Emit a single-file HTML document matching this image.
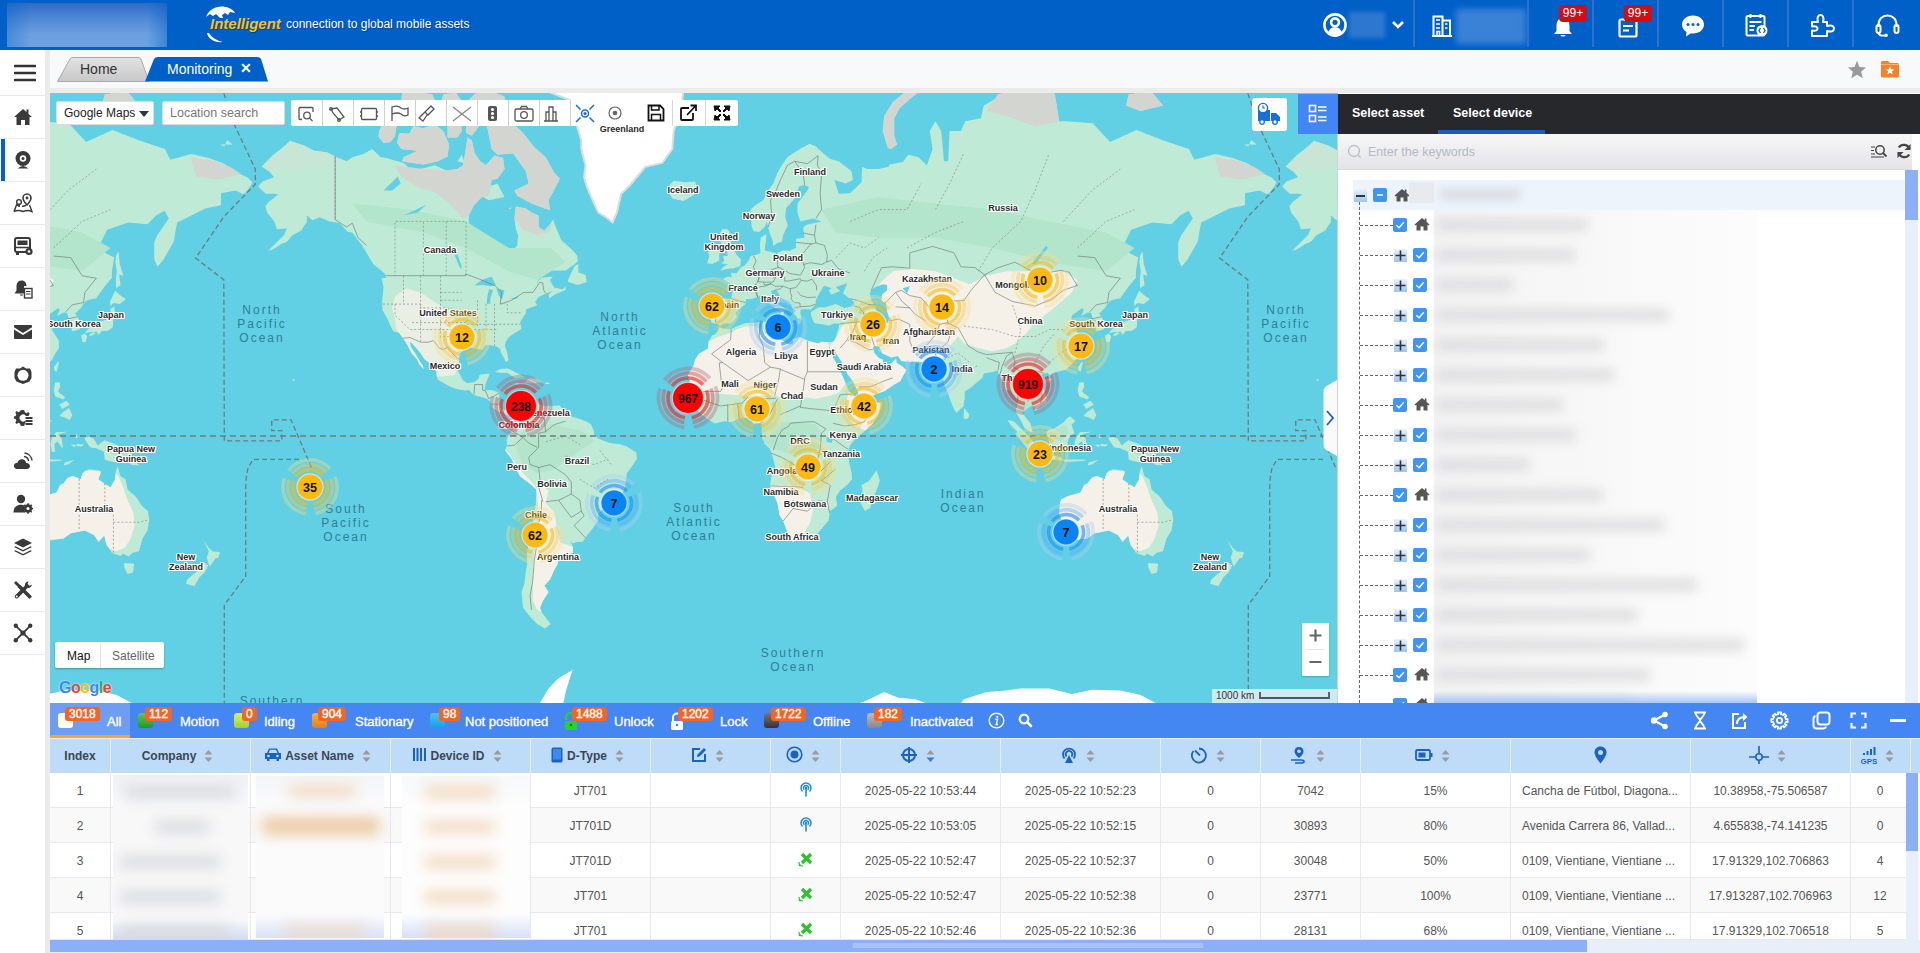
<!DOCTYPE html>
<html><head><meta charset="utf-8"><title>Monitoring</title>
<style>
*{box-sizing:border-box;margin:0;padding:0}
html,body{width:1920px;height:953px;overflow:hidden;background:#f7f8fa;font-family:"Liberation Sans",sans-serif;font-size:13px;color:#333}
.abs{position:absolute}
#hdr{position:absolute;left:0;top:0;width:1920px;height:50px;background:#0060c7}
.blur{position:absolute;filter:blur(6px)}
.sep{position:absolute;top:0;width:2px;height:47px;background:#2a72cc}
.badge99{position:absolute;height:17px;width:28px;border-radius:4px;background:#d20d16;color:#fff;font-size:12px;line-height:17px;text-align:center}
#side{position:absolute;left:0;top:50px;width:45px;height:903px;background:#fff}
#sidegap{position:absolute;left:45px;top:50px;width:5px;height:903px;background:#ebebeb}
.sitem{position:absolute;left:0;width:45px;height:43px;border-top:1px solid #e8eaf2}
.sitem svg{position:absolute;left:13px;top:11px}
#tabs{position:absolute;left:50px;top:50px;width:1870px;height:38px;background:#f8f9fa}
#tabgap{position:absolute;left:50px;top:88px;width:1870px;height:5px;background:#ebebeb}
#map{position:absolute;left:50px;top:93px;width:1288px;height:610px;overflow:hidden;background:#61d0e4}
.tb{position:absolute;background:#fff;border-radius:2px}
.lbl{position:absolute;font-size:9px;font-weight:bold;color:#2a2a2a;white-space:nowrap;text-shadow:-1px 0 #fff,1px 0 #fff,0 -1px #fff,0 1px #fff,1px 1px #fff,-1px -1px #fff,1px -1px #fff,-1px 1px #fff;transform:translate(-50%,-50%);text-align:center;line-height:10px}
.ocn{position:absolute;font-size:12px;color:#2f7f96;letter-spacing:2px;text-align:center;line-height:14px;transform:translate(-50%,-50%);white-space:nowrap}
.cl{position:absolute;transform:translate(-50%,-50%)}
#panel{position:absolute;left:1338px;top:93px;width:582px;height:610px;background:#fff}
#status{position:absolute;left:50px;top:703px;width:1870px;height:35px;background:#4486f2;color:#fff}
.st{position:absolute;top:1px;height:35px;font-size:13px;line-height:35px;white-space:nowrap;-webkit-text-stroke:0.35px #fff}
.cnt{position:absolute;top:4px;height:14px;border-radius:3px;background:#f26522;color:#fff;font-size:12px;line-height:14px;padding:0 4px;-webkit-text-stroke:0.4px #fff}
.sq{position:absolute;top:10px;width:15px;height:15px;border-radius:3px}
#thead{position:absolute;left:50px;top:738px;width:1870px;height:35px;background:#bedcf8;border-top:1px solid #e6f0fb}
.th{position:absolute;top:0;height:34px;border-right:1px solid #e4eefb;font-weight:bold;color:#3a4656;font-size:12px;line-height:34px;text-align:center;white-space:nowrap}
.row{position:absolute;left:50px;width:1856px;height:35px;border-bottom:1px solid #e6e9f0}
.td{position:absolute;top:0;height:34px;border-right:1px solid #e6e9f0;color:#555;font-size:12px;line-height:36px;text-align:center;white-space:nowrap;overflow:hidden}
.sort{display:inline-block;width:9px;height:14px;vertical-align:middle;margin-left:8px;position:relative;top:-1px}
</style></head><body>
<div id="hdr">
 <div class="abs" style="left:7px;top:3px;width:160px;height:44px;background:linear-gradient(180deg,#2d6cc6 0%,#4f88d6 35%,#6c9fdf 70%,#70a2e0 100%);overflow:hidden"><div class="abs" style="left:140px;top:0;width:20px;height:44px;background:linear-gradient(90deg,rgba(0,96,199,0),rgba(0,96,199,.45))"></div><div class="abs" style="left:0;top:0;width:25px;height:44px;background:linear-gradient(90deg,rgba(0,96,199,.35),rgba(0,96,199,0))"></div></div>
 <svg class="abs" style="left:203px;top:3px" width="36" height="42" viewBox="0 0 36 42">
  <path d="M3 14 C6 5 17 1 26 5 C29 6 31 8 32 10 L27 9 L25 12 L22 10 L19 12 L20 15 L17 15 L13 11 L10 13 L7 11 Z" fill="#fff"/>
  <path d="M4 30 C5 36 12 40 20 39 C15 38 9 35 6 30 Z" fill="#fff"/>
 </svg>
 <div class="abs" style="left:210px;top:15px;font-size:15px;font-weight:bold;font-style:italic;color:#fbc01e;text-shadow:1px 1px 1px rgba(0,0,0,.35)">Intelligent</div>
 <div class="abs" style="left:286px;top:17px;font-size:12px;color:#fff;text-shadow:1px 1px 1px rgba(0,0,0,.3)">connection to global mobile assets</div>

 <svg class="abs" style="left:1323px;top:13px" width="24" height="24" viewBox="0 0 24 24"><circle cx="12" cy="12" r="10.6" fill="none" stroke="#fff" stroke-width="2.6"/><circle cx="12" cy="9.3" r="3.9" fill="none" stroke="#fff" stroke-width="2.6"/><path d="M5.2 19.5 C6.5 15.2 9 14.2 12 14.2 C15 14.2 17.5 15.2 18.8 19.5 C17 21.2 14.8 22 12 22 C9.2 22 7 21.2 5.2 19.5 Z" fill="#fff"/></svg>
 <div class="blur" style="left:1349px;top:12px;width:36px;height:26px;background:#2d77d0;filter:blur(2px)"></div>
 <svg class="abs" style="left:1391px;top:20px" width="14" height="10" viewBox="0 0 14 10"><path d="M2 2 L7 7 L12 2" fill="none" stroke="#fff" stroke-width="2.6"/></svg>
 <div class="sep" style="left:1413px"></div>
 <svg class="abs" style="left:1432px;top:15px" width="20" height="22" viewBox="0 0 20 22"><path d="M1.5 21 V1.5 H10.5 V21 M10.5 5.5 H18 V21 M0 21 H20" fill="none" stroke="#fff" stroke-width="2"/><path d="M4 5 H8 M4 9 H8 M4 13 H8 M13 9 H15.5 M13 13 H15.5 M5 21 V16.5 H7.5 V21" stroke="#fff" stroke-width="1.6" fill="none"/></svg>
 <div class="blur" style="left:1456px;top:9px;width:70px;height:35px;background:#3a82d6;filter:blur(3px)"></div>
 <div class="sep" style="left:1527px"></div>
 <svg class="abs" style="left:1552px;top:16px" width="22" height="22" viewBox="0 0 22 22"><path d="M11 2 C6 2 4.5 6 4.5 10 V15 L2 18 H20 L17.5 15 V10 C17.5 6 16 2 11 2 Z" fill="#fff"/><path d="M8.5 19 C8.5 21 13.5 21 13.5 19 Z" fill="#fff"/></svg>
 <div class="badge99" style="left:1559px;top:5px">99+</div>
 <div class="sep" style="left:1592px"></div>
 <svg class="abs" style="left:1618px;top:15px" width="20" height="23" viewBox="0 0 20 23"><rect x="1.5" y="4.5" width="17" height="17" rx="1.5" fill="none" stroke="#fff" stroke-width="2.2"/><path d="M5 11 H15 M5 15.5 H11" stroke="#fff" stroke-width="2.2"/><rect x="6" y="2" width="8" height="4" fill="#fff"/></svg>
 <div class="badge99" style="left:1624px;top:5px">99+</div>
 <div class="sep" style="left:1657px"></div>
 <svg class="abs" style="left:1681px;top:14px" width="24" height="23" viewBox="0 0 24 23"><path d="M12 1.5 C5.5 1.5 1 5.5 1 10.5 C1 14 3 16.5 5.5 18 L5 22.5 L10 19.3 C10.7 19.4 11.3 19.5 12 19.5 C18.5 19.5 23 15.5 23 10.5 C23 5.5 18.5 1.5 12 1.5 Z" fill="#fff"/><circle cx="7" cy="10.5" r="1.5" fill="#0060c7"/><circle cx="12" cy="10.5" r="1.5" fill="#0060c7"/><circle cx="17" cy="10.5" r="1.5" fill="#0060c7"/></svg>
 <div class="sep" style="left:1722px"></div>
 <svg class="abs" style="left:1745px;top:13px" width="24" height="25" viewBox="0 0 24 25"><rect x="1.5" y="3" width="18" height="19.5" rx="1.5" fill="none" stroke="#fff" stroke-width="2"/><path d="M5.5 1 V5 M15.5 1 V5 M4.5 9 H16.5 M4.5 13 H10 M4.5 17 H9" stroke="#fff" stroke-width="2"/><circle cx="17" cy="17.5" r="5.5" fill="#fff"/><path d="M15.5 15 L14 17.5 L15.5 20 M18.5 15 L20 17.5 L18.5 20" stroke="#0060c7" stroke-width="1.3" fill="none"/></svg>
 <div class="sep" style="left:1787px"></div>
 <svg class="abs" style="left:1810px;top:13px" width="26" height="26" viewBox="0 0 26 26"><path d="M2 9 H8 C6.5 4 8.5 2 10.5 2 C12.5 2 14.5 4 13 9 H17 V13 C22 11.5 24 13.5 24 15.5 C24 17.5 22 19.5 17 18 V23 H2 V17.5 C6 18.5 7.5 17 7.5 15.5 C7.5 14 6 12.5 2 13.5 Z" fill="none" stroke="#fff" stroke-width="2" stroke-linejoin="round"/></svg>
 <div class="sep" style="left:1852px"></div>
 <svg class="abs" style="left:1875px;top:14px" width="25" height="24" viewBox="0 0 25 24"><path d="M3.5 13 V10.5 C3.5 5 7.5 1.5 12.5 1.5 C17.5 1.5 21.5 5 21.5 10.5 V13" fill="none" stroke="#fff" stroke-width="2"/><rect x="1.5" y="11" width="4" height="8" rx="2" fill="none" stroke="#fff" stroke-width="2"/><rect x="19.5" y="11" width="4" height="8" rx="2" fill="none" stroke="#fff" stroke-width="2"/><path d="M3.5 19 C4 21.5 6 22 10 21.5" fill="none" stroke="#fff" stroke-width="1.8"/><circle cx="11" cy="21.3" r="1.8" fill="#fff"/></svg>
</div>

<div id="side">
 <svg class="abs" style="left:14px;top:14px" width="22" height="18" viewBox="0 0 22 18"><path d="M1 2 H21 M1 9 H21 M1 16 H21" stroke="#333" stroke-width="2.6" stroke-linecap="round"/></svg>
<div class="sitem" style="top:45px"><svg width="20" height="20" viewBox="0 0 20 20"><path d="M10 2 L1 10 H3.5 V18 H8 V13 H12 V18 H16.5 V10 H19 L15.5 6.9 V2.5 H13.5 V5.1 Z" fill="#3a3a3a"/></svg></div><div class="sitem" style="top:88px"><div class="abs" style="left:1px;top:0;width:4px;height:42px;background:#0a5cc8"></div><svg width="20" height="20" viewBox="0 0 20 20"><circle cx="10" cy="8.5" r="7.5" fill="#3a3a3a"/><circle cx="10" cy="8.5" r="3.2" fill="#fff"/><circle cx="10" cy="8.5" r="1.5" fill="#3a3a3a"/><path d="M4.5 18.5 Q10 13.5 15.5 18.5 Z" fill="#3a3a3a"/></svg></div><div class="sitem" style="top:131px"><svg width="20" height="20" viewBox="0 0 20 20"><path d="M1 18.5 L3.5 12 L6.5 13 M9 13.5 L13 12.5 M16.5 12 L19 18.5 Q15 16.5 10 18.5 Q5 16.5 1 18.5" fill="none" stroke="#3a3a3a" stroke-width="1.4"/><path d="M14 1 C11.5 1 10 3 10 5 C10 7.5 14 12 14 12 C14 12 18 7.5 18 5 C18 3 16.5 1 14 1 Z" fill="none" stroke="#3a3a3a" stroke-width="1.6"/><circle cx="14" cy="5" r="1.4" fill="#3a3a3a"/><circle cx="6" cy="9" r="2.4" fill="none" stroke="#3a3a3a" stroke-width="1.4"/><path d="M6 11.5 V14" stroke="#3a3a3a" stroke-width="1.4"/></svg></div><div class="sitem" style="top:174px"><svg width="20" height="20" viewBox="0 0 20 20"><rect x="2" y="2" width="15" height="14" rx="2" fill="none" stroke="#3a3a3a" stroke-width="2"/><rect x="4.5" y="4.5" width="10" height="4.5" fill="#3a3a3a"/><path d="M2 11.5 H17" stroke="#3a3a3a" stroke-width="1.5"/><rect x="3" y="16" width="3" height="3" fill="#3a3a3a"/><circle cx="16" cy="15.5" r="3.6" fill="#3a3a3a"/><circle cx="16" cy="15.5" r="1.3" fill="#fff"/></svg></div><div class="sitem" style="top:217px"><svg width="20" height="20" viewBox="0 0 20 20"><path d="M8.5 1.5 C5 1.5 3.5 4.5 3.5 7.5 V11.5 L1.5 14.5 H11 V7 H13.5 C13.5 4 12 1.5 8.5 1.5 Z" fill="#3a3a3a"/><path d="M6.5 15.5 Q8.5 18 10.5 15.5 Z" fill="#3a3a3a"/><rect x="11.5" y="9.5" width="7.5" height="9.5" fill="#fff" stroke="#3a3a3a" stroke-width="1.4"/><path d="M13 12.5 H17.5 M13 15 H17.5" stroke="#3a3a3a" stroke-width="1.1"/></svg></div><div class="sitem" style="top:260px"><svg width="20" height="20" viewBox="0 0 20 20"><path d="M1 4 Q1 3 2 3 H18 Q19 3 19 4 V5.3 L10 11 L1 5.3 Z" fill="#3a3a3a"/><path d="M1 7.5 L10 13 L19 7.5 V16 Q19 17 18 17 H2 Q1 17 1 16 Z" fill="#3a3a3a"/></svg></div><div class="sitem" style="top:303px"><svg width="20" height="20" viewBox="0 0 20 20"><path d="M10 1.5 L13 3.5 H17 L18.5 7 V13 L16.5 16.5 L10 19 L3.5 16.5 L1.5 13 V7 L3 3.5 H7 Z" fill="#3a3a3a"/><circle cx="10" cy="10.3" r="5.5" fill="#fff"/></svg></div><div class="sitem" style="top:346px"><svg width="20" height="20" viewBox="0 0 20 20"><path d="M8 1 L9.8 1.2 L10.3 3.3 L12 4.2 L13.9 3.1 L15.2 4.4 L14.2 6.3 L14.5 7 H11.5 A3.5 3.5 0 1 0 11 11.5 V14 L10.3 14.7 L9.8 16.8 L8 17 L6.2 16.8 L5.7 14.7 L4 13.8 L2.1 14.9 L0.8 13.6 L1.8 11.7 L1.2 9.9 L-0.6 9.4 V7.6 L1.2 7.1 L1.8 5.3 L0.8 3.4 L2.1 2.1 L4 3.2 L5.7 2.3 L6.2 1.2 Z" fill="#3a3a3a" transform="translate(1.5,1)"/><path d="M12.5 10 H19.5 M12.5 13 H19.5 M12.5 16 H19.5" stroke="#3a3a3a" stroke-width="1.8"/></svg></div><div class="sitem" style="top:389px"><svg width="20" height="20" viewBox="0 0 20 20"><path d="M4.5 18 C1.5 18 0.8 15.5 1 14.5 C1.3 12.5 3 11.5 4.5 11.8 C5 9 7.5 7.8 9.5 8.2 C11.5 8.5 13 10 13.2 12 C15.5 11.8 17 13.5 17 15 C17 17 15.5 18 14 18 Z" fill="#3a3a3a"/><path d="M11 5.5 A5 5 0 0 1 15.5 10 M11.5 2 A8.5 8.5 0 0 1 19 9.5" fill="none" stroke="#3a3a3a" stroke-width="1.4"/></svg></div><div class="sitem" style="top:432px"><svg width="20" height="20" viewBox="0 0 20 20"><circle cx="8" cy="5" r="4.2" fill="#3a3a3a"/><path d="M0.5 18.5 C0.5 13 4 10.8 8 10.8 C9.5 10.8 10.5 11 11.5 11.5 V18.5 Z" fill="#3a3a3a"/><circle cx="15" cy="14.5" r="4.2" fill="#3a3a3a"/><circle cx="15" cy="14.5" r="1.5" fill="#fff"/><path d="M15 9.2 V19.8 M9.7 14.5 H20.3 M11.3 10.8 L18.7 18.2 M18.7 10.8 L11.3 18.2" stroke="#3a3a3a" stroke-width="1.6"/><circle cx="15" cy="14.5" r="1.5" fill="#fff"/></svg></div><div class="sitem" style="top:475px"><svg width="20" height="20" viewBox="0 0 20 20"><path d="M10 1.5 L19 6 L10 10.5 L1 6 Z" fill="#3a3a3a"/><path d="M2.5 9.3 L10 13 L17.5 9.3 L19 10 L10 14.5 L1 10 Z" fill="#3a3a3a"/><path d="M2.5 13.3 L10 17 L17.5 13.3 L19 14 L10 18.5 L1 14 Z" fill="#3a3a3a"/></svg></div><div class="sitem" style="top:518px"><svg width="20" height="20" viewBox="0 0 20 20"><path d="M3 2 L6 5 L5.5 7 L16.5 18 L18 16.5 L7 5.5 L5 6 L2 3 Z" fill="#3a3a3a" stroke="#3a3a3a" stroke-width="1.4"/><path d="M15.5 1.5 C13 1.5 11.5 3.5 12 5.5 L2.5 15 C1.5 16 1.5 17.5 2.5 18 C3.5 19 4.5 18.5 5.5 17.5 L14.5 8 C16.5 8.5 18.8 7 18.8 4.5 L16.8 5.8 L14.5 4 Z" fill="#3a3a3a"/><circle cx="3.8" cy="16.5" r="0.9" fill="#fff"/></svg></div><div class="sitem" style="top:561px"><svg width="20" height="20" viewBox="0 0 20 20"><circle cx="10" cy="10" r="2.6" fill="#3a3a3a"/><circle cx="2.8" cy="2.8" r="2.2" fill="#3a3a3a"/><circle cx="17.2" cy="2.8" r="2.2" fill="#3a3a3a"/><circle cx="2.8" cy="17.2" r="2.2" fill="#3a3a3a"/><circle cx="17.2" cy="17.2" r="2.2" fill="#3a3a3a"/><path d="M2.8 2.8 L17.2 17.2 M17.2 2.8 L2.8 17.2 M10 10 L10 10" stroke="#3a3a3a" stroke-width="1.8"/><path d="M5 10 H15 M10 5 V15" stroke="#3a3a3a" stroke-width="0" /></svg></div><div class="sitem" style="top:604px;height:1px"></div></div>
<div id="sidegap"></div>
<div id="tabs">
 <svg class="abs" style="left:7px;top:7px" width="220" height="25" viewBox="0 0 220 25">
  <defs><linearGradient id="gh" x1="0" y1="0" x2="0" y2="1"><stop offset="0" stop-color="#e3e3e3"/><stop offset="1" stop-color="#c8c8c8"/></linearGradient></defs>
  <path d="M0.5 24.5 L13 2 Q14 0.5 16 0.5 L81 0.5 Q83 0.5 84 2 L92 24.5 Z" fill="url(#gh)" stroke="#a9a9a9" stroke-width="1"/>
  <path d="M88 24.5 L97 2 Q98 0 101 0 L200 0 Q203 0 204 2 L211 24.5 Z" fill="#0060c7"/>
 </svg>
 <div class="abs" style="left:30px;top:11px;font-size:14px;color:#333">Home</div>
 <div class="abs" style="left:117px;top:11px;font-size:14px;color:#fff">Monitoring</div>
 <div class="abs" style="left:190px;top:10px;font-size:14px;color:#fff;font-weight:bold">✕</div>
 <svg class="abs" style="left:1797px;top:10px" width="20" height="19" viewBox="0 0 24 23"><path d="M12 1 L15 8.5 L23 9 L17 14.2 L19 22 L12 17.8 L5 22 L7 14.2 L1 9 L9 8.5 Z" fill="#9a9a9a"/></svg>
 <svg class="abs" style="left:1830px;top:9px" width="20" height="20" viewBox="0 0 20 20"><path d="M1 3.5 Q1 2 2.5 2 H8 L10 4 H17.5 Q19 4 19 5.5 V17 Q19 18.5 17.5 18.5 H2.5 Q1 18.5 1 17 Z" fill="#f5812a"/><path d="M1 5.5 H19" stroke="#ffb26b" stroke-width="1"/><path d="M10 7.5 L11.2 10.3 L14.2 10.5 L11.9 12.4 L12.6 15.3 L10 13.7 L7.4 15.3 L8.1 12.4 L5.8 10.5 L8.8 10.3 Z" fill="#fff"/></svg>
</div>
<div id="tabgap"></div>
<div id="map"><svg width="1288" height="610" viewBox="0 0 1288 610" style="position:absolute;left:0;top:0"><rect width="1288" height="610" fill="#61d0e4"/><path fill="#bfebd6"  d="M208.1 93.4L212.7 88.5L224.1 84.2L219.0 78.3L211.8 73.4L222.7 62.6L234.0 53.4L240.3 48.1L253.9 52.5L263.9 57.7L276.7 59.3L285.2 63.5L296.6 68.3L302.3 64.3L313.7 61.0L322.2 56.0L330.7 64.3L336.4 65.1L353.5 69.9L362.0 77.6L373.4 75.3L384.8 72.2L396.2 77.6L407.5 76.1L413.2 72.2L417.5 44.5L421.8 47.2L424.6 60.2L430.3 68.3L436.0 72.2L444.5 62.6L453.1 65.1L454.5 76.1L447.4 85.7L441.7 87.1L438.8 100.8L430.3 105.4L423.2 113.6L418.9 122.6L418.4 135.1L423.5 144.7L430.3 144.7L438.8 151.4L444.5 153.4L452.2 154.9L452.2 165.0L458.7 172.5L461.6 169.2L462.2 157.4L467.3 152.4L468.1 142.1L465.9 136.2L464.4 125.5L465.9 113.6L475.8 115.4L481.5 119.6L488.6 122.6L488.6 134.0L494.3 137.8L500.0 131.2L503.1 126.7L505.7 134.0L511.4 147.3L518.5 153.4L522.7 157.4L527.0 162.2L527.9 168.3L524.2 171.5L515.6 177.4L504.3 177.4L497.1 177.4L490.0 184.8L485.8 191.2L491.5 184.8L502.8 183.5L500.0 187.0L502.0 191.2L504.3 194.5L512.8 196.5L515.6 193.2L515.6 196.9L505.7 201.0L499.4 205.3L498.6 201.4L502.8 198.1L495.7 200.6L488.6 204.1L485.2 208.8L487.2 212.3L482.9 213.8L475.8 216.4L475.8 220.5L473.0 224.2L470.1 229.6L471.5 235.9L464.7 240.1L459.0 244.1L455.9 248.5L454.8 252.5L457.3 260.0L458.5 267.3L455.9 269.2L453.9 264.8L451.1 260.0L450.2 256.1L446.5 253.5L440.3 252.2L436.0 251.8L432.6 256.7L428.9 256.4L419.5 254.5L416.1 255.8L409.8 260.6L409.3 266.4L408.4 272.6L408.1 278.2L412.9 287.3L417.5 290.3L424.6 289.1L428.9 285.5L429.4 281.9L438.5 280.4L439.4 281.6L437.4 286.4L435.1 292.4L434.6 297.2L441.7 296.9L449.6 299.8L448.8 307.2L448.2 311.5L450.2 314.4L454.5 317.3L460.2 315.9L466.4 318.4L470.1 316.7L471.5 313.3L473.5 311.5L478.7 310.6L482.9 307.5L484.3 309.8L481.8 313.0L482.6 311.5L487.2 309.8L492.9 313.0L504.3 312.7L509.9 312.4L514.2 318.7L521.3 323.6L529.9 325.9L537.0 328.8L541.2 331.6L544.1 338.7L544.1 341.6L548.3 345.8L559.7 350.1L569.7 351.3L576.8 353.5L586.2 359.5L587.0 365.8L581.1 374.5L576.8 380.3L575.4 393.6L571.7 402.0L566.8 410.3L563.4 410.3L554.6 413.4L548.3 421.2L548.1 427.6L543.5 434.2L537.0 442.5L532.7 448.7L526.4 449.0L522.7 450.4L520.2 448.0L523.0 453.9L522.7 460.0L509.1 462.9L507.7 471.1L504.3 476.8L500.0 486.6L494.3 492.8L498.6 499.0L492.9 507.7L490.0 514.9L491.5 519.1L500.6 531.1L494.9 535.6L487.2 531.1L480.1 523.8L473.0 514.5L471.5 499.0L474.4 490.7L475.8 478.7L477.2 471.1L476.9 458.2L479.2 451.1L482.6 442.5L482.9 432.5L483.5 422.8L485.8 411.8L486.3 396.6L481.5 392.1L470.1 383.2L467.0 377.4L461.6 365.8L455.0 357.2L457.3 351.5L456.5 347.3L458.7 341.6L462.2 337.9L465.9 331.6L466.4 323.0L463.6 318.7L460.2 317.9L457.3 322.2L453.1 319.6L448.2 318.7L442.2 314.4L442.5 310.9L437.4 306.0L433.1 304.5L426.0 302.8L423.2 301.3L418.9 296.9L414.7 297.5L407.5 296.3L402.1 294.5L396.2 291.5L387.6 286.4L386.8 283.1L386.5 278.8L383.7 275.1L379.1 269.5L374.8 266.4L370.6 260.3L366.3 255.1L360.0 248.2L360.6 253.5L364.9 260.0L370.6 269.5L372.6 272.6L373.7 276.1L369.1 271.1L367.2 266.4L361.5 260.0L357.2 251.8L353.2 245.2L349.2 240.1L343.3 238.3L339.6 231.0L337.9 226.7L332.5 217.2L332.2 207.3L333.6 194.5L331.6 185.3L336.4 184.8L335.6 181.4L330.7 177.0L323.6 171.5L320.8 166.9L315.1 157.4L312.3 152.4L308.0 147.3L302.3 139.4L298.0 138.9L289.5 130.1L279.5 128.4L269.6 124.3L262.5 127.2L256.8 122.6L256.8 129.5L254.5 132.3L251.1 137.8L242.6 142.1L236.9 148.8L231.2 150.9L222.7 156.4L218.4 157.4L225.5 150.4L234.0 142.1L236.9 135.6L226.9 136.2L224.4 128.4L217.0 119.6L215.5 113.6L218.4 109.2L228.3 101.5L224.1 100.8L215.8 100.8L208.1 93.4ZM1232.1 93.4L1236.7 88.5L1248.1 84.2L1243.0 78.3L1235.8 73.4L1246.7 62.6L1258.0 53.4L1264.3 48.1L1277.9 52.5L1287.9 57.7L1300.7 59.3L1309.2 63.5L1320.6 68.3L1326.3 64.3L1337.7 61.0L1346.2 56.0L1354.7 64.3L1360.4 65.1L1377.5 69.9L1386.0 77.6L1397.4 75.3L1408.8 72.2L1420.2 77.6L1431.5 76.1L1437.2 72.2L1441.5 44.5L1445.8 47.2L1448.6 60.2L1454.3 68.3L1460.0 72.2L1468.5 62.6L1477.1 65.1L1478.5 76.1L1471.4 85.7L1465.7 87.1L1462.8 100.8L1454.3 105.4L1447.2 113.6L1442.9 122.6L1442.4 135.1L1447.5 144.7L1454.3 144.7L1462.8 151.4L1468.5 153.4L1476.2 154.9L1476.2 165.0L1482.7 172.5L1485.6 169.2L1486.2 157.4L1491.3 152.4L1492.1 142.1L1489.9 136.2L1488.4 125.5L1489.9 113.6L1499.8 115.4L1505.5 119.6L1512.6 122.6L1512.6 134.0L1518.3 137.8L1524.0 131.2L1527.1 126.7L1529.7 134.0L1535.4 147.3L1542.5 153.4L1546.7 157.4L1551.0 162.2L1551.9 168.3L1548.2 171.5L1539.6 177.4L1528.3 177.4L1521.1 177.4L1514.0 184.8L1509.8 191.2L1515.5 184.8L1526.8 183.5L1524.0 187.0L1526.0 191.2L1528.3 194.5L1536.8 196.5L1539.6 193.2L1539.6 196.9L1529.7 201.0L1523.4 205.3L1522.6 201.4L1526.8 198.1L1519.7 200.6L1512.6 204.1L1509.2 208.8L1511.2 212.3L1506.9 213.8L1499.8 216.4L1499.8 220.5L1497.0 224.2L1494.1 229.6L1495.5 235.9L1488.7 240.1L1483.0 244.1L1479.9 248.5L1478.8 252.5L1481.3 260.0L1482.5 267.3L1479.9 269.2L1477.9 264.8L1475.1 260.0L1474.2 256.1L1470.5 253.5L1464.3 252.2L1460.0 251.8L1456.6 256.7L1452.9 256.4L1443.5 254.5L1440.1 255.8L1433.8 260.6L1433.3 266.4L1432.4 272.6L1432.1 278.2L1436.9 287.3L1441.5 290.3L1448.6 289.1L1452.9 285.5L1453.4 281.9L1462.5 280.4L1463.4 281.6L1461.4 286.4L1459.1 292.4L1458.6 297.2L1465.7 296.9L1473.6 299.8L1472.8 307.2L1472.2 311.5L1474.2 314.4L1478.5 317.3L1484.2 315.9L1490.4 318.4L1494.1 316.7L1495.5 313.3L1497.5 311.5L1502.7 310.6L1506.9 307.5L1508.3 309.8L1505.8 313.0L1506.6 311.5L1511.2 309.8L1516.9 313.0L1528.3 312.7L1533.9 312.4L1538.2 318.7L1545.3 323.6L1553.9 325.9L1561.0 328.8L1565.2 331.6L1568.1 338.7L1568.1 341.6L1572.3 345.8L1583.7 350.1L1593.7 351.3L1600.8 353.5L1610.2 359.5L1611.0 365.8L1605.1 374.5L1600.8 380.3L1599.4 393.6L1595.7 402.0L1590.8 410.3L1587.4 410.3L1578.6 413.4L1572.3 421.2L1572.1 427.6L1567.5 434.2L1561.0 442.5L1556.7 448.7L1550.4 449.0L1546.7 450.4L1544.2 448.0L1547.0 453.9L1546.7 460.0L1533.1 462.9L1531.7 471.1L1528.3 476.8L1524.0 486.6L1518.3 492.8L1522.6 499.0L1516.9 507.7L1514.0 514.9L1515.5 519.1L1524.6 531.1L1518.9 535.6L1511.2 531.1L1504.1 523.8L1497.0 514.5L1495.5 499.0L1498.4 490.7L1499.8 478.7L1501.2 471.1L1500.9 458.2L1503.2 451.1L1506.6 442.5L1506.9 432.5L1507.5 422.8L1509.8 411.8L1510.3 396.6L1505.5 392.1L1494.1 383.2L1491.0 377.4L1485.6 365.8L1479.0 357.2L1481.3 351.5L1480.5 347.3L1482.7 341.6L1486.2 337.9L1489.9 331.6L1490.4 323.0L1487.6 318.7L1484.2 317.9L1481.3 322.2L1477.1 319.6L1472.2 318.7L1466.2 314.4L1466.5 310.9L1461.4 306.0L1457.1 304.5L1450.0 302.8L1447.2 301.3L1442.9 296.9L1438.7 297.5L1431.5 296.3L1426.1 294.5L1420.2 291.5L1411.6 286.4L1410.8 283.1L1410.5 278.8L1407.7 275.1L1403.1 269.5L1398.8 266.4L1394.6 260.3L1390.3 255.1L1384.0 248.2L1384.6 253.5L1388.9 260.0L1394.6 269.5L1396.6 272.6L1397.7 276.1L1393.1 271.1L1391.2 266.4L1385.5 260.0L1381.2 251.8L1377.2 245.2L1373.2 240.1L1367.3 238.3L1363.6 231.0L1361.9 226.7L1356.5 217.2L1356.2 207.3L1357.6 194.5L1355.6 185.3L1360.4 184.8L1359.6 181.4L1354.7 177.0L1347.6 171.5L1344.8 166.9L1339.1 157.4L1336.3 152.4L1332.0 147.3L1326.3 139.4L1322.0 138.9L1313.5 130.1L1303.5 128.4L1293.6 124.3L1286.5 127.2L1280.8 122.6L1280.8 129.5L1278.5 132.3L1275.1 137.8L1266.6 142.1L1260.9 148.8L1255.2 150.9L1246.7 156.4L1242.4 157.4L1249.5 150.4L1258.0 142.1L1260.9 135.6L1250.9 136.2L1248.4 128.4L1241.0 119.6L1239.5 113.6L1242.4 109.2L1252.3 101.5L1248.1 100.8L1239.8 100.8L1232.1 93.4ZM-353.6 233.1L-350.2 230.6L-343.7 230.6L-340.0 227.4L-337.1 223.4L-338.6 220.5L-336.3 216.8L-331.4 213.4L-328.6 211.1L-327.7 206.1L-322.6 206.1L-316.4 204.1L-312.1 201.8L-307.8 207.3L-302.1 213.0L-297.3 215.7L-293.3 218.3L-293.0 226.0L-290.8 222.4L-289.3 216.8L-285.1 217.9L-292.2 213.4L-298.2 209.2L-302.1 202.6L-302.7 197.7L-299.0 196.5L-296.5 198.6L-295.0 201.4L-292.2 205.3L-285.1 209.2L-282.5 211.9L-280.2 220.5L-276.5 224.9L-276.0 230.3L-273.7 231.3L-272.3 225.3L-273.7 220.5L-273.4 216.8L-269.4 216.1L-263.2 216.4L-258.1 211.5L-258.3 208.0L-256.3 203.3L-253.2 198.1L-250.4 193.2L-249.5 192.8L-242.4 195.3L-245.3 197.7L-242.4 201.4L-233.9 198.1L-238.1 194.1L-226.8 190.3L-231.0 200.6L-223.9 205.7L-219.7 209.2L-219.7 213.0L-229.6 214.9L-238.1 211.1L-249.5 214.5L-255.2 214.2L-262.6 218.7L-263.2 220.5L-262.3 224.2L-260.0 229.6L-258.1 230.6L-250.9 231.3L-245.3 232.8L-239.6 230.3L-234.7 231.0L-235.3 234.9L-238.1 243.5L-239.6 248.5L-245.8 249.2L-245.3 253.5L-244.7 253.8L-241.8 260.6L-240.1 260.0L-238.4 255.1L-238.1 260.0L-233.9 266.4L-229.6 272.6L-226.8 280.4L-221.1 287.9L-216.2 298.4L-214.5 306.6L-209.7 306.3L-198.3 301.3L-189.2 298.1L-179.8 291.5L-173.6 287.9L-171.3 283.4L-167.6 277.3L-171.0 273.9L-177.6 269.8L-177.8 265.7L-184.1 272.0L-191.2 271.7L-191.2 266.7L-195.5 264.8L-199.7 260.0L-201.2 255.1L-199.7 252.8L-194.6 253.5L-191.8 260.3L-182.7 264.5L-176.1 262.9L-172.7 267.9L-162.5 268.9L-155.7 268.6L-147.1 270.1L-142.0 273.6L-140.9 277.9L-135.7 282.5L-131.5 277.9L-131.2 281.3L-130.6 287.6L-129.5 292.4L-125.5 301.3L-122.9 309.2L-120.1 315.9L-117.3 319.9L-115.3 317.6L-110.7 313.5L-109.3 305.7L-109.3 298.4L-103.6 295.1L-97.3 289.4L-91.7 284.9L-90.2 280.4L-84.5 279.4L-80.3 278.8L-76.6 277.3L-74.6 283.4L-69.5 289.4L-68.9 296.3L-66.1 297.5L-60.4 295.4L-57.2 307.2L-58.1 315.9L-57.5 320.2L-52.4 328.8L-49.6 335.0L-43.3 339.3L-41.3 339.0L-43.6 330.2L-49.0 323.6L-52.1 318.7L-55.5 313.0L-53.3 304.5L-50.7 304.2L-46.1 308.6L-43.3 312.7L-39.6 313.8L-39.0 318.2L-33.9 313.3L-27.7 310.1L-27.1 305.7L-29.6 296.9L-34.8 292.4L-36.8 287.9L-34.8 283.4L-30.5 280.4L-25.9 280.1L-24.2 284.0L-22.0 280.4L-13.4 277.9L-7.7 276.4L-2.1 271.1L2.2 266.4L5.6 260.0L9.0 255.1L8.8 250.5L9.0 247.8L5.1 241.8L1.6 236.6L5.1 233.1L11.0 228.1L0.8 228.9L-2.6 226.0L-2.1 222.4L3.6 218.3L7.9 215.3L9.9 216.8L7.0 223.1L13.6 219.4L17.0 219.8L18.7 226.0L22.1 227.8L21.6 237.6L23.5 238.3L30.1 235.9L30.4 229.6L27.8 224.2L25.0 220.5L30.7 215.3L34.1 210.0L37.5 206.9L46.3 205.3L54.8 193.2L61.9 184.8L61.9 178.3L64.2 164.6L54.8 159.8L48.3 154.4L57.1 136.7L78.2 129.5L97.5 131.2L106.0 122.6L114.6 117.8L118.8 125.5L107.5 142.1L104.3 148.8L104.3 166.5L107.5 173.8L113.1 166.9L117.4 159.8L123.7 148.8L127.1 129.5L141.3 122.6L155.2 115.4L170.9 112.3L170.9 100.2L185.7 97.5L193.9 101.5L199.9 94.1L202.5 89.2L197.1 84.2L185.1 79.1L174.3 70.7L158.7 65.1L141.3 61.0L120.3 66.7L114.9 56.0L88.7 47.2L62.5 37.1L36.1 49.0L18.7 30.3L-7.7 28.3L-14.9 28.3L-19.1 1.2L-30.5 -7.2L-40.5 -20.1L-53.3 -4.8L-70.3 1.2L-90.2 12.6L-93.1 25.3L-108.7 28.3L-113.0 38.0L-124.4 38.0L-125.8 68.3L-130.1 68.3L-131.5 51.6L-132.9 38.0L-138.6 28.3L-144.3 38.0L-141.4 56.0L-147.1 72.2L-155.7 64.3L-165.6 61.8L-171.3 69.1L-184.1 71.4L-185.5 73.8L-195.5 76.1L-206.9 76.1L-212.0 73.8L-212.5 89.2L-223.9 100.2L-235.3 100.8L-239.6 87.1L-228.2 90.6L-221.1 87.1L-222.5 78.3L-235.3 68.3L-243.8 65.9L-250.9 60.2L-258.1 53.4L-264.3 50.8L-272.3 55.1L-280.8 60.2L-286.5 64.3L-292.2 72.2L-296.5 79.8L-300.7 90.6L-306.4 98.2L-310.7 107.3L-317.8 111.7L-323.5 116.6L-323.5 122.6L-322.1 134.0L-320.6 138.3L-314.9 138.9L-309.3 134.0L-307.3 128.9L-305.8 134.0L-304.1 141.0L-301.3 147.3L-300.7 152.9L-296.5 149.9L-292.2 148.8L-290.8 142.1L-286.2 132.3L-288.8 124.3L-287.9 114.8L-283.7 110.5L-278.0 104.1L-275.1 93.4L-269.4 92.0L-265.2 94.1L-266.6 97.5L-276.5 110.5L-276.5 119.6L-273.7 128.4L-260.9 125.5L-252.4 128.4L-267.4 131.8L-270.9 134.5L-269.4 144.7L-278.0 145.8L-278.0 154.9L-284.5 157.8L-290.8 157.4L-297.3 160.3L-303.6 158.8L-308.7 157.8L-309.3 155.9L-308.1 148.3L-307.5 141.0L-313.2 144.2L-314.1 152.4L-313.5 160.3L-317.8 161.7L-323.5 163.1L-324.9 166.9L-329.2 172.5L-333.1 174.3L-337.7 180.5L-343.1 179.6L-342.3 184.4L-346.2 183.5L-351.1 186.1L-344.0 190.3L-341.1 197.3L-342.8 205.7L-353.3 205.3L-360.5 204.5L-364.2 207.3L-363.0 209.2L-362.4 214.2L-364.7 220.5L-362.7 223.4L-363.0 229.6L-355.6 231.3ZM670.4 233.1L673.8 230.6L680.3 230.6L684.0 227.4L686.9 223.4L685.4 220.5L687.7 216.8L692.6 213.4L695.4 211.1L696.3 206.1L701.4 206.1L707.6 204.1L711.9 201.8L716.2 207.3L721.9 213.0L726.7 215.7L730.7 218.3L731.0 226.0L733.2 222.4L734.7 216.8L738.9 217.9L731.8 213.4L725.8 209.2L721.9 202.6L721.3 197.7L725.0 196.5L727.5 198.6L729.0 201.4L731.8 205.3L738.9 209.2L741.5 211.9L743.8 220.5L747.5 224.9L748.0 230.3L750.3 231.3L751.7 225.3L750.3 220.5L750.6 216.8L754.6 216.1L760.8 216.4L765.9 211.5L765.7 208.0L767.7 203.3L770.8 198.1L773.6 193.2L774.5 192.8L781.6 195.3L778.7 197.7L781.6 201.4L790.1 198.1L785.9 194.1L797.2 190.3L793.0 200.6L800.1 205.7L804.3 209.2L804.3 213.0L794.4 214.9L785.9 211.1L774.5 214.5L768.8 214.2L761.4 218.7L760.8 220.5L761.7 224.2L764.0 229.6L765.9 230.6L773.1 231.3L778.7 232.8L784.4 230.3L789.3 231.0L788.7 234.9L785.9 243.5L784.4 248.5L778.2 249.2L778.7 253.5L779.3 253.8L782.2 260.6L783.9 260.0L785.6 255.1L785.9 260.0L790.1 266.4L794.4 272.6L797.2 280.4L802.9 287.9L807.8 298.4L809.5 306.6L814.3 306.3L825.7 301.3L834.8 298.1L844.2 291.5L850.4 287.9L852.7 283.4L856.4 277.3L853.0 273.9L846.4 269.8L846.2 265.7L839.9 272.0L832.8 271.7L832.8 266.7L828.5 264.8L824.3 260.0L822.8 255.1L824.3 252.8L829.4 253.5L832.2 260.3L841.3 264.5L847.9 262.9L851.3 267.9L861.5 268.9L868.3 268.6L876.9 270.1L882.0 273.6L883.1 277.9L888.3 282.5L892.5 277.9L892.8 281.3L893.4 287.6L894.5 292.4L898.5 301.3L901.1 309.2L903.9 315.9L906.7 319.9L908.7 317.6L913.3 313.5L914.7 305.7L914.7 298.4L920.4 295.1L926.7 289.4L932.3 284.9L933.8 280.4L939.5 279.4L943.7 278.8L947.4 277.3L949.4 283.4L954.5 289.4L955.1 296.3L957.9 297.5L963.6 295.4L966.8 307.2L965.9 315.9L966.5 320.2L971.6 328.8L974.4 335.0L980.7 339.3L982.7 339.0L980.4 330.2L975.0 323.6L971.9 318.7L968.5 313.0L970.7 304.5L973.3 304.2L977.9 308.6L980.7 312.7L984.4 313.8L985.0 318.2L990.1 313.3L996.3 310.1L996.9 305.7L994.4 296.9L989.2 292.4L987.2 287.9L989.2 283.4L993.5 280.4L998.1 280.1L999.8 284.0L1002.0 280.4L1010.6 277.9L1016.3 276.4L1021.9 271.1L1026.2 266.4L1029.6 260.0L1033.0 255.1L1032.8 250.5L1033.0 247.8L1029.1 241.8L1025.6 236.6L1029.1 233.1L1035.0 228.1L1024.8 228.9L1021.4 226.0L1021.9 222.4L1027.6 218.3L1031.9 215.3L1033.9 216.8L1031.0 223.1L1037.6 219.4L1041.0 219.8L1042.7 226.0L1046.1 227.8L1045.6 237.6L1047.5 238.3L1054.1 235.9L1054.4 229.6L1051.8 224.2L1049.0 220.5L1054.7 215.3L1058.1 210.0L1061.5 206.9L1070.3 205.3L1078.8 193.2L1085.9 184.8L1085.9 178.3L1088.2 164.6L1078.8 159.8L1072.3 154.4L1081.1 136.7L1102.2 129.5L1121.5 131.2L1130.0 122.6L1138.6 117.8L1142.8 125.5L1131.5 142.1L1128.3 148.8L1128.3 166.5L1131.5 173.8L1137.1 166.9L1141.4 159.8L1147.7 148.8L1151.1 129.5L1165.3 122.6L1179.2 115.4L1194.9 112.3L1194.9 100.2L1209.7 97.5L1217.9 101.5L1223.9 94.1L1226.5 89.2L1221.1 84.2L1209.1 79.1L1198.3 70.7L1182.7 65.1L1165.3 61.0L1144.3 66.7L1138.9 56.0L1112.7 47.2L1086.5 37.1L1060.1 49.0L1042.7 30.3L1016.3 28.3L1009.1 28.3L1004.9 1.2L993.5 -7.2L983.5 -20.1L970.7 -4.8L953.7 1.2L933.8 12.6L930.9 25.3L915.3 28.3L911.0 38.0L899.6 38.0L898.2 68.3L893.9 68.3L892.5 51.6L891.1 38.0L885.4 28.3L879.7 38.0L882.6 56.0L876.9 72.2L868.3 64.3L858.4 61.8L852.7 69.1L839.9 71.4L838.5 73.8L828.5 76.1L817.1 76.1L812.0 73.8L811.5 89.2L800.1 100.2L788.7 100.8L784.4 87.1L795.8 90.6L802.9 87.1L801.5 78.3L788.7 68.3L780.2 65.9L773.1 60.2L765.9 53.4L759.7 50.8L751.7 55.1L743.2 60.2L737.5 64.3L731.8 72.2L727.5 79.8L723.3 90.6L717.6 98.2L713.3 107.3L706.2 111.7L700.5 116.6L700.5 122.6L701.9 134.0L703.4 138.3L709.1 138.9L714.7 134.0L716.7 128.9L718.2 134.0L719.9 141.0L722.7 147.3L723.3 152.9L727.5 149.9L731.8 148.8L733.2 142.1L737.8 132.3L735.2 124.3L736.1 114.8L740.3 110.5L746.0 104.1L748.9 93.4L754.6 92.0L758.8 94.1L757.4 97.5L747.5 110.5L747.5 119.6L750.3 128.4L763.1 125.5L771.6 128.4L756.6 131.8L753.1 134.5L754.6 144.7L746.0 145.8L746.0 154.9L739.5 157.8L733.2 157.4L726.7 160.3L720.4 158.8L715.3 157.8L714.7 155.9L715.9 148.3L716.5 141.0L710.8 144.2L709.9 152.4L710.5 160.3L706.2 161.7L700.5 163.1L699.1 166.9L694.8 172.5L690.9 174.3L686.3 180.5L680.9 179.6L681.7 184.4L677.8 183.5L672.9 186.1L680.0 190.3L682.9 197.3L681.2 205.7L670.7 205.3L663.5 204.5L659.8 207.3L661.0 209.2L661.6 214.2L659.3 220.5L661.3 223.4L661.0 229.6L668.4 231.3ZM778.7 253.5L781.6 261.6L787.3 272.6L792.1 281.9L795.8 290.9L799.2 298.4L804.3 303.4L809.5 309.2L812.9 313.3L820.0 310.9L831.9 309.2L831.4 313.0L828.5 321.6L822.8 330.2L815.7 337.3L807.2 344.4L801.5 350.1L798.7 355.8L798.1 362.4L799.5 371.6L801.5 378.8L802.1 386.2L797.2 392.1L790.1 397.5L785.9 404.1L787.3 412.7L780.2 418.1L779.6 419.6L778.7 427.6L774.5 432.2L767.4 440.8L759.4 445.9L748.9 446.6L743.2 448.7L738.9 446.6L738.1 440.8L733.2 428.0L729.5 421.9L727.5 410.3L723.8 401.1L719.9 393.0L721.3 383.2L725.3 374.5L723.8 368.1L721.3 360.1L719.9 355.8L714.7 351.0L712.8 344.4L713.6 340.2L714.2 333.0L710.5 330.2L703.4 330.8L699.1 325.0L696.0 324.8L689.7 325.6L680.6 329.3L674.9 328.2L665.0 330.5L659.3 327.3L653.6 323.3L648.5 318.7L643.6 313.0L638.8 307.2L637.4 300.7L639.4 295.4L639.9 287.9L637.9 281.9L643.6 272.6L645.1 266.4L649.3 260.6L657.9 255.8L658.7 248.5L662.1 242.4L664.7 241.4L667.8 238.3L669.5 233.8L672.1 235.6L680.6 236.3L686.3 233.5L694.8 230.3L704.8 229.6L714.7 228.5L717.6 229.6L716.2 233.1L717.0 234.9L714.7 239.4L717.6 242.4L723.3 243.8L729.5 245.8L738.9 251.8L743.2 250.5L743.2 246.5L748.9 243.8L757.4 247.8L768.8 250.5L771.6 248.8L778.2 249.2ZM826.5 377.4L829.9 387.6L828.0 393.6L824.3 402.6L820.0 414.9L814.9 418.1L810.6 410.3L810.0 405.6L812.6 398.1L811.5 392.1L818.6 388.2L822.8 382.6ZM670.1 177.8L676.3 176.1L683.5 175.2L690.3 172.9L691.1 166.5L686.9 162.2L685.4 159.8L681.7 151.9L680.6 149.9L681.2 142.1L677.8 136.2L672.1 136.2L669.2 142.1L670.4 148.3L672.1 152.4L676.3 155.4L677.2 159.3L677.8 163.1L673.2 163.1L674.4 167.9L671.2 170.2L677.8 171.5L674.4 172.9ZM669.2 168.3L669.2 162.7L669.2 157.4L669.2 153.9L665.0 153.4L662.1 157.4L657.9 158.8L659.3 163.1L657.3 170.2L662.1 171.1L668.1 168.3ZM618.0 94.1L623.7 87.8L635.1 89.2L645.1 88.5L647.9 97.5L643.6 102.1L633.7 107.9L622.3 105.4L618.0 98.2ZM500.0 117.2L498.6 107.3L509.9 85.7L504.3 79.8L495.7 64.3L484.3 54.2L473.0 39.9L458.7 26.3L444.5 30.3L436.0 28.3L441.7 56.0L447.4 61.8L463.0 60.2L475.8 78.3L478.7 90.6L464.4 97.5L467.3 102.8L481.5 110.5L492.9 114.8ZM352.1 68.3L362.0 69.9L373.4 71.4L387.6 68.3L397.6 63.5L399.0 51.6L393.3 38.0L384.8 31.3L373.4 35.2L363.5 33.2L359.2 40.8L349.2 39.9L347.2 49.9L351.2 56.0L367.7 57.7L353.5 64.3ZM328.5 43.6L333.6 49.9L340.7 49.0L345.0 42.7L347.0 30.3L352.1 21.1L342.1 18.0L332.2 20.1L333.6 28.3L329.3 38.0ZM517.6 188.7L527.9 192.0L536.7 189.1L535.5 181.8L528.4 179.6L528.4 171.1L524.7 172.9L519.9 182.7L517.6 188.7ZM67.6 373.6L70.5 383.2L75.6 386.2L77.6 396.6L86.1 404.1L91.8 412.7L97.8 418.1L99.2 426.7L97.5 437.5L92.7 445.3L89.0 458.2L82.7 459.7L78.4 463.6L73.3 460.7L70.5 462.9L61.9 460.0L59.7 456.1L56.3 451.5L54.3 442.5L48.6 448.7L44.0 441.9L34.9 437.5L20.7 440.2L13.6 445.6L2.2 447.3L-10.6 447.0L-8.6 439.2L-10.9 429.3L-14.9 421.2L-14.0 410.3L-12.9 406.6L-6.3 403.2L6.5 399.6L10.2 392.1L13.6 390.3L17.9 384.7L23.0 382.9L30.7 386.2L32.6 380.3L34.9 378.0L39.2 376.2L49.1 377.4L51.4 378.5L48.3 386.2L54.8 390.6L60.5 393.9L64.8 386.2L65.4 379.7ZM1091.6 373.6L1094.5 383.2L1099.6 386.2L1101.6 396.6L1110.1 404.1L1115.8 412.7L1121.8 418.1L1123.2 426.7L1121.5 437.5L1116.7 445.3L1113.0 458.2L1106.7 459.7L1102.4 463.6L1097.3 460.7L1094.5 462.9L1085.9 460.0L1083.7 456.1L1080.3 451.5L1078.3 442.5L1072.6 448.7L1068.0 441.9L1058.9 437.5L1044.7 440.2L1037.6 445.6L1026.2 447.3L1013.4 447.0L1015.4 439.2L1013.1 429.3L1009.1 421.2L1010.0 410.3L1011.1 406.6L1017.7 403.2L1030.5 399.6L1034.2 392.1L1037.6 390.3L1041.9 384.7L1047.0 382.9L1054.7 386.2L1056.6 380.3L1058.9 378.0L1063.2 376.2L1073.1 377.4L1075.4 378.5L1072.3 386.2L1078.8 390.6L1084.5 393.9L1088.8 386.2L1089.4 379.7ZM73.9 469.9L84.1 470.7L83.0 479.5L77.6 481.1L74.5 474.9ZM1097.9 469.9L1108.1 470.7L1107.0 479.5L1101.6 481.1L1098.5 474.9ZM397.6 44.5L407.5 44.5L411.8 38.0L410.4 25.3L404.7 23.2L397.6 33.2ZM416.1 39.9L421.8 42.7L428.9 33.2L424.6 23.2L416.1 25.3ZM424.6 16.9L441.7 18.0L457.3 16.9L454.5 3.5L436.0 -3.6L424.6 1.2L418.9 7.0ZM356.3 14.7L373.4 15.8L386.2 9.2L381.9 1.2L364.9 -1.2L352.1 -1.2L351.2 10.3ZM390.5 12.6L407.5 16.9L413.2 10.3L406.1 0.0L393.3 1.2ZM430.3 -4.8L458.7 -2.4L473.0 -24.1L487.2 -38.4L501.4 -71.3L458.7 -112.4L416.1 -71.3L410.4 -17.4ZM407.5 68.3L414.7 69.9L411.8 61.8ZM438.8 107.3L454.5 104.1L447.4 90.6L437.4 94.1L433.1 104.1ZM458.7 115.4L461.6 114.2L460.2 116.6ZM444.8 279.1L450.2 276.1L457.9 275.4L465.9 279.4L475.2 284.3L465.3 285.2L457.3 279.7L451.6 280.1ZM474.7 289.4L479.8 285.2L487.2 285.8L492.0 289.1L484.3 290.3L474.7 290.3ZM463.6 289.7L469.3 290.6L467.8 291.5L463.6 290.3ZM495.2 289.4L499.7 289.7L499.4 290.9L495.2 290.9ZM242.6 286.4L245.4 286.1L244.0 287.9L242.6 287.3ZM1266.6 286.4L1269.4 286.1L1268.0 287.9L1266.6 287.3ZM34.6 240.1L39.2 235.2L47.7 234.5L50.6 228.5L56.3 226.7L60.5 220.5L60.5 215.7L64.5 213.8L64.8 218.7L66.2 220.5L63.4 224.9L63.1 230.3L62.8 234.2L60.0 236.6L57.1 238.0L52.0 238.0L48.6 241.8L46.6 239.0L40.6 239.0L34.9 240.1ZM1058.6 240.1L1063.2 235.2L1071.7 234.5L1074.6 228.5L1080.3 226.7L1084.5 220.5L1084.5 215.7L1088.5 213.8L1088.8 218.7L1090.2 220.5L1087.4 224.9L1087.1 230.3L1086.8 234.2L1084.0 236.6L1081.1 238.0L1076.0 238.0L1072.6 241.8L1070.6 239.0L1064.6 239.0L1058.9 240.1ZM31.2 242.4L32.6 249.2L35.8 248.8L37.2 243.1L34.6 240.4ZM1055.2 242.4L1056.6 249.2L1059.8 248.8L1061.2 243.1L1058.6 240.4ZM39.2 243.5L45.4 240.7L44.0 239.0L40.0 240.7ZM1063.2 243.5L1069.4 240.7L1068.0 239.0L1064.0 240.7ZM60.5 213.0L60.0 208.8L65.1 197.7L70.5 202.6L75.9 206.1L69.9 211.1L63.4 210.0ZM1084.5 213.0L1084.0 208.8L1089.1 197.7L1094.5 202.6L1099.9 206.1L1093.9 211.1L1087.4 210.0ZM66.2 195.3L70.5 192.0L69.1 181.4L73.3 182.7L69.6 170.2L68.5 158.3L66.2 162.2L65.4 169.2L66.8 178.3L65.9 187.0ZM1090.2 195.3L1094.5 192.0L1093.1 181.4L1097.3 182.7L1093.6 170.2L1092.5 158.3L1090.2 162.2L1089.4 169.2L1090.8 178.3L1089.9 187.0ZM4.2 277.0L6.5 279.1L9.0 269.8L7.9 268.6L3.9 274.2ZM1028.2 277.0L1030.5 279.1L1033.0 269.8L1031.9 268.6L1027.9 274.2ZM995.2 287.3L1000.6 284.6L1002.0 286.1L998.3 290.3ZM3.6 296.9L5.3 289.4L9.9 289.4L10.2 293.9L7.9 298.4L15.0 304.2L13.6 306.6L5.3 303.4ZM1027.6 296.9L1029.3 289.4L1033.9 289.4L1034.2 293.9L1031.9 298.4L1039.0 304.2L1037.6 306.6L1029.3 303.4ZM9.3 323.0L13.6 318.7L19.0 315.0L22.4 322.2L19.3 327.0L15.0 324.5ZM1033.3 323.0L1037.6 318.7L1043.0 315.0L1046.4 322.2L1043.3 327.0L1039.0 324.5ZM9.3 311.5L16.4 307.7L19.8 311.5L12.2 315.9ZM1033.3 311.5L1040.4 307.7L1043.8 311.5L1036.2 315.9ZM913.6 325.3L914.1 315.0L919.3 321.6L918.4 325.0L915.6 326.2ZM-27.9 339.6L-25.7 345.3L-24.2 351.3L-20.0 352.1L-12.0 353.8L-7.2 354.1L-5.8 346.7L-3.2 342.1L0.5 340.2L-2.6 331.6L1.6 328.2L-4.0 323.3L-7.7 325.9L-10.0 329.0L-14.9 332.2L-20.5 335.9L-25.9 337.3ZM996.1 339.6L998.3 345.3L999.8 351.3L1004.0 352.1L1012.0 353.8L1016.8 354.1L1018.2 346.7L1020.8 342.1L1024.5 340.2L1021.4 331.6L1025.6 328.2L1020.0 323.3L1016.3 325.9L1014.0 329.0L1009.1 332.2L1003.5 335.9L998.1 337.3ZM957.4 327.0L963.6 328.2L971.6 335.9L980.7 345.8L983.5 349.5L987.8 352.4L987.2 359.5L983.5 359.8L977.3 354.4L972.2 345.8L967.0 338.2L960.8 332.2ZM985.5 362.4L989.2 360.1L994.4 361.0L1000.6 362.7L1006.6 362.7L1012.0 365.3L1011.7 367.8L1002.0 366.4L993.5 365.3L986.4 363.0ZM-10.6 366.7L0.8 366.4L12.2 366.7L9.3 368.1L-4.9 368.7L-10.6 368.1ZM1013.4 366.7L1024.8 366.4L1036.2 366.7L1033.3 368.1L1019.1 368.7L1013.4 368.1ZM15.0 369.3L24.4 367.0L17.9 371.6L13.6 372.5ZM1039.0 369.3L1048.4 367.0L1041.9 371.6L1037.6 372.5ZM1.9 358.7L5.1 359.0L4.5 351.0L7.3 348.4L13.0 355.8L11.6 345.3L7.9 341.6L17.6 338.7L5.9 339.3L2.2 344.4L0.2 351.5ZM1025.9 358.7L1029.1 359.0L1028.5 351.0L1031.3 348.4L1037.0 355.8L1035.6 345.3L1031.9 341.6L1041.6 338.7L1029.9 339.3L1026.2 344.4L1024.2 351.5ZM25.0 337.9L27.8 344.4L25.0 345.3L26.1 340.2ZM1049.0 337.9L1051.8 344.4L1049.0 345.3L1050.1 340.2ZM20.7 351.5L27.0 352.1L23.5 354.1ZM1044.7 351.5L1051.0 352.1L1047.5 354.1ZM26.4 351.0L34.4 351.5L32.1 353.2L27.2 353.2ZM1050.4 351.0L1058.4 351.5L1056.1 353.2L1051.2 353.2ZM34.9 346.4L34.6 344.4L39.2 344.1L43.5 345.6L47.7 352.4L54.5 347.3L63.4 350.4L77.0 356.7L81.9 360.7L79.0 364.4L83.3 367.3L89.5 372.5L81.9 371.9L71.9 365.0L69.1 369.3L63.4 369.0L54.8 366.7L54.0 358.7L46.3 355.2L40.6 354.4L37.8 351.0ZM1058.9 346.4L1058.6 344.4L1063.2 344.1L1067.5 345.6L1071.7 352.4L1078.5 347.3L1087.4 350.4L1101.0 356.7L1105.9 360.7L1103.0 364.4L1107.3 367.3L1113.5 372.5L1105.9 371.9L1095.9 365.0L1093.1 369.3L1087.4 369.0L1078.8 366.7L1078.0 358.7L1070.3 355.2L1064.6 354.4L1061.8 351.0ZM89.0 358.7L94.7 355.0L95.2 358.7L90.4 361.0ZM1113.0 358.7L1118.7 355.0L1119.2 358.7L1114.4 361.0ZM837.9 55.1L832.8 38.0L834.2 23.2L842.7 9.2L857.0 -2.4L874.0 -13.5L885.4 -17.4L879.7 -8.5L862.7 3.5L849.9 14.7L844.2 25.3L844.2 42.7L847.0 51.6L841.3 56.0ZM52.0 12.6L66.2 18.0L89.0 12.6L77.6 -1.2L54.8 1.2ZM1076.0 12.6L1090.2 18.0L1113.0 12.6L1101.6 -1.2L1078.8 1.2ZM177.1 47.2L182.8 51.6L170.0 51.6L174.3 53.4ZM1201.1 47.2L1206.8 51.6L1194.0 51.6L1198.3 53.4ZM714.7 -54.0L729.0 -11.0L748.9 -17.4L765.9 -54.0L743.2 -71.3ZM967.9 -24.1L985.0 -38.4L956.5 -71.3L942.3 -46.1ZM153.5 447.3L159.5 455.7L162.9 458.6L170.0 458.9L168.3 464.4L165.2 465.5L160.1 473.3L158.9 471.8L156.7 464.7L158.9 458.2ZM1177.5 447.3L1183.5 455.7L1186.9 458.6L1194.0 458.9L1192.3 464.4L1189.2 465.5L1184.1 473.3L1182.9 471.8L1180.7 464.7L1182.9 458.2ZM153.5 469.2L158.1 472.6L155.2 478.7L149.3 484.6L144.4 493.2L135.9 490.7L137.3 486.6L141.6 482.7L148.7 476.8ZM1177.5 469.2L1182.1 472.6L1179.2 478.7L1173.3 484.6L1168.4 493.2L1159.9 490.7L1161.3 486.6L1165.6 482.7L1172.7 476.8Z"/><path fill="#b2e5cb"  d="M467.3 348.7L473.0 337.3L487.2 331.6L504.3 331.6L515.6 334.5L529.9 337.3L541.2 343.0L544.1 348.7L529.9 357.2L515.6 368.7L501.4 377.4L487.2 380.3L473.0 371.6L467.3 360.1ZM711.9 331.6L729.0 328.8L748.9 328.8L765.9 331.6L771.6 340.2L768.8 354.4L757.4 363.0L737.5 360.1L720.4 354.4L711.9 345.8ZM-252.4 116.6L-195.5 104.1L-138.6 110.5L-81.7 116.6L-24.8 128.4L32.1 139.4L60.5 154.9L32.1 178.3L-24.8 169.2L-81.7 154.9L-138.6 144.7L-195.5 144.7L-238.1 139.4ZM771.6 116.6L828.5 104.1L885.4 110.5L942.3 116.6L999.2 128.4L1056.1 139.4L1084.5 154.9L1056.1 178.3L999.2 169.2L942.3 154.9L885.4 144.7L828.5 144.7L785.9 139.4ZM316.5 128.4L373.4 139.4L416.1 154.9L458.7 178.3L487.2 187.0L515.6 169.2L501.4 154.9L458.7 154.9L416.1 128.4L359.2 116.6L302.3 110.5ZM956.5 284.9L970.7 278.8L987.8 278.8L993.5 296.9L987.8 308.6L970.7 320.2L965.1 302.8L956.5 293.9ZM970.7 337.3L982.1 348.7L987.8 357.2L976.4 354.4L965.1 340.2ZM-24.8 340.2L-13.4 348.7L-4.9 340.2L-7.7 331.6L-16.3 334.5ZM999.2 340.2L1010.6 348.7L1019.1 340.2L1016.3 331.6L1007.7 334.5ZM54.8 351.5L74.7 357.2L80.4 363.0L66.2 363.0L54.8 357.2ZM1078.8 351.5L1098.7 357.2L1104.4 363.0L1090.2 363.0L1078.8 357.2Z"/><path fill="#f5f1e8"  d="M639.9 287.9L637.9 281.9L643.6 272.6L645.1 266.4L649.3 260.6L657.9 255.8L658.7 248.5L669.2 243.5L680.6 240.1L686.3 236.6L694.8 233.8L704.8 233.1L713.3 236.6L714.7 239.4L717.6 242.4L723.3 243.8L729.5 245.8L738.9 251.8L743.2 250.5L743.2 246.5L748.9 243.8L757.4 247.8L768.8 250.5L771.6 248.8L778.2 249.2L778.7 253.5L781.6 261.6L787.3 272.6L792.1 281.9L795.8 290.9L788.7 299.8L780.2 302.8L765.9 305.7L754.6 304.2L737.5 305.7L726.1 302.8L709.1 302.8L694.8 302.8L674.9 301.3L655.0 299.8L639.4 295.4ZM-244.7 253.8L-240.1 260.0L-238.4 255.1L-238.1 260.0L-233.9 266.4L-229.6 272.6L-226.8 280.4L-221.1 287.9L-216.2 298.4L-214.5 306.6L-209.7 306.3L-198.3 301.3L-189.2 298.1L-179.8 291.5L-173.6 287.9L-171.3 283.4L-167.6 277.3L-171.0 273.9L-177.6 269.8L-177.8 265.7L-184.1 272.0L-191.2 271.7L-191.2 266.7L-195.5 264.8L-199.7 260.0L-201.2 255.1L-199.7 252.8L-194.6 253.5L-191.8 260.3L-182.7 264.5L-176.1 262.9L-172.7 267.9L-162.5 268.9L-155.7 268.6L-147.1 270.1L-142.0 273.6L-135.7 272.6L-130.1 263.2L-124.4 253.5L-115.8 243.5L-110.1 250.2L-95.9 255.1L-81.7 258.4L-67.5 255.1L-58.9 250.2L-47.6 240.1L-39.0 229.6L-24.8 218.7L-2.1 199.4L3.6 187.0L-10.6 178.3L-39.0 178.3L-67.5 178.3L-87.4 182.7L-104.5 191.2L-121.5 184.8L-138.6 178.3L-161.3 176.1L-181.3 178.3L-192.6 189.1L-198.3 195.3L-202.6 203.3L-195.5 214.9L-198.3 226.0L-206.9 227.8L-218.2 229.6L-229.6 231.3L-233.9 236.6L-236.7 243.5ZM779.3 253.8L783.9 260.0L785.6 255.1L785.9 260.0L790.1 266.4L794.4 272.6L797.2 280.4L802.9 287.9L807.8 298.4L809.5 306.6L814.3 306.3L825.7 301.3L834.8 298.1L844.2 291.5L850.4 287.9L852.7 283.4L856.4 277.3L853.0 273.9L846.4 269.8L846.2 265.7L839.9 272.0L832.8 271.7L832.8 266.7L828.5 264.8L824.3 260.0L822.8 255.1L824.3 252.8L829.4 253.5L832.2 260.3L841.3 264.5L847.9 262.9L851.3 267.9L861.5 268.9L868.3 268.6L876.9 270.1L882.0 273.6L888.3 272.6L893.9 263.2L899.6 253.5L908.2 243.5L913.9 250.2L928.1 255.1L942.3 258.4L956.5 255.1L965.1 250.2L976.4 240.1L985.0 229.6L999.2 218.7L1021.9 199.4L1027.6 187.0L1013.4 178.3L985.0 178.3L956.5 178.3L936.6 182.7L919.5 191.2L902.5 184.8L885.4 178.3L862.7 176.1L842.7 178.3L831.4 189.1L825.7 195.3L821.4 203.3L828.5 214.9L825.7 226.0L817.1 227.8L805.8 229.6L794.4 231.3L790.1 236.6L787.3 243.5ZM-14.0 410.3L-12.9 406.6L-6.3 403.2L6.5 399.6L10.2 392.1L13.6 390.3L17.9 384.7L23.0 382.9L30.7 386.2L32.6 380.3L34.9 378.5L39.2 377.4L49.1 378.3L50.6 380.3L48.3 386.2L54.8 391.5L60.5 394.5L64.8 387.6L66.2 380.3L69.1 384.7L73.3 395.1L77.6 407.2L83.3 419.6L84.7 432.5L80.4 445.9L74.7 454.7L66.2 458.2L59.7 456.1L56.3 451.5L54.3 442.5L48.6 448.7L44.0 441.9L34.9 437.5L20.7 440.2L13.6 445.6L2.2 446.6L-4.9 445.9L-9.2 440.8L-10.6 429.3L-14.9 421.2ZM1010.0 410.3L1011.1 406.6L1017.7 403.2L1030.5 399.6L1034.2 392.1L1037.6 390.3L1041.9 384.7L1047.0 382.9L1054.7 386.2L1056.6 380.3L1058.9 378.5L1063.2 377.4L1073.1 378.3L1074.6 380.3L1072.3 386.2L1078.8 391.5L1084.5 394.5L1088.8 387.6L1090.2 380.3L1093.1 384.7L1097.3 395.1L1101.6 407.2L1107.3 419.6L1108.7 432.5L1104.4 445.9L1098.7 454.7L1090.2 458.2L1083.7 456.1L1080.3 451.5L1078.3 442.5L1072.6 448.7L1068.0 441.9L1058.9 437.5L1044.7 440.2L1037.6 445.6L1026.2 446.6L1019.1 445.9L1014.8 440.8L1013.4 429.3L1009.1 421.2ZM495.7 410.3L504.3 419.6L507.1 435.8L509.9 449.4L523.0 453.9L522.7 460.0L509.1 462.9L507.7 471.1L504.3 476.8L500.0 486.6L494.3 492.8L498.6 499.0L492.9 507.7L490.0 514.9L491.5 519.1L487.2 516.8L482.9 507.7L482.9 482.7L484.3 460.0L487.2 442.5L490.0 426.0L486.3 396.6L490.0 389.1L498.6 398.1ZM719.9 393.0L727.5 410.3L729.5 421.9L733.2 428.0L738.1 440.8L738.9 446.6L743.2 448.7L748.9 446.6L754.6 439.2L760.3 429.3L763.1 416.5L760.3 401.1L748.9 393.6L731.8 392.1ZM804.3 303.4L809.5 309.2L812.9 313.3L820.0 310.9L831.9 309.2L831.4 313.0L828.5 321.6L822.8 330.2L815.7 337.3L805.8 334.5L800.1 325.9L794.4 314.4L799.2 298.4ZM486.3 396.6L481.5 392.1L470.1 383.2L467.0 377.4L461.6 365.8L455.0 357.2L458.7 360.1L464.4 368.7L473.0 380.3L484.3 392.1Z"/><path fill="#e9efe2"  d="M345.0 203.3L356.3 195.3L370.6 199.4L387.6 211.1L401.9 218.7L407.5 236.6L407.5 253.5L409.3 266.4L408.4 272.6L404.7 281.9L393.3 283.4L386.8 283.1L386.5 278.8L383.7 275.1L379.1 269.5L374.8 266.4L370.6 260.3L366.3 255.1L360.0 248.2L360.6 253.5L364.9 260.0L370.6 269.5L372.6 272.6L373.7 276.1L369.1 271.1L367.2 266.4L361.5 260.0L357.2 251.8L353.2 245.2L349.2 240.1L346.4 236.6L345.0 226.0L342.1 214.9Z"/><path fill="#c8e6d5"  d="M219.0 78.3L211.8 73.4L222.7 62.6L234.0 53.4L240.3 48.1L253.9 52.5L263.9 57.7L276.7 59.3L285.2 63.5L273.9 73.8L245.4 76.1L225.5 76.1ZM1243.0 78.3L1235.8 73.4L1246.7 62.6L1258.0 53.4L1264.3 48.1L1277.9 52.5L1287.9 57.7L1300.7 59.3L1309.2 63.5L1297.9 73.8L1269.4 76.1L1249.5 76.1Z"/><path fill="#d3d5d0"  d="M345.0 72.2L373.4 76.1L396.2 77.6L407.5 76.1L413.2 72.2L417.5 44.5L421.8 47.2L424.6 60.2L430.3 68.3L436.0 72.2L444.5 62.6L453.1 65.1L454.5 76.1L447.4 85.7L441.7 87.1L438.8 100.8L430.3 105.4L423.2 113.6L418.9 122.6L413.2 125.5L401.9 113.6L387.6 100.8L367.7 94.1L350.7 83.5ZM464.4 125.5L465.9 113.6L475.8 115.4L481.5 119.6L488.6 122.6L488.6 134.0L494.3 137.8L500.0 131.2L503.1 126.7L498.6 139.4L487.2 142.1L473.0 136.7ZM948.0 1.2L970.7 -4.8L983.5 -20.1L993.5 -7.2L1004.9 1.2L1009.1 28.3L985.0 33.2L956.5 23.2L936.6 18.0ZM140.2 64.3L160.1 66.7L180.0 73.8L191.4 81.3L168.6 86.4L145.9 83.5ZM1164.2 64.3L1184.1 66.7L1204.0 73.8L1215.4 81.3L1192.6 86.4L1169.9 83.5ZM397.6 44.5L407.5 44.5L411.8 38.0L410.4 25.3L404.7 23.2L397.6 33.2ZM416.1 39.9L421.8 42.7L428.9 33.2L424.6 23.2L416.1 25.3ZM424.6 16.9L441.7 18.0L457.3 16.9L454.5 3.5L436.0 -3.6L424.6 1.2L418.9 7.0ZM356.3 14.7L373.4 15.8L386.2 9.2L381.9 1.2L364.9 -1.2L352.1 -1.2L351.2 10.3ZM390.5 12.6L407.5 16.9L413.2 10.3L406.1 0.0L393.3 1.2ZM430.3 -4.8L458.7 -2.4L473.0 -24.1L487.2 -38.4L501.4 -71.3L458.7 -112.4L416.1 -71.3L410.4 -17.4ZM328.5 43.6L333.6 49.9L340.7 49.0L345.0 42.7L347.0 30.3L352.1 21.1L342.1 18.0L332.2 20.1L333.6 28.3L329.3 38.0ZM352.1 68.3L362.0 69.9L373.4 71.4L387.6 68.3L397.6 63.5L399.0 51.6L393.3 38.0L384.8 31.3L373.4 35.2L363.5 33.2L359.2 40.8L349.2 39.9L347.2 49.9L351.2 56.0L367.7 57.7L353.5 64.3ZM500.0 117.2L498.6 107.3L509.9 85.7L504.3 79.8L495.7 64.3L484.3 54.2L473.0 39.9L458.7 26.3L444.5 30.3L436.0 28.3L441.7 56.0L447.4 61.8L463.0 60.2L475.8 78.3L478.7 90.6L464.4 97.5L467.3 102.8L481.5 110.5L492.9 114.8ZM837.9 55.1L832.8 38.0L834.2 23.2L842.7 9.2L857.0 -2.4L874.0 -13.5L885.4 -17.4L879.7 -8.5L862.7 3.5L849.9 14.7L844.2 25.3L844.2 42.7L847.0 51.6L841.3 56.0ZM52.0 12.6L66.2 18.0L89.0 12.6L77.6 -1.2L54.8 1.2ZM1076.0 12.6L1090.2 18.0L1113.0 12.6L1101.6 -1.2L1078.8 1.2ZM714.7 -54.0L729.0 -11.0L748.9 -17.4L765.9 -54.0L743.2 -71.3Z"/><path fill="#ffffff" stroke="#dcdedb" stroke-width="2" d="M562.6 129.5L555.5 123.8L548.3 119.6L542.7 107.3L537.0 94.1L534.1 84.2L535.5 72.2L531.3 56.0L531.3 47.2L527.0 33.2L519.9 7.0L498.6 -1.2L487.2 -11.0L481.5 -31.1L515.6 -90.6L601.0 -124.5L635.1 -80.6L633.7 -4.8L630.8 18.0L623.7 38.0L622.3 56.0L612.3 69.9L595.3 73.8L579.6 92.7L571.1 100.8L566.8 119.6Z"/><path fill="#ffffff"  d="M-849.7 823.6L-849.7 697.0L-792.8 703.4L-764.4 690.8L-735.9 673.4L-707.5 664.9L-679.0 657.7L-636.4 648.0L-607.9 648.0L-579.5 652.8L-551.0 643.3L-536.8 625.8L-534.0 609.9L-525.4 595.4L-515.5 585.2L-501.3 576.8L-504.1 585.2L-508.4 598.9L-511.2 613.8L-512.6 634.4L-508.4 652.8L-479.9 710.1L-437.3 703.4L-408.8 662.8L-380.4 638.8L-351.9 632.6L-323.5 627.5L-295.0 625.8L-266.6 628.3L-243.8 621.7L-223.9 613.8L-209.7 608.4L-189.8 598.9L-175.6 604.7L-158.5 606.2L-138.6 613.8L-132.9 625.8L-121.5 621.7L-110.1 606.2L-87.4 598.9L-67.5 597.5L-53.3 595.4L-24.8 595.4L-2.1 601.1L17.9 596.8L46.3 597.5L66.2 601.8L89.0 613.8L117.4 625.8L140.2 643.3L145.9 662.8L131.6 697.0L174.3 710.1L174.3 823.6ZM174.3 823.6L174.3 697.0L231.2 703.4L259.6 690.8L288.1 673.4L316.5 664.9L345.0 657.7L387.6 648.0L416.1 648.0L444.5 652.8L473.0 643.3L487.2 625.8L490.0 609.9L498.6 595.4L508.5 585.2L522.7 576.8L519.9 585.2L515.6 598.9L512.8 613.8L511.4 634.4L515.6 652.8L544.1 710.1L586.7 703.4L615.2 662.8L643.6 638.8L672.1 632.6L700.5 627.5L729.0 625.8L757.4 628.3L780.2 621.7L800.1 613.8L814.3 608.4L834.2 598.9L848.4 604.7L865.5 606.2L885.4 613.8L891.1 625.8L902.5 621.7L913.9 606.2L936.6 598.9L956.5 597.5L970.7 595.4L999.2 595.4L1021.9 601.1L1041.9 596.8L1070.3 597.5L1090.2 601.8L1113.0 613.8L1141.4 625.8L1164.2 643.3L1169.9 662.8L1155.6 697.0L1198.3 710.1L1198.3 823.6ZM1198.3 823.6L1198.3 697.0L1255.2 703.4L1283.6 690.8L1312.1 673.4L1340.5 664.9L1369.0 657.7L1411.6 648.0L1440.1 648.0L1468.5 652.8L1497.0 643.3L1511.2 625.8L1514.0 609.9L1522.6 595.4L1532.5 585.2L1546.7 576.8L1543.9 585.2L1539.6 598.9L1536.8 613.8L1535.4 634.4L1539.6 652.8L1568.1 710.1L1610.7 703.4L1639.2 662.8L1667.6 638.8L1696.1 632.6L1724.5 627.5L1753.0 625.8L1781.4 628.3L1804.2 621.7L1824.1 613.8L1838.3 608.4L1858.2 598.9L1872.4 604.7L1889.5 606.2L1909.4 613.8L1915.1 625.8L1926.5 621.7L1937.9 606.2L1960.6 598.9L1980.5 597.5L1994.7 595.4L2023.2 595.4L2045.9 601.1L2065.9 596.8L2094.3 597.5L2114.2 601.8L2137.0 613.8L2165.4 625.8L2188.2 643.3L2193.9 662.8L2179.6 697.0L2222.3 710.1L2222.3 823.6Z"/><path fill="#61d0e4"  d="M424.3 192.4L431.7 187.0L441.7 183.5L445.7 192.0L440.3 193.2L433.1 192.0ZM436.6 211.1L437.4 203.3L439.1 196.1L443.1 197.3L440.3 205.3L440.3 210.4ZM445.9 195.3L454.5 197.3L451.9 206.9L448.8 202.6L446.8 196.5ZM449.1 212.3L461.3 208.0L454.5 210.7ZM459.3 206.1L469.6 203.3L465.9 206.1ZM410.4 176.1L404.7 162.2L407.5 161.2L411.8 173.8ZM333.6 97.5L347.8 83.5L350.7 90.6L342.1 97.5ZM353.5 122.6L376.3 111.7L367.7 119.6ZM820.0 200.6L819.1 201.4L821.4 196.9L826.2 193.7L832.8 191.2L837.1 192.0L837.1 197.3L832.2 201.4L831.4 207.3L836.2 211.1L837.1 218.7L839.6 226.0L837.1 230.3L831.4 230.6L825.7 227.8L827.1 218.7L824.3 211.9L821.4 207.3ZM780.2 344.4L783.0 345.8L781.6 350.1L776.8 348.7L776.5 343.9ZM982.1 170.6L996.3 152.4L997.8 154.9L985.0 171.5ZM852.7 195.3L859.8 193.2L857.0 200.2Z"/><path d="M-687.6 182.7L-608.5 182.7L-608.5 180.9L-592.3 187.0L-578.1 193.2L-572.4 199.4L-573.8 211.1L-562.4 207.3L-555.3 202.6L-550.2 199.4L-541.1 199.4L-536.8 193.2L-534.5 189.5L-531.1 189.9L-530.6 196.5L-528.3 200.2M336.4 182.7L415.5 182.7L415.5 180.9L431.7 187.0L445.9 193.2L451.6 199.4L450.2 211.1L461.6 207.3L468.7 202.6L473.8 199.4L482.9 199.4L487.2 193.2L489.5 189.5L492.9 189.9L493.4 196.5L495.7 200.2M1360.4 182.7L1439.5 182.7L1439.5 180.9L1455.7 187.0L1469.9 193.2L1475.6 199.4L1474.2 211.1L1485.6 207.3L1492.7 202.6L1497.8 199.4L1506.9 199.4L1511.2 193.2L1513.5 189.5L1516.9 189.9L1517.4 196.5L1519.7 200.2M-738.8 63.5L-738.8 126.7L-727.4 134.0L-721.7 130.1L-716.0 144.7L-707.5 152.4M285.2 63.5L285.2 126.7L296.6 134.0L302.3 130.1L308.0 144.7L316.5 152.4M1309.2 63.5L1309.2 126.7L1320.6 134.0L1326.3 130.1L1332.0 144.7L1340.5 152.4M-670.8 245.2L-664.0 244.5L-653.4 249.2L-645.5 249.2L-640.6 247.5L-634.9 255.1L-630.7 256.7L-626.4 254.1L-620.7 261.6L-614.2 266.7M353.2 245.2L360.0 244.5L370.6 249.2L378.5 249.2L383.4 247.5L389.1 255.1L393.3 256.7L397.6 254.1L403.3 261.6L409.8 266.7M1377.2 245.2L1384.0 244.5L1394.6 249.2L1402.5 249.2L1407.4 247.5L1413.1 255.1L1417.3 256.7L1421.6 254.1L1427.3 261.6L1433.8 266.7M-600.0 301.3L-599.4 291.5L-596.5 291.5L-591.4 291.5L-591.4 297.2M424.0 301.3L424.6 291.5L427.5 291.5L432.6 291.5L432.6 297.2M1448.0 301.3L1448.6 291.5L1451.5 291.5L1456.6 291.5L1456.6 297.2M-508.4 328.2L-519.7 331.6L-528.3 338.7L-535.4 340.2L-535.4 354.4L-545.3 364.4L-543.9 371.6L-535.4 374.5L-524.0 371.6L-508.4 381.8L-502.7 389.1L-502.7 401.1L-494.1 407.2L-492.7 418.1L-489.9 422.8L-499.8 432.5L-488.5 444.9M515.6 328.2L504.3 331.6L495.7 338.7L488.6 340.2L488.6 354.4L478.7 364.4L480.1 371.6L488.6 374.5L500.0 371.6L515.6 381.8L521.3 389.1L521.3 401.1L529.9 407.2L531.3 418.1L534.1 422.8L524.2 432.5L535.5 444.9M1539.6 328.2L1528.3 331.6L1519.7 338.7L1512.6 340.2L1512.6 354.4L1502.7 364.4L1504.1 371.6L1512.6 374.5L1524.0 371.6L1539.6 381.8L1545.3 389.1L1545.3 401.1L1553.9 407.2L1555.3 418.1L1558.1 422.8L1548.2 432.5L1559.5 444.9M-532.5 407.2L-532.5 422.8L-536.8 432.5L-536.8 449.4L-539.7 467.3L-541.1 486.6L-543.9 503.3L-542.5 516.8M491.5 407.2L491.5 422.8L487.2 432.5L487.2 449.4L484.3 467.3L482.9 486.6L480.1 503.3L481.5 516.8M1515.5 407.2L1515.5 422.8L1511.2 432.5L1511.2 449.4L1508.3 467.3L1506.9 486.6L1504.1 503.3L1505.5 516.8M-528.3 408.7L-515.5 407.2L-502.7 401.1M495.7 408.7L508.5 407.2L521.3 401.1M1519.7 408.7L1532.5 407.2L1545.3 401.1M-535.4 374.5L-534.0 386.2L-535.4 393.6L-531.1 408.7M488.6 374.5L490.0 386.2L488.6 393.6L492.9 408.7M1512.6 374.5L1514.0 386.2L1512.6 393.6L1516.9 408.7M-561.8 337.9L-551.0 344.4L-545.3 350.1L-536.8 354.4M462.2 337.9L473.0 344.4L478.7 350.1L487.2 354.4M1486.2 337.9L1497.0 344.4L1502.7 350.1L1511.2 354.4M-566.7 353.0L-559.6 352.1L-551.0 344.4M457.3 353.0L464.4 352.1L473.0 344.4M1481.3 353.0L1488.4 352.1L1497.0 344.4M-542.5 308.6L-543.9 323.0L-529.7 325.3L-528.3 338.7M481.5 308.6L480.1 323.0L494.3 325.3L495.7 338.7M1505.5 308.6L1504.1 323.0L1518.3 325.3L1519.7 338.7M-362.4 260.9L-351.4 269.5L-325.8 287.6L-303.6 274.2L-295.0 275.7L-269.4 286.4L-269.4 284.9L-266.6 278.8L-232.5 278.8M661.6 260.9L672.6 269.5L698.2 287.6L720.4 274.2L729.0 275.7L754.6 286.4L754.6 284.9L757.4 278.8L791.5 278.8M1685.6 260.9L1696.6 269.5L1722.2 287.6L1744.4 274.2L1753.0 275.7L1778.6 286.4L1778.6 284.9L1781.4 278.8L1815.5 278.8M-266.6 248.2L-266.6 278.8M757.4 248.2L757.4 278.8M1781.4 248.2L1781.4 278.8M-371.8 300.7L-370.4 298.4L-353.3 298.4L-351.9 295.4L-354.8 269.8L-351.4 269.5M652.2 300.7L653.6 298.4L670.7 298.4L672.1 295.4L669.2 269.8L672.6 269.5M1676.2 300.7L1677.6 298.4L1694.7 298.4L1696.1 295.4L1693.2 269.8L1696.6 269.5M-327.5 309.5L-317.8 305.7L-303.6 305.7L-297.9 305.1M696.5 309.5L706.2 305.7L720.4 305.7L726.1 305.1M1720.5 309.5L1730.2 305.7L1744.4 305.7L1750.1 305.1M-273.7 314.4L-270.9 298.4L-269.4 286.4M750.3 314.4L753.1 298.4L754.6 286.4M1774.3 314.4L1777.1 298.4L1778.6 286.4M-303.0 360.1L-292.2 364.4L-275.1 374.5L-269.4 374.5L-256.6 367.3L-253.8 355.8L-252.4 340.2L-248.1 335.9L-259.5 328.8L-266.6 328.8L-283.7 330.2L-285.1 333.0L-292.2 337.3L-296.5 344.4L-300.7 357.2M721.0 360.1L731.8 364.4L748.9 374.5L754.6 374.5L767.4 367.3L770.2 355.8L771.6 340.2L775.9 335.9L764.5 328.8L757.4 328.8L740.3 330.2L738.9 333.0L731.8 337.3L727.5 344.4L723.3 357.2M1745.0 360.1L1755.8 364.4L1772.9 374.5L1778.6 374.5L1791.4 367.3L1794.2 355.8L1795.6 340.2L1799.9 335.9L1788.5 328.8L1781.4 328.8L1764.3 330.2L1762.9 333.0L1755.8 337.3L1751.5 344.4L1747.3 357.2M-304.1 393.0L-280.8 393.6L-270.9 394.5M719.9 393.0L743.2 393.6L753.1 394.5M1743.9 393.0L1767.2 393.6L1777.1 394.5M-280.8 407.2L-280.8 415.5M743.2 407.2L743.2 415.5M1767.2 407.2L1767.2 415.5M-290.8 428.0L-280.8 415.5L-266.6 418.1L-255.2 407.8L-246.7 408.7L-244.4 419.6M733.2 428.0L743.2 415.5L757.4 418.1L768.8 407.8L777.3 408.7L779.6 419.6M1757.2 428.0L1767.2 415.5L1781.4 418.1L1792.8 407.8L1801.3 408.7L1803.6 419.6M-241.0 345.8L-225.9 356.4M783.0 345.8L798.1 356.4M1807.0 345.8L1822.1 356.4M-241.0 330.2L-229.6 333.0L-218.5 331.6M783.0 330.2L794.4 333.0L805.5 331.6M1807.0 330.2L1818.4 333.0L1829.5 331.6M-218.5 331.6L-209.7 328.8L-204.0 320.2L-201.2 320.2L-215.4 311.5M805.5 331.6L814.3 328.8L820.0 320.2L822.8 320.2L808.6 311.5M1829.5 331.6L1838.3 328.8L1844.0 320.2L1846.8 320.2L1832.6 311.5M-241.0 320.2L-238.1 311.5L-233.9 301.9L-228.2 301.3L-222.5 301.3M783.0 320.2L785.9 311.5L790.1 301.9L795.8 301.3L801.5 301.3M1807.0 320.2L1809.9 311.5L1814.1 301.9L1819.8 301.3L1825.5 301.3M-342.8 205.7L-328.6 209.6M681.2 205.7L695.4 209.6M1705.2 205.7L1719.4 209.6M-320.6 180.5L-314.4 182.7L-316.4 188.7L-320.3 194.1L-316.4 204.1M703.4 180.5L709.6 182.7L707.6 188.7L703.7 194.1L707.6 204.1M1727.4 180.5L1733.6 182.7L1731.6 188.7L1727.7 194.1L1731.6 204.1M-297.3 160.3L-296.2 173.8L-295.0 174.3M726.7 160.3L727.8 173.8L729.0 174.3M1750.7 160.3L1751.8 173.8L1753.0 174.3M-270.9 159.8L-270.9 169.2L-269.4 174.7L-273.7 182.2M753.1 159.8L753.1 169.2L754.6 174.7L750.3 182.2M1777.1 159.8L1777.1 169.2L1778.6 174.7L1774.3 182.2M-223.9 180.0L-235.3 176.1L-242.4 167.4L-247.2 168.8M800.1 180.0L788.7 176.1L781.6 167.4L776.8 168.8M1824.1 180.0L1812.7 176.1L1805.6 167.4L1800.8 168.8M-202.6 197.3L-192.6 174.7L-181.3 173.8L-164.2 175.2L-164.2 159.8L-141.4 153.4L-120.1 159.8L-113.0 173.8L-98.8 174.7L-89.4 181.8M821.4 197.3L831.4 174.7L842.7 173.8L859.8 175.2L859.8 159.8L882.6 153.4L903.9 159.8L911.0 173.8L925.2 174.7L934.6 181.8M1845.4 197.3L1855.4 174.7L1866.7 173.8L1883.8 175.2L1883.8 159.8L1906.6 153.4L1927.9 159.8L1935.0 173.8L1949.2 174.7L1958.6 181.8M-189.8 211.1L-178.4 199.4L-172.7 197.3L-164.2 202.6L-152.8 204.9L-144.3 214.9L-135.7 208.0L-124.4 208.0L-110.1 207.7L-103.0 197.3L-89.4 181.8M834.2 211.1L845.6 199.4L851.3 197.3L859.8 202.6L871.2 204.9L879.7 214.9L888.3 208.0L899.6 208.0L913.9 207.7L921.0 197.3L934.6 181.8M1858.2 211.1L1869.6 199.4L1875.3 197.3L1883.8 202.6L1895.2 204.9L1903.7 214.9L1912.3 208.0L1923.6 208.0L1937.9 207.7L1945.0 197.3L1958.6 181.8M-89.4 181.8L-76.0 174.7L-58.9 169.2L-44.7 177.0L-30.5 180.5L-13.4 177.4L-4.9 179.2L3.6 193.2M934.6 181.8L948.0 174.7L965.1 169.2L979.3 177.0L993.5 180.5L1010.6 177.4L1019.1 179.2L1027.6 193.2M1958.6 181.8L1972.0 174.7L1989.1 169.2L2003.3 177.0L2017.5 180.5L2034.6 177.4L2043.1 179.2L2051.6 193.2M-89.4 181.8L-78.9 199.4L-61.8 208.4L-39.0 213.0L-22.0 206.1L-10.6 197.3L3.3 192.4M934.6 181.8L945.1 199.4L962.2 208.4L985.0 213.0L1002.0 206.1L1013.4 197.3L1027.3 192.4M1958.6 181.8L1969.1 199.4L1986.2 208.4L2009.0 213.0L2026.0 206.1L2037.4 197.3L2051.3 192.4M3.6 163.1L20.7 164.6L32.1 182.7L46.3 185.3L34.9 199.4L33.5 210.0M1027.6 163.1L1044.7 164.6L1056.1 182.7L1070.3 185.3L1058.9 199.4L1057.5 210.0M2051.6 163.1L2068.7 164.6L2080.1 182.7L2094.3 185.3L2082.9 199.4L2081.5 210.0M-127.2 229.6L-115.8 234.9L-110.1 245.2L-105.9 252.8L-95.9 259.0L-87.4 261.6L-76.0 260.6L-61.8 259.3L-58.9 269.5L-60.4 274.2L-50.4 280.4L-41.9 276.4L-30.5 280.1M896.8 229.6L908.2 234.9L913.9 245.2L918.1 252.8L928.1 259.0L936.6 261.6L948.0 260.6L962.2 259.3L965.1 269.5L963.6 274.2L973.6 280.4L982.1 276.4L993.5 280.1M1920.8 229.6L1932.2 234.9L1937.9 245.2L1942.1 252.8L1952.1 259.0L1960.6 261.6L1972.0 260.6L1986.2 259.3L1989.1 269.5L1987.6 274.2L1997.6 280.4L2006.1 276.4L2017.5 280.1M-142.9 273.3L-135.7 271.1L-138.6 260.6L-125.8 248.5L-124.4 243.5L-118.7 234.9M881.1 273.3L888.3 271.1L885.4 260.6L898.2 248.5L899.6 243.5L905.3 234.9M1905.1 273.3L1912.3 271.1L1909.4 260.6L1922.2 248.5L1923.6 243.5L1929.3 234.9M-164.2 231.3L-164.2 248.5L-161.3 255.1L-148.5 253.8L-137.2 240.1L-134.3 231.3L-125.8 229.6M859.8 231.3L859.8 248.5L862.7 255.1L875.5 253.8L886.8 240.1L889.7 231.3L898.2 229.6M1883.8 231.3L1883.8 248.5L1886.7 255.1L1899.5 253.8L1910.8 240.1L1913.7 231.3L1922.2 229.6M-211.1 227.8L-208.3 236.6L-202.6 243.5L-199.7 252.8M812.9 227.8L815.7 236.6L821.4 243.5L824.3 252.8M1836.9 227.8L1839.7 236.6L1845.4 243.5L1848.3 252.8M-233.9 255.1L-226.8 246.8L-218.2 249.5L-205.4 256.7L-201.2 256.7M790.1 255.1L797.2 246.8L805.8 249.5L818.6 256.7L822.8 256.7M1814.1 255.1L1821.2 246.8L1829.8 249.5L1842.6 256.7L1846.8 256.7M-215.4 293.9L-204.0 293.9L-189.8 287.9L-181.3 284.9M808.6 293.9L820.0 293.9L834.2 287.9L842.7 284.9M1832.6 293.9L1844.0 293.9L1858.2 287.9L1866.7 284.9M-234.7 231.0L-229.6 230.3L-216.8 228.9L-210.3 228.9M789.3 231.0L794.4 230.3L807.2 228.9L813.7 228.9M1813.3 231.0L1818.4 230.3L1831.2 228.9L1837.7 228.9M-57.5 314.4L-56.1 305.7L-57.5 295.4L-53.3 284.0M966.5 314.4L967.9 305.7L966.5 295.4L970.7 284.0M1990.5 314.4L1991.9 305.7L1990.5 295.4L1994.7 284.0M-53.3 284.0L-50.4 290.9L-40.5 292.4L-37.6 301.3L-44.7 302.2L-46.1 308.6M970.7 284.0L973.6 290.9L983.5 292.4L986.4 301.3L979.3 302.2L977.9 308.6M1994.7 284.0L1997.6 290.9L2007.5 292.4L2010.4 301.3L2003.3 302.2L2001.9 308.6M-47.6 278.8L-41.9 286.4L-34.8 293.9L-31.9 301.3L-33.3 310.1M976.4 278.8L982.1 286.4L989.2 293.9L992.1 301.3L990.7 310.1M2000.4 278.8L2006.1 286.4L2013.2 293.9L2016.1 301.3L2014.7 310.1M-87.4 264.8L-83.1 266.4L-74.6 269.5L-76.0 277.3M936.6 264.8L940.9 266.4L949.4 269.5L948.0 277.3M1960.6 264.8L1964.9 266.4L1973.4 269.5L1972.0 277.3M-320.6 162.7L-317.8 167.9L-320.6 173.8L-319.5 177.0L-320.6 180.5M703.4 162.7L706.2 167.9L703.4 173.8L704.5 177.0L703.4 180.5M1727.4 162.7L1730.2 167.9L1727.4 173.8L1728.5 177.0L1727.4 180.5M-314.4 182.7L-316.1 188.7L-309.3 189.1L-300.7 189.1L-298.4 184.0L-303.3 177.0L-295.0 174.3M709.6 182.7L707.9 188.7L714.7 189.1L723.3 189.1L725.6 184.0L720.7 177.0L729.0 174.3M1733.6 182.7L1731.9 188.7L1738.7 189.1L1747.3 189.1L1749.6 184.0L1744.7 177.0L1753.0 174.3M-295.0 174.3L-284.2 180.5L-273.7 182.2M729.0 174.3L739.8 180.5L750.3 182.2M1753.0 174.3L1763.8 180.5L1774.3 182.2M-300.7 184.4L-295.0 182.7L-289.3 184.4L-289.3 188.2L-284.2 187.8L-273.7 185.7L-272.8 187.4L-278.0 194.5L-284.2 195.7L-290.8 193.2L-299.0 193.2L-303.0 190.8L-309.3 192.0L-310.7 189.1M723.3 184.4L729.0 182.7L734.7 184.4L734.7 188.2L739.8 187.8L750.3 185.7L751.2 187.4L746.0 194.5L739.8 195.7L733.2 193.2L725.0 193.2L721.0 190.8L714.7 192.0L713.3 189.1M1747.3 184.4L1753.0 182.7L1758.7 184.4L1758.7 188.2L1763.8 187.8L1774.3 185.7L1775.2 187.4L1770.0 194.5L1763.8 195.7L1757.2 193.2L1749.0 193.2L1745.0 190.8L1738.7 192.0L1737.3 189.1M-320.3 194.1L-317.8 195.7L-313.5 193.7L-307.8 192.8L-303.0 190.8M703.7 194.1L706.2 195.7L710.5 193.7L716.2 192.8L721.0 190.8M1727.7 194.1L1730.2 195.7L1734.5 193.7L1740.2 192.8L1745.0 190.8M-317.8 195.7L-316.4 204.1M706.2 195.7L707.6 204.1M1730.2 195.7L1731.6 204.1M-299.0 197.3L-293.6 195.7L-290.8 193.2M725.0 197.3L730.4 195.7L733.2 193.2M1749.0 197.3L1754.4 195.7L1757.2 193.2M-283.7 195.7L-283.7 199.4L-282.2 203.3L-283.1 206.1L-280.0 209.2M740.3 195.7L740.3 199.4L741.8 203.3L740.9 206.1L744.0 209.2M1764.3 195.7L1764.3 199.4L1765.8 203.3L1764.9 206.1L1768.0 209.2M-276.5 198.6L-273.1 202.6L-266.6 204.5L-258.1 204.1M747.5 198.6L750.9 202.6L757.4 204.5L765.9 204.1M1771.5 198.6L1774.9 202.6L1781.4 204.5L1789.9 204.1M-272.8 187.4L-266.9 188.2L-262.0 186.1L-257.5 192.8L-257.5 197.3M751.2 187.4L757.1 188.2L762.0 186.1L766.5 192.8L766.5 197.3M1775.2 187.4L1781.1 188.2L1786.0 186.1L1790.5 192.8L1790.5 197.3M-274.0 213.8L-263.7 213.0L-258.1 211.1M750.0 213.8L760.3 213.0L765.9 211.1M1774.0 213.8L1784.3 213.0L1789.9 211.1M-279.4 209.6L-274.0 210.0L-274.0 213.8L-279.4 214.9M744.6 209.6L750.0 210.0L750.0 213.8L744.6 214.9M1768.6 209.6L1774.0 210.0L1774.0 213.8L1768.6 214.9M-270.9 160.3L-263.7 151.4L-258.1 149.9L-249.5 152.4L-246.7 162.2L-247.2 168.8L-252.4 171.5L-263.7 169.7L-270.6 171.5M753.1 160.3L760.3 151.4L765.9 149.9L774.5 152.4L777.3 162.2L776.8 168.8L771.6 171.5L760.3 169.7L753.4 171.5M1777.1 160.3L1784.3 151.4L1789.9 149.9L1798.5 152.4L1801.3 162.2L1800.8 168.8L1795.6 171.5L1784.3 169.7L1777.4 171.5M-278.0 149.4L-262.3 150.9M746.0 149.4L761.7 150.9M1770.0 149.4L1785.7 150.9M-270.9 140.0L-260.0 142.1M753.1 140.0L764.0 142.1M1777.1 140.0L1788.0 142.1M-258.1 131.8L-259.5 142.1L-258.1 149.9M765.9 131.8L764.5 142.1L765.9 149.9M1789.9 131.8L1788.5 142.1L1789.9 149.9M-258.1 125.5L-252.4 116.6L-253.8 100.8L-252.4 79.8L-256.6 72.2L-255.8 62.6M765.9 125.5L771.6 116.6L770.2 100.8L771.6 79.8L767.4 72.2L768.2 62.6M1789.9 125.5L1795.6 116.6L1794.2 100.8L1795.6 79.8L1791.4 72.2L1792.2 62.6M-269.4 92.0L-270.9 79.8L-279.4 68.3M754.6 92.0L753.1 79.8L744.6 68.3M1778.6 92.0L1777.1 79.8L1768.6 68.3M-305.8 134.0L-302.1 122.6L-303.6 107.3L-297.9 97.5L-293.6 87.1L-286.5 72.2L-279.4 68.3L-266.6 70.7L-255.8 62.6M718.2 134.0L721.9 122.6L720.4 107.3L726.1 97.5L730.4 87.1L737.5 72.2L744.6 68.3L757.4 70.7L768.2 62.6M1742.2 134.0L1745.9 122.6L1744.4 107.3L1750.1 97.5L1754.4 87.1L1761.5 72.2L1768.6 68.3L1781.4 70.7L1792.2 62.6M-363.0 211.1L-355.3 212.7L-357.6 219.8L-358.7 228.9M661.0 211.1L668.7 212.7L666.4 219.8L665.3 228.9M1685.0 211.1L1692.7 212.7L1690.4 219.8L1689.3 228.9M-223.9 205.7L-215.4 207.7L-205.4 211.5L-199.5 211.9M800.1 205.7L808.6 207.7L818.6 211.5L824.5 211.9M1824.1 205.7L1832.6 207.7L1842.6 211.5L1848.5 211.9M-219.7 213.0L-214.3 214.5L-210.3 220.1L-211.1 227.8M804.3 213.0L809.7 214.5L813.7 220.1L812.9 227.8M1828.3 213.0L1833.7 214.5L1837.7 220.1L1836.9 227.8M-210.3 220.1L-201.2 224.2L-198.6 224.5M813.7 220.1L822.8 224.2L825.4 224.5M1837.7 220.1L1846.8 224.2L1849.4 224.5M-217.4 229.2L-221.1 238.7L-226.8 245.8M806.6 229.2L802.9 238.7L797.2 245.8M1830.6 229.2L1826.9 238.7L1821.2 245.8M-342.8 236.6L-343.4 246.8L-362.4 260.9M681.2 236.6L680.6 246.8L661.6 260.9M1705.2 236.6L1704.6 246.8L1685.6 260.9M-313.5 229.6L-314.9 243.5L-310.7 253.5L-309.3 269.5L-303.6 274.2M710.5 229.6L709.1 243.5L713.3 253.5L714.7 269.5L720.4 274.2M1734.5 229.6L1733.1 243.5L1737.3 253.5L1738.7 269.5L1744.4 274.2M-293.6 275.7L-295.0 284.9L-299.3 302.8M730.4 275.7L729.0 284.9L724.7 302.8M1754.4 275.7L1753.0 284.9L1748.7 302.8M-313.5 330.2L-303.6 320.2L-296.5 305.7M710.5 330.2L720.4 320.2L727.5 305.7M1734.5 330.2L1744.4 320.2L1751.5 305.7M-293.6 321.6L-273.7 313.0M730.4 321.6L750.3 313.0M1754.4 321.6L1774.3 313.0M-273.7 314.4L-260.9 315.9L-241.0 317.9M750.3 314.4L763.1 315.9L783.0 317.9M1774.3 314.4L1787.1 315.9L1807.0 317.9M-370.4 307.2L-353.3 313.0L-332.0 310.1L-326.3 304.2M653.6 307.2L670.7 313.0L692.0 310.1L697.7 304.2M1677.6 307.2L1694.7 313.0L1716.0 310.1L1721.7 304.2M-346.2 328.8L-346.2 311.5M677.8 328.8L677.8 311.5M1701.8 328.8L1701.8 311.5M-334.9 325.9L-336.3 311.5M689.1 325.9L687.7 311.5M1713.1 325.9L1711.7 311.5M-275.1 380.3L-255.2 380.3L-243.8 368.7M748.9 380.3L768.8 380.3L780.2 368.7M1772.9 380.3L1792.8 380.3L1804.2 368.7M-246.7 408.7L-243.8 392.1L-252.4 387.6L-238.1 375.9M777.3 408.7L780.2 392.1L771.6 387.6L785.9 375.9M1801.3 408.7L1804.2 392.1L1795.6 387.6L1809.9 375.9M-515.5 407.2L-502.7 424.4L-492.7 418.1M508.5 407.2L521.3 424.4L531.3 418.1M1532.5 407.2L1545.3 424.4L1555.3 418.1M-178.4 199.4L-171.3 209.2L-164.2 214.9M845.6 199.4L852.7 209.2L859.8 214.9M1869.6 199.4L1876.7 209.2L1883.8 214.9M-184.4 227.8L-175.6 226.0L-164.2 231.3M839.6 227.8L848.4 226.0L859.8 231.3M1863.6 227.8L1872.4 226.0L1883.8 231.3M-178.4 213.8L-164.2 214.9L-159.9 220.5L-148.5 227.8M845.6 213.8L859.8 214.9L864.1 220.5L875.5 227.8M1869.6 213.8L1883.8 214.9L1888.1 220.5L1899.5 227.8M-144.3 214.9L-138.6 218.7L-128.6 220.5L-125.8 229.6M879.7 214.9L885.4 218.7L895.4 220.5L898.2 229.6M1903.7 214.9L1909.4 218.7L1919.4 220.5L1922.2 229.6M-74.6 283.4L-71.7 272.6L-67.5 263.2L-61.8 259.3M949.4 283.4L952.3 272.6L956.5 263.2L962.2 259.3M1973.4 283.4L1976.3 272.6L1980.5 263.2L1986.2 259.3M17.3 226.0L27.2 223.8M1041.3 226.0L1051.2 223.8M2065.3 226.0L2075.2 223.8M15.9 218.7L22.1 211.9L29.2 210.4L33.8 209.6M1039.9 218.7L1046.1 211.9L1053.2 210.4L1057.8 209.6M2063.9 218.7L2070.1 211.9L2077.2 210.4L2081.8 209.6M-591.4 297.2L-588.6 297.8L-585.2 305.7L-579.5 302.8L-574.4 299.8M432.6 297.2L435.4 297.8L438.8 305.7L444.5 302.8L449.6 299.8M1456.6 297.2L1459.4 297.8L1462.8 305.7L1468.5 302.8L1473.6 299.8M-581.5 310.9L-575.8 311.5M442.5 310.9L448.2 311.5M1466.5 310.9L1472.2 311.5M-572.4 315.9L-573.5 320.2M451.6 315.9L450.5 320.2M1475.6 315.9L1474.5 320.2M-557.6 318.4L-557.6 323.0M466.4 318.4L466.4 323.0M1490.4 318.4L1490.4 323.0" fill="none" stroke="#6a6e70" stroke-width="0.8" stroke-opacity="0.75"/><path d="M173.8 0.4 L184.7 32.6 L205.3 76.0 L205.3 91.2 L173.8 123.8 L145.6 165.1 L173.8 186.8 L174.3 347.8 L231.9 347.8 L231.9 337.6 L221.7 337.6 L221.7 326.8 L241.0 326.8 L262.4 376.6M249.0 366.4 L203.1 366.4 L198.0 374.9 L195.7 388.5 L195.7 483.3 L174.3 512.1 L174.3 610.0M1197.8 0.4 L1208.7 32.6 L1229.3 76.0 L1229.3 91.2 L1197.8 123.8 L1169.6 165.1 L1197.8 186.8 L1198.3 347.8 L1255.9 347.8 L1255.9 337.6 L1245.7 337.6 L1245.7 326.8 L1265.0 326.8 L1286.4 376.6M1273.0 366.4 L1227.1 366.4 L1222.0 374.9 L1219.7 388.5 L1219.7 483.3 L1198.3 512.1 L1198.3 610.0" fill="none" stroke="#6d7a80" stroke-width="1.3" stroke-dasharray="5 3"/><path d="M29.2 385.9L29.2 437.8M1053.2 385.9L1053.2 437.8M2077.2 385.9L2077.2 437.8M54.8 390.3L54.8 419.6L63.4 419.6L63.4 460.0M1078.8 390.3L1078.8 419.6L1087.4 419.6L1087.4 460.0M2102.8 390.3L2102.8 419.6L2111.4 419.6L2111.4 460.0M63.4 429.3L89.0 429.3L98.9 426.7M1087.4 429.3L1113.0 429.3L1122.9 426.7M2111.4 429.3L2137.0 429.3L2146.9 426.7M-738.8 63.5L-738.8 126.7M285.2 63.5L285.2 126.7M1309.2 63.5L1309.2 126.7M-650.6 182.7L-650.6 128.4L-679.0 128.4L-679.0 182.7M373.4 182.7L373.4 128.4L345.0 128.4L345.0 182.7M1397.4 182.7L1397.4 128.4L1369.0 128.4L1369.0 182.7M-627.8 182.7L-627.8 128.4M396.2 182.7L396.2 128.4M1420.2 182.7L1420.2 128.4M-607.9 182.7L-607.9 128.4L-650.6 128.4M416.1 182.7L416.1 128.4L373.4 128.4M1440.1 182.7L1440.1 128.4L1397.4 128.4M-691.0 211.1L-653.4 211.1L-653.4 214.9L-627.8 214.9L-608.8 218.7M333.0 211.1L370.6 211.1L370.6 214.9L396.2 214.9L415.2 218.7M1357.0 211.1L1394.6 211.1L1394.6 214.9L1420.2 214.9L1439.2 218.7M-679.0 211.1L-679.0 222.4L-663.7 236.6M345.0 211.1L345.0 222.4L360.3 236.6M1369.0 211.1L1369.0 222.4L1384.3 236.6M-670.5 182.7L-670.5 211.1M353.5 182.7L353.5 211.1M1377.5 182.7L1377.5 211.1M-653.4 182.7L-653.4 249.2M370.6 182.7L370.6 249.2M1394.6 182.7L1394.6 249.2M-633.5 182.7L-633.5 246.8M390.5 182.7L390.5 246.8M1414.5 182.7L1414.5 246.8M-627.8 218.7L-627.8 231.3M396.2 218.7L396.2 231.3M1420.2 218.7L1420.2 231.3M-606.8 218.7L-606.8 243.5M417.2 218.7L417.2 243.5M1441.2 218.7L1441.2 243.5M-596.5 207.3L-596.5 233.1M427.5 207.3L427.5 233.1M1451.5 207.3L1451.5 233.1M-588.0 211.1L-588.0 236.6M436.0 211.1L436.0 236.6M1460.0 211.1L1460.0 236.6M-579.5 211.1L-579.5 253.5M444.5 211.1L444.5 253.5M1468.5 211.1L1468.5 253.5M-566.7 211.1L-566.7 219.8L-553.3 219.8M457.3 211.1L457.3 219.8L470.7 219.8M1481.3 211.1L1481.3 219.8L1494.7 219.8M-633.5 199.4L-612.2 199.4M390.5 199.4L411.8 199.4M1414.5 199.4L1435.8 199.4M-633.5 207.3L-612.2 207.3M390.5 207.3L411.8 207.3M1414.5 207.3L1435.8 207.3M-662.0 229.6L-606.8 229.6M362.0 229.6L417.2 229.6M1386.0 229.6L1441.2 229.6M-606.8 231.3L-553.9 231.3M417.2 231.3L470.1 231.3M1441.2 231.3L1494.1 231.3M-663.7 236.6L-577.5 236.6M360.3 236.6L446.5 236.6M1384.3 236.6L1470.5 236.6M-630.7 243.5L-605.1 243.5M393.3 243.5L418.9 243.5M1417.3 243.5L1442.9 243.5M-223.9 128.4L-195.5 116.6L-167.0 116.6L-152.8 90.6M800.1 128.4L828.5 116.6L857.0 116.6L871.2 90.6M1824.1 128.4L1852.5 116.6L1881.0 116.6L1895.2 90.6M-167.0 154.9L-138.6 139.4L-110.1 128.4M857.0 154.9L885.4 139.4L913.9 128.4M1881.0 154.9L1909.4 139.4L1937.9 128.4M-95.9 178.3L-81.7 154.9L-53.3 128.4L-39.0 97.5L-24.8 60.2M928.1 178.3L942.3 154.9L970.7 128.4L985.0 97.5L999.2 60.2M1952.1 178.3L1966.3 154.9L1994.7 128.4L2009.0 97.5L2023.2 60.2M3.6 154.9L32.1 128.4L60.5 116.6M1027.6 154.9L1056.1 128.4L1084.5 116.6M2051.6 154.9L2080.1 128.4L2108.5 116.6M-238.1 164.6L-223.9 149.9L-209.7 154.9L-195.5 144.7M785.9 164.6L800.1 149.9L814.3 154.9L828.5 144.7M1809.9 164.6L1824.1 149.9L1838.3 154.9L1852.5 144.7M-209.7 178.3L-201.2 164.6L-186.9 154.9M814.3 178.3L822.8 164.6L837.1 154.9M1838.3 178.3L1846.8 164.6L1861.1 154.9M-138.6 116.6L-124.4 90.6L-110.1 60.2M885.4 116.6L899.6 90.6L913.9 60.2M1909.4 116.6L1923.6 90.6L1937.9 60.2M-10.6 128.4L17.9 97.5L46.3 76.1M1013.4 128.4L1041.9 97.5L1070.3 76.1M2037.4 128.4L2065.9 97.5L2094.3 76.1M-110.1 233.1L-81.7 236.6L-58.9 243.5L-39.0 243.5L-24.8 236.6L-10.6 236.6M913.9 233.1L942.3 236.6L965.1 243.5L985.0 243.5L999.2 236.6L1013.4 236.6M1937.9 233.1L1966.3 236.6L1989.1 243.5L2009.0 243.5L2023.2 236.6L2037.4 236.6M-58.9 260.0L-53.3 236.6L-61.8 211.1M965.1 260.0L970.7 236.6L962.2 211.1M1989.1 260.0L1994.7 236.6L1986.2 211.1M-39.0 269.5L-30.5 253.5L-19.1 240.1M985.0 269.5L993.5 253.5L1004.9 240.1M2009.0 269.5L2017.5 253.5L2028.9 240.1M-24.8 269.5L-13.4 260.0L-2.1 253.5M999.2 269.5L1010.6 260.0L1021.9 253.5M2023.2 269.5L2034.6 260.0L2045.9 253.5M-508.4 363.0L-479.9 371.6L-465.7 365.8M515.6 363.0L544.1 371.6L558.3 365.8M1539.6 363.0L1568.1 371.6L1582.3 365.8M-494.1 386.2L-479.9 395.1L-465.7 386.2M529.9 386.2L544.1 395.1L558.3 386.2M1553.9 386.2L1568.1 395.1L1582.3 386.2M-474.2 357.2L-462.9 371.6M549.8 357.2L561.1 371.6M1573.8 357.2L1585.1 371.6M-528.3 348.7L-508.4 343.0L-494.1 351.5M495.7 348.7L515.6 343.0L529.9 351.5M1519.7 348.7L1539.6 343.0L1553.9 351.5M-124.4 284.9L-110.1 278.8L-95.9 272.6M899.6 284.9L913.9 278.8L928.1 272.6M1923.6 284.9L1937.9 278.8L1952.1 272.6M-130.1 266.4L-115.8 260.0L-104.5 269.5M893.9 266.4L908.2 260.0L919.5 269.5M1917.9 266.4L1932.2 260.0L1943.5 269.5" fill="none" stroke="#7d8284" stroke-width="0.8" stroke-dasharray="2 2" stroke-opacity="0.8"/><path d="M0 343 H1288" fill="none" stroke="#74787a" stroke-width="1.6" stroke-dasharray="6 4"/></svg><div class="ocn" style="left:212px;top:231px">North<br>Pacific<br>Ocean</div><div class="ocn" style="left:1236px;top:231px">North<br>Pacific<br>Ocean</div><div class="ocn" style="left:570px;top:238px">North<br>Atlantic<br>Ocean</div><div class="ocn" style="left:913px;top:408px">Indian<br>Ocean</div><div class="ocn" style="left:644px;top:429px">South<br>Atlantic<br>Ocean</div><div class="ocn" style="left:296px;top:430px">South<br>Pacific<br>Ocean</div><div class="ocn" style="left:743px;top:567px">Southern<br>Ocean</div><div class="ocn" style="left:222px;top:608px">Southern</div><div class="lbl" style="left:572px;top:36px">Greenland</div><div class="lbl" style="left:633px;top:97px">Iceland</div><div class="lbl" style="left:760px;top:79px">Finland</div><div class="lbl" style="left:733px;top:101px">Sweden</div><div class="lbl" style="left:709px;top:123px">Norway</div><div class="lbl" style="left:674px;top:149px">United<br>Kingdom</div><div class="lbl" style="left:953px;top:115px">Russia</div><div class="lbl" style="left:390px;top:157px">Canada</div><div class="lbl" style="left:738px;top:165px">Poland</div><div class="lbl" style="left:715px;top:180px">Germany</div><div class="lbl" style="left:778px;top:180px">Ukraine</div><div class="lbl" style="left:877px;top:186px">Kazakhstan</div><div class="lbl" style="left:965px;top:192px">Mongolia</div><div class="lbl" style="left:693px;top:195px">France</div><div class="lbl" style="left:720px;top:206px">Italy</div><div class="lbl" style="left:677px;top:212px">Spain</div><div class="lbl" style="left:787px;top:222px">Türkiye</div><div class="lbl" style="left:879px;top:239px">Afghanistan</div><div class="lbl" style="left:980px;top:228px">China</div><div class="lbl" style="left:1046px;top:231px">South Korea</div><div class="lbl" style="left:1085px;top:222px">Japan</div><div class="lbl" style="left:398px;top:220px">United States</div><div class="lbl" style="left:808px;top:244px">Iraq</div><div class="lbl" style="left:841px;top:248px">Iran</div><div class="lbl" style="left:395px;top:273px">Mexico</div><div class="lbl" style="left:691px;top:259px">Algeria</div><div class="lbl" style="left:736px;top:263px">Libya</div><div class="lbl" style="left:772px;top:259px">Egypt</div><div class="lbl" style="left:881px;top:257px">Pakistan</div><div class="lbl" style="left:912px;top:276px">India</div><div class="lbl" style="left:814px;top:274px">Saudi Arabia</div><div class="lbl" style="left:680px;top:291px">Mali</div><div class="lbl" style="left:715px;top:292px">Niger</div><div class="lbl" style="left:774px;top:294px">Sudan</div><div class="lbl" style="left:742px;top:303px">Chad</div><div class="lbl" style="left:970px;top:285px">Thailand</div><div class="lbl" style="left:498px;top:320px">Venezuela</div><div class="lbl" style="left:469px;top:332px">Colombia</div><div class="lbl" style="left:798px;top:317px">Ethiopia</div><div class="lbl" style="left:793px;top:342px">Kenya</div><div class="lbl" style="left:1020px;top:355px">Indonesia</div><div class="lbl" style="left:1105px;top:361px">Papua New<br>Guinea</div><div class="lbl" style="left:81px;top:361px">Papua New<br>Guinea</div><div class="lbl" style="left:750px;top:348px">DRC</div><div class="lbl" style="left:791px;top:361px">Tanzania</div><div class="lbl" style="left:527px;top:368px">Brazil</div><div class="lbl" style="left:467px;top:374px">Peru</div><div class="lbl" style="left:732px;top:378px">Angola</div><div class="lbl" style="left:502px;top:391px">Bolivia</div><div class="lbl" style="left:731px;top:399px">Namibia</div><div class="lbl" style="left:755px;top:411px">Botswana</div><div class="lbl" style="left:822px;top:405px">Madagascar</div><div class="lbl" style="left:44px;top:416px">Australia</div><div class="lbl" style="left:1068px;top:416px">Australia</div><div class="lbl" style="left:486px;top:422px">Chile</div><div class="lbl" style="left:508px;top:464px">Argentina</div><div class="lbl" style="left:742px;top:444px">South Africa</div><div class="lbl" style="left:136px;top:469px">New<br>Zealand</div><div class="lbl" style="left:1160px;top:469px">New<br>Zealand</div><div class="lbl" style="left:24px;top:231px">South Korea</div><div class="lbl" style="left:61px;top:222px">Japan</div><svg class="abs" style="left:950px;top:147px" width="80" height="80" viewBox="0 0 80 80"><circle cx="40" cy="40" r="17.5" fill="none" stroke="rgba(248,188,28,.62)" stroke-width="3.6" stroke-dasharray="30.79 5.86" transform="rotate(-143 40 40)"/><circle cx="40" cy="40" r="22.3" fill="none" stroke="rgba(246,200,80,.45)" stroke-width="3.6" stroke-dasharray="39.23 7.47" transform="rotate(-143 40 40)"/><circle cx="40" cy="40" r="27.1" fill="none" stroke="rgba(246,220,140,.38)" stroke-width="3.6" stroke-dasharray="47.68 9.08" transform="rotate(-143 40 40)"/><circle cx="40" cy="40" r="13.1" fill="#fdb913" stroke="rgba(255,255,255,.55)" stroke-width="1.2"/><text x="40" y="44.5" text-anchor="middle" font-family="Liberation Sans" font-weight="bold" font-size="12.5" fill="#111">10</text></svg><svg class="abs" style="left:852px;top:174px" width="80" height="80" viewBox="0 0 80 80"><circle cx="40" cy="40" r="17.5" fill="none" stroke="rgba(248,188,28,.62)" stroke-width="3.6" stroke-dasharray="30.79 5.86" transform="rotate(-143 40 40)"/><circle cx="40" cy="40" r="22.3" fill="none" stroke="rgba(246,200,80,.45)" stroke-width="3.6" stroke-dasharray="39.23 7.47" transform="rotate(-143 40 40)"/><circle cx="40" cy="40" r="27.1" fill="none" stroke="rgba(246,220,140,.38)" stroke-width="3.6" stroke-dasharray="47.68 9.08" transform="rotate(-143 40 40)"/><circle cx="40" cy="40" r="13.1" fill="#fdb913" stroke="rgba(255,255,255,.55)" stroke-width="1.2"/><text x="40" y="44.5" text-anchor="middle" font-family="Liberation Sans" font-weight="bold" font-size="12.5" fill="#111">14</text></svg><svg class="abs" style="left:622px;top:173px" width="80" height="80" viewBox="0 0 80 80"><circle cx="40" cy="40" r="17.5" fill="none" stroke="rgba(248,188,28,.62)" stroke-width="3.6" stroke-dasharray="30.79 5.86" transform="rotate(-143 40 40)"/><circle cx="40" cy="40" r="22.3" fill="none" stroke="rgba(246,200,80,.45)" stroke-width="3.6" stroke-dasharray="39.23 7.47" transform="rotate(-143 40 40)"/><circle cx="40" cy="40" r="27.1" fill="none" stroke="rgba(246,220,140,.38)" stroke-width="3.6" stroke-dasharray="47.68 9.08" transform="rotate(-143 40 40)"/><circle cx="40" cy="40" r="13.1" fill="#fdb913" stroke="rgba(255,255,255,.55)" stroke-width="1.2"/><text x="40" y="44.5" text-anchor="middle" font-family="Liberation Sans" font-weight="bold" font-size="12.5" fill="#111">62</text></svg><svg class="abs" style="left:783px;top:191px" width="80" height="80" viewBox="0 0 80 80"><circle cx="40" cy="40" r="17.5" fill="none" stroke="rgba(248,188,28,.62)" stroke-width="3.6" stroke-dasharray="30.79 5.86" transform="rotate(-143 40 40)"/><circle cx="40" cy="40" r="22.3" fill="none" stroke="rgba(246,200,80,.45)" stroke-width="3.6" stroke-dasharray="39.23 7.47" transform="rotate(-143 40 40)"/><circle cx="40" cy="40" r="27.1" fill="none" stroke="rgba(246,220,140,.38)" stroke-width="3.6" stroke-dasharray="47.68 9.08" transform="rotate(-143 40 40)"/><circle cx="40" cy="40" r="13.1" fill="#fdb913" stroke="rgba(255,255,255,.55)" stroke-width="1.2"/><text x="40" y="44.5" text-anchor="middle" font-family="Liberation Sans" font-weight="bold" font-size="12.5" fill="#111">26</text></svg><svg class="abs" style="left:372px;top:204px" width="80" height="80" viewBox="0 0 80 80"><circle cx="40" cy="40" r="17.5" fill="none" stroke="rgba(248,188,28,.62)" stroke-width="3.6" stroke-dasharray="30.79 5.86" transform="rotate(-143 40 40)"/><circle cx="40" cy="40" r="22.3" fill="none" stroke="rgba(246,200,80,.45)" stroke-width="3.6" stroke-dasharray="39.23 7.47" transform="rotate(-143 40 40)"/><circle cx="40" cy="40" r="27.1" fill="none" stroke="rgba(246,220,140,.38)" stroke-width="3.6" stroke-dasharray="47.68 9.08" transform="rotate(-143 40 40)"/><circle cx="40" cy="40" r="13.1" fill="#fdb913" stroke="rgba(255,255,255,.55)" stroke-width="1.2"/><text x="40" y="44.5" text-anchor="middle" font-family="Liberation Sans" font-weight="bold" font-size="12.5" fill="#111">12</text></svg><svg class="abs" style="left:991px;top:213px" width="80" height="80" viewBox="0 0 80 80"><circle cx="40" cy="40" r="17.5" fill="none" stroke="rgba(248,188,28,.62)" stroke-width="3.6" stroke-dasharray="30.79 5.86" transform="rotate(-143 40 40)"/><circle cx="40" cy="40" r="22.3" fill="none" stroke="rgba(246,200,80,.45)" stroke-width="3.6" stroke-dasharray="39.23 7.47" transform="rotate(-143 40 40)"/><circle cx="40" cy="40" r="27.1" fill="none" stroke="rgba(246,220,140,.38)" stroke-width="3.6" stroke-dasharray="47.68 9.08" transform="rotate(-143 40 40)"/><circle cx="40" cy="40" r="13.1" fill="#fdb913" stroke="rgba(255,255,255,.55)" stroke-width="1.2"/><text x="40" y="44.5" text-anchor="middle" font-family="Liberation Sans" font-weight="bold" font-size="12.5" fill="#111">17</text></svg><svg class="abs" style="left:688px;top:194px" width="80" height="80" viewBox="0 0 80 80"><circle cx="40" cy="40" r="17.5" fill="none" stroke="rgba(30,140,245,.6)" stroke-width="3.6" stroke-dasharray="30.79 5.86" transform="rotate(-143 40 40)"/><circle cx="40" cy="40" r="22.3" fill="none" stroke="rgba(90,170,245,.42)" stroke-width="3.6" stroke-dasharray="39.23 7.47" transform="rotate(-143 40 40)"/><circle cx="40" cy="40" r="27.1" fill="none" stroke="rgba(170,205,245,.4)" stroke-width="3.6" stroke-dasharray="47.68 9.08" transform="rotate(-143 40 40)"/><circle cx="40" cy="40" r="13.1" fill="#0a84f5" stroke="rgba(255,255,255,.55)" stroke-width="1.2"/><text x="40" y="44.5" text-anchor="middle" font-family="Liberation Sans" font-weight="bold" font-size="12.5" fill="#111">6</text></svg><svg class="abs" style="left:844px;top:236px" width="80" height="80" viewBox="0 0 80 80"><circle cx="40" cy="40" r="17.5" fill="none" stroke="rgba(30,140,245,.6)" stroke-width="3.6" stroke-dasharray="30.79 5.86" transform="rotate(-143 40 40)"/><circle cx="40" cy="40" r="22.3" fill="none" stroke="rgba(90,170,245,.42)" stroke-width="3.6" stroke-dasharray="39.23 7.47" transform="rotate(-143 40 40)"/><circle cx="40" cy="40" r="27.1" fill="none" stroke="rgba(170,205,245,.4)" stroke-width="3.6" stroke-dasharray="47.68 9.08" transform="rotate(-143 40 40)"/><circle cx="40" cy="40" r="13.1" fill="#0a84f5" stroke="rgba(255,255,255,.55)" stroke-width="1.2"/><text x="40" y="44.5" text-anchor="middle" font-family="Liberation Sans" font-weight="bold" font-size="12.5" fill="#111">2</text></svg><svg class="abs" style="left:938px;top:251px" width="80" height="80" viewBox="0 0 80 80"><circle cx="40" cy="40" r="20.0" fill="none" stroke="rgba(240,30,30,.62)" stroke-width="3.6" stroke-dasharray="35.19 6.70" transform="rotate(-143 40 40)"/><circle cx="40" cy="40" r="24.8" fill="none" stroke="rgba(215,75,85,.48)" stroke-width="3.6" stroke-dasharray="43.63 8.31" transform="rotate(-143 40 40)"/><circle cx="40" cy="40" r="29.6" fill="none" stroke="rgba(170,105,125,.38)" stroke-width="3.6" stroke-dasharray="52.08 9.92" transform="rotate(-143 40 40)"/><circle cx="40" cy="40" r="15.6" fill="#ff0000" stroke="rgba(255,255,255,.55)" stroke-width="1.2"/><text x="40" y="44.5" text-anchor="middle" font-family="Liberation Sans" font-weight="bold" font-size="12" fill="#111">919</text></svg><svg class="abs" style="left:431px;top:273px" width="80" height="80" viewBox="0 0 80 80"><circle cx="40" cy="40" r="20.0" fill="none" stroke="rgba(240,30,30,.62)" stroke-width="3.6" stroke-dasharray="35.19 6.70" transform="rotate(-143 40 40)"/><circle cx="40" cy="40" r="24.8" fill="none" stroke="rgba(215,75,85,.48)" stroke-width="3.6" stroke-dasharray="43.63 8.31" transform="rotate(-143 40 40)"/><circle cx="40" cy="40" r="29.6" fill="none" stroke="rgba(170,105,125,.38)" stroke-width="3.6" stroke-dasharray="52.08 9.92" transform="rotate(-143 40 40)"/><circle cx="40" cy="40" r="15.6" fill="#ff0000" stroke="rgba(255,255,255,.55)" stroke-width="1.2"/><text x="40" y="44.5" text-anchor="middle" font-family="Liberation Sans" font-weight="bold" font-size="12" fill="#111">238</text></svg><svg class="abs" style="left:598px;top:265px" width="80" height="80" viewBox="0 0 80 80"><circle cx="40" cy="40" r="20.0" fill="none" stroke="rgba(240,30,30,.62)" stroke-width="3.6" stroke-dasharray="35.19 6.70" transform="rotate(-143 40 40)"/><circle cx="40" cy="40" r="24.8" fill="none" stroke="rgba(215,75,85,.48)" stroke-width="3.6" stroke-dasharray="43.63 8.31" transform="rotate(-143 40 40)"/><circle cx="40" cy="40" r="29.6" fill="none" stroke="rgba(170,105,125,.38)" stroke-width="3.6" stroke-dasharray="52.08 9.92" transform="rotate(-143 40 40)"/><circle cx="40" cy="40" r="15.6" fill="#ff0000" stroke="rgba(255,255,255,.55)" stroke-width="1.2"/><text x="40" y="44.5" text-anchor="middle" font-family="Liberation Sans" font-weight="bold" font-size="12" fill="#111">967</text></svg><svg class="abs" style="left:667px;top:276px" width="80" height="80" viewBox="0 0 80 80"><circle cx="40" cy="40" r="17.5" fill="none" stroke="rgba(248,188,28,.62)" stroke-width="3.6" stroke-dasharray="30.79 5.86" transform="rotate(-143 40 40)"/><circle cx="40" cy="40" r="22.3" fill="none" stroke="rgba(246,200,80,.45)" stroke-width="3.6" stroke-dasharray="39.23 7.47" transform="rotate(-143 40 40)"/><circle cx="40" cy="40" r="27.1" fill="none" stroke="rgba(246,220,140,.38)" stroke-width="3.6" stroke-dasharray="47.68 9.08" transform="rotate(-143 40 40)"/><circle cx="40" cy="40" r="13.1" fill="#fdb913" stroke="rgba(255,255,255,.55)" stroke-width="1.2"/><text x="40" y="44.5" text-anchor="middle" font-family="Liberation Sans" font-weight="bold" font-size="12.5" fill="#111">61</text></svg><svg class="abs" style="left:774px;top:273px" width="80" height="80" viewBox="0 0 80 80"><circle cx="40" cy="40" r="17.5" fill="none" stroke="rgba(248,188,28,.62)" stroke-width="3.6" stroke-dasharray="30.79 5.86" transform="rotate(-143 40 40)"/><circle cx="40" cy="40" r="22.3" fill="none" stroke="rgba(246,200,80,.45)" stroke-width="3.6" stroke-dasharray="39.23 7.47" transform="rotate(-143 40 40)"/><circle cx="40" cy="40" r="27.1" fill="none" stroke="rgba(246,220,140,.38)" stroke-width="3.6" stroke-dasharray="47.68 9.08" transform="rotate(-143 40 40)"/><circle cx="40" cy="40" r="13.1" fill="#fdb913" stroke="rgba(255,255,255,.55)" stroke-width="1.2"/><text x="40" y="44.5" text-anchor="middle" font-family="Liberation Sans" font-weight="bold" font-size="12.5" fill="#111">42</text></svg><svg class="abs" style="left:950px;top:321px" width="80" height="80" viewBox="0 0 80 80"><circle cx="40" cy="40" r="17.5" fill="none" stroke="rgba(248,188,28,.62)" stroke-width="3.6" stroke-dasharray="30.79 5.86" transform="rotate(-143 40 40)"/><circle cx="40" cy="40" r="22.3" fill="none" stroke="rgba(246,200,80,.45)" stroke-width="3.6" stroke-dasharray="39.23 7.47" transform="rotate(-143 40 40)"/><circle cx="40" cy="40" r="27.1" fill="none" stroke="rgba(246,220,140,.38)" stroke-width="3.6" stroke-dasharray="47.68 9.08" transform="rotate(-143 40 40)"/><circle cx="40" cy="40" r="13.1" fill="#fdb913" stroke="rgba(255,255,255,.55)" stroke-width="1.2"/><text x="40" y="44.5" text-anchor="middle" font-family="Liberation Sans" font-weight="bold" font-size="12.5" fill="#111">23</text></svg><svg class="abs" style="left:718px;top:334px" width="80" height="80" viewBox="0 0 80 80"><circle cx="40" cy="40" r="17.5" fill="none" stroke="rgba(248,188,28,.62)" stroke-width="3.6" stroke-dasharray="30.79 5.86" transform="rotate(-143 40 40)"/><circle cx="40" cy="40" r="22.3" fill="none" stroke="rgba(246,200,80,.45)" stroke-width="3.6" stroke-dasharray="39.23 7.47" transform="rotate(-143 40 40)"/><circle cx="40" cy="40" r="27.1" fill="none" stroke="rgba(246,220,140,.38)" stroke-width="3.6" stroke-dasharray="47.68 9.08" transform="rotate(-143 40 40)"/><circle cx="40" cy="40" r="13.1" fill="#fdb913" stroke="rgba(255,255,255,.55)" stroke-width="1.2"/><text x="40" y="44.5" text-anchor="middle" font-family="Liberation Sans" font-weight="bold" font-size="12.5" fill="#111">49</text></svg><svg class="abs" style="left:220px;top:354px" width="80" height="80" viewBox="0 0 80 80"><circle cx="40" cy="40" r="17.5" fill="none" stroke="rgba(248,188,28,.62)" stroke-width="3.6" stroke-dasharray="30.79 5.86" transform="rotate(-143 40 40)"/><circle cx="40" cy="40" r="22.3" fill="none" stroke="rgba(246,200,80,.45)" stroke-width="3.6" stroke-dasharray="39.23 7.47" transform="rotate(-143 40 40)"/><circle cx="40" cy="40" r="27.1" fill="none" stroke="rgba(246,220,140,.38)" stroke-width="3.6" stroke-dasharray="47.68 9.08" transform="rotate(-143 40 40)"/><circle cx="40" cy="40" r="13.1" fill="#fdb913" stroke="rgba(255,255,255,.55)" stroke-width="1.2"/><text x="40" y="44.5" text-anchor="middle" font-family="Liberation Sans" font-weight="bold" font-size="12.5" fill="#111">35</text></svg><svg class="abs" style="left:524px;top:370px" width="80" height="80" viewBox="0 0 80 80"><circle cx="40" cy="40" r="17.5" fill="none" stroke="rgba(30,140,245,.6)" stroke-width="3.6" stroke-dasharray="30.79 5.86" transform="rotate(-143 40 40)"/><circle cx="40" cy="40" r="22.3" fill="none" stroke="rgba(90,170,245,.42)" stroke-width="3.6" stroke-dasharray="39.23 7.47" transform="rotate(-143 40 40)"/><circle cx="40" cy="40" r="27.1" fill="none" stroke="rgba(170,205,245,.4)" stroke-width="3.6" stroke-dasharray="47.68 9.08" transform="rotate(-143 40 40)"/><circle cx="40" cy="40" r="13.1" fill="#0a84f5" stroke="rgba(255,255,255,.55)" stroke-width="1.2"/><text x="40" y="44.5" text-anchor="middle" font-family="Liberation Sans" font-weight="bold" font-size="12.5" fill="#111">7</text></svg><svg class="abs" style="left:445px;top:402px" width="80" height="80" viewBox="0 0 80 80"><circle cx="40" cy="40" r="17.5" fill="none" stroke="rgba(248,188,28,.62)" stroke-width="3.6" stroke-dasharray="30.79 5.86" transform="rotate(-143 40 40)"/><circle cx="40" cy="40" r="22.3" fill="none" stroke="rgba(246,200,80,.45)" stroke-width="3.6" stroke-dasharray="39.23 7.47" transform="rotate(-143 40 40)"/><circle cx="40" cy="40" r="27.1" fill="none" stroke="rgba(246,220,140,.38)" stroke-width="3.6" stroke-dasharray="47.68 9.08" transform="rotate(-143 40 40)"/><circle cx="40" cy="40" r="13.1" fill="#fdb913" stroke="rgba(255,255,255,.55)" stroke-width="1.2"/><text x="40" y="44.5" text-anchor="middle" font-family="Liberation Sans" font-weight="bold" font-size="12.5" fill="#111">62</text></svg><svg class="abs" style="left:976px;top:399px" width="80" height="80" viewBox="0 0 80 80"><circle cx="40" cy="40" r="17.5" fill="none" stroke="rgba(30,140,245,.6)" stroke-width="3.6" stroke-dasharray="30.79 5.86" transform="rotate(-143 40 40)"/><circle cx="40" cy="40" r="22.3" fill="none" stroke="rgba(90,170,245,.42)" stroke-width="3.6" stroke-dasharray="39.23 7.47" transform="rotate(-143 40 40)"/><circle cx="40" cy="40" r="27.1" fill="none" stroke="rgba(170,205,245,.4)" stroke-width="3.6" stroke-dasharray="47.68 9.08" transform="rotate(-143 40 40)"/><circle cx="40" cy="40" r="13.1" fill="#0a84f5" stroke="rgba(255,255,255,.55)" stroke-width="1.2"/><text x="40" y="44.5" text-anchor="middle" font-family="Liberation Sans" font-weight="bold" font-size="12.5" fill="#111">7</text></svg><!-- map controls (coords relative to map) -->
<div class="tb" style="left:6px;top:8px;width:98px;height:24px;border:1px solid #ddd"></div>
<div class="abs" style="left:14px;top:13px;font-size:12px;color:#222">Google Maps</div>
<svg class="abs" style="left:89px;top:18px" width="10" height="6" viewBox="0 0 10 6"><path d="M0 0 H10 L5 6 Z" fill="#333"/></svg>
<div class="tb" style="left:112px;top:8px;width:123px;height:24px;border:1px solid #ddd"></div>
<div class="abs" style="left:120px;top:13px;font-size:12.5px;color:#777">Location search</div>
<div class="tb" style="left:241px;top:7px;width:309px;height:26px"></div>
<svg class="abs" style="left:241px;top:7px" width="309" height="26" viewBox="0 0 309 26">
 <g stroke="#d0d0d0" stroke-width="1"><path d="M31.5 0 V26 M62.5 0 V26 M93.5 0 V26 M124.5 0 V26 M155.5 0 V26 M186.5 0 V26 M217.5 0 V26 M248.5 0 V26 M279.5 0 V26"/></g>
 <g fill="none" stroke="#555" stroke-width="1.3">
  <path d="M11 19.5 H9 Q8 19.5 8 18.5 V8.5 Q8 7.5 9 7.5 H21 Q22 7.5 22 8.5 V12"/><circle cx="16" cy="15.5" r="3.3"/><path d="M18.5 18 L21.5 21"/>
  <path d="M40 9 L46 8 L53 17 L48 20 L42 13 Z"/><circle cx="40" cy="9" r="1.3"/><circle cx="48" cy="20" r="1.3"/>
  <rect x="70.5" y="8.5" width="15" height="11" rx="1"/><path d="M70.5 12 H69 M70.5 16 H69 M85.5 12 H87 M85.5 16 H87"/>
  <path d="M101 21 V7 Q107 5 110 8 Q113 10 117 8 V15 Q113 17 110 14 Q107 12 101 14"/>
  <path d="M140 6 L143 9 L137 15 L134 12 Z M134 12 L128 18 L132 21 L136 15"/>
  <path d="M162 7 L180 21 M180 7 L162 21" stroke="#888"/>
 </g>
 <rect x="197" y="6" width="9" height="15" rx="2" fill="#555"/><circle cx="201.5" cy="9.5" r="1.6" fill="#fff"/><circle cx="201.5" cy="13.5" r="1.6" fill="#fff"/><circle cx="201.5" cy="17.5" r="1.6" fill="#fff"/>
 <g fill="none" stroke="#555" stroke-width="1.3">
  <rect x="224" y="9" width="18" height="12" rx="1.5"/><circle cx="233" cy="15" r="3.3"/><path d="M229 9 L230.5 6.5 H235.5 L237 9"/>
  <path d="M255 21 V12 H258 V21 M258 21 V7 H262 V21 M262 21 V12 H265 V21 M253 21 H267"/>
 </g>
 <g fill="none" stroke="#1a6fd6" stroke-width="1.5">
  <circle cx="294" cy="13.5" r="3.5"/><path d="M285 5 L289.5 9.5 M303 5 L298.5 9.5 M285 22 L289.5 17.5 M303 22 L298.5 17.5"/>
 </g>
 <circle cx="294" cy="13.5" r="1.6" fill="#1a6fd6"/>
</svg>
<svg class="abs" style="left:557px;top:12px" width="16" height="16" viewBox="0 0 16 16"><circle cx="8" cy="8" r="6" fill="none" stroke="#666" stroke-width="1.2"/><circle cx="8" cy="8" r="2.3" fill="#666"/></svg>
<div class="tb" style="left:590px;top:7px;width:98px;height:26px"></div>
<svg class="abs" style="left:590px;top:7px" width="98" height="26" viewBox="0 0 98 26">
 <path d="M32.5 0 V26 M65.5 0 V26" stroke="#d8d8d8"/>
 <path d="M8.5 5.5 H20 L23.5 9 V20.5 H8.5 Z" fill="none" stroke="#111" stroke-width="1.8"/><path d="M11.5 5.5 V10 H19 V5.5 M11.5 20.5 V14.5 H20.5 V20.5" fill="none" stroke="#111" stroke-width="1.5"/>
 <path d="M49 8 H42 Q41 8 41 9 V19 Q41 20 42 20 H52 Q53 20 53 19 V13" fill="none" stroke="#111" stroke-width="1.8"/><path d="M47 15 L55 6.5 M50.5 5.5 H56 V11" fill="none" stroke="#111" stroke-width="1.8"/>
 <path d="M74 6 H80 L78 8 L81 11 L80 12 L77 9 L75 11 Z M90 6 H84 L86 8 L83 11 L84 12 L87 9 L89 11 Z M74 20 H80 L78 18 L81 15 L80 14 L77 17 L75 15 Z M90 20 H84 L86 18 L83 15 L84 14 L87 17 L89 15 Z" fill="#111" stroke="#111" stroke-width="1"/>
</svg>
<!-- right buttons -->
<div class="tb" style="left:1202px;top:5px;width:35px;height:33px;border-radius:3px"></div>
<svg class="abs" style="left:1206px;top:9px" width="27" height="25" viewBox="0 0 27 25">
 <path d="M2 8 H14 V19 H2 Z" fill="#1a6fd6"/><path d="M15 11 H20 L24 15 V19 H15 Z" fill="#1a6fd6"/><circle cx="6" cy="20" r="2.3" fill="#fff" stroke="#1a6fd6" stroke-width="1.3"/><circle cx="19" cy="20" r="2.3" fill="#fff" stroke="#1a6fd6" stroke-width="1.3"/>
 <circle cx="7" cy="6" r="4.6" fill="#fff" stroke="#1a6fd6" stroke-width="1.4"/><path d="M7 3.5 V6 H9" stroke="#1a6fd6" stroke-width="1.2" fill="none"/>
</svg>
<div class="abs" style="left:1248px;top:1px;width:40px;height:40px;background:#4285f4"></div>
<svg class="abs" style="left:1258px;top:11px" width="20" height="20" viewBox="0 0 20 20"><g fill="none" stroke="#fff" stroke-width="1.6"><rect x="1.5" y="1.5" width="6" height="6"/><rect x="1.5" y="11.5" width="6" height="6"/><path d="M10 3 H18.5 M10 6.5 H18.5 M10 13 H18.5 M10 16.5 H18.5"/></g></svg>
<!-- collapse arrow -->
<svg class="abs" style="left:1273px;top:286px" width="15" height="78" viewBox="0 0 15 78"><path d="M15 0.5 V77.5 L4 71.5 Q0.5 69.5 0.5 65 V13 Q0.5 8.5 4 6.8 Z" fill="#fafafa"/></svg><div class="abs" style="left:1287px;top:41px;width:1px;height:569px;background:#d0d3d6"></div>
<svg class="abs" style="left:1275px;top:317px" width="10" height="16" viewBox="0 0 10 16"><path d="M2 1 L8 8 L2 15" fill="none" stroke="#1a5fc0" stroke-width="1.8"/></svg>
<!-- zoom -->
<div class="tb" style="left:1252px;top:530px;width:27px;height:53px;border-radius:1px;box-shadow:0 1px 2px rgba(0,0,0,.2)"></div>
<div class="abs" style="left:1256px;top:556px;width:19px;height:1px;background:#e6e6e6"></div>
<svg class="abs" style="left:1258px;top:535px" width="15" height="42" viewBox="0 0 15 42"><path d="M1.5 7.5 H13.5 M7.5 1.5 V13.5 M1.5 34 H13.5" stroke="#666" stroke-width="2.2"/></svg>
<!-- map / satellite -->
<div class="tb" style="left:5px;top:549px;width:109px;height:26px;border-radius:2px;box-shadow:0 1px 2px rgba(0,0,0,.3)"></div>
<div class="abs" style="left:50px;top:549px;width:1px;height:26px;background:#e6e6e6"></div>
<div class="abs" style="left:17px;top:556px;font-size:12px;color:#111">Map</div>
<div class="abs" style="left:62px;top:556px;font-size:12px;color:#666">Satellite</div>
<!-- google logo -->
<div class="abs" style="left:9px;top:586px;font-size:16px;font-weight:bold;letter-spacing:-0.5px;font-family:'Liberation Sans',sans-serif;text-shadow:0 0 2px #fff"><span style="color:#4285f4">G</span><span style="color:#ea4335">o</span><span style="color:#fbbc05">o</span><span style="color:#4285f4">g</span><span style="color:#34a853">l</span><span style="color:#ea4335">e</span></div>
<!-- scale -->
<div class="abs" style="left:1162px;top:596px;width:125px;height:14px;background:rgba(245,245,245,.72)"></div>
<div class="abs" style="left:1166px;top:597px;font-size:10px;color:#333">1000 km</div>
<svg class="abs" style="left:1209px;top:599px" width="72" height="8" viewBox="0 0 72 8"><path d="M1 0 V6 H70 V0" fill="none" stroke="#555" stroke-width="1.8"/></svg>
</div><div id="panel"><div class="abs" style="left:0;top:1px;width:582px;height:40px;background:#26282c"></div><div class="abs" style="left:14px;top:13px;font-size:12.5px;color:#fff;font-weight:bold">Select asset</div><div class="abs" style="left:115px;top:13px;font-size:12.5px;color:#fff;font-weight:bold">Select device</div><div class="abs" style="left:100px;top:37px;width:107px;height:4px;background:#1a5fc0"></div><div class="abs" style="left:0;top:41px;width:574px;height:36px;background:linear-gradient(#f7f7f8,#e4e4e6);border-bottom:1px solid #ddd"></div><svg class="abs" style="left:9px;top:51px" width="15" height="15" viewBox="0 0 15 15"><circle cx="7" cy="7" r="5.5" fill="none" stroke="#b8bcc4" stroke-width="1.3"/><path d="M11 11 L13.5 13.5" stroke="#b8bcc4" stroke-width="1.3"/></svg><div class="abs" style="left:30px;top:52px;font-size:12.5px;color:#b3b8c2">Enter the keywords</div><svg class="abs" style="left:532px;top:50px" width="18" height="16" viewBox="0 0 18 16"><path d="M1 4 H5 M1 7.5 H4 M1 11 H5 M1 14 H14" stroke="#444" stroke-width="1.2"/><circle cx="10" cy="7" r="4.2" fill="none" stroke="#444" stroke-width="1.5"/><path d="M13 10 L16.5 13.5" stroke="#444" stroke-width="1.8"/></svg><svg class="abs" style="left:558px;top:50px" width="16" height="16" viewBox="0 0 16 16"><path d="M13.5 6 A6 6 0 0 0 2.8 4.5 M2.5 10 A6 6 0 0 0 13.2 11.5" fill="none" stroke="#444" stroke-width="2.2"/><path d="M14.5 1 V7 H8.5 Z M1.5 15 V9 H7.5 Z" fill="#444"/></svg><div class="abs" style="left:15px;top:87px;width:552px;height:30px;background:#eef4fc"></div><div class="abs" style="left:96px;top:117px;width:323px;height:493px;background:linear-gradient(90deg,#f3f3f4,#f9f9f9 60%,#fcfcfc)"></div><div class="abs" style="left:16px;top:96px;width:13px;height:13px;background:linear-gradient(#eaf3ff,#9cc4f0)"></div><div class="abs" style="left:18px;top:102px;width:9px;height:2px;background:#333"></div><svg class="abs" style="left:35px;top:95px" width="14" height="14" viewBox="0 0 14 14"><rect width="14" height="14" rx="2" fill="#3f95f0"/><path d="M4 7 H10" stroke="#fff" stroke-width="1.5"/></svg><svg class="abs" style="left:56px;top:95px" width="16" height="14" viewBox="0 0 16 14"><path d="M8 1 L0.5 7.5 L1.5 8.5 L2.5 7.7 V13.5 H6.5 V9.5 H9.5 V13.5 H13.5 V7.7 L14.5 8.5 L15.5 7.5 L12.5 4.8 V1.5 H10.8 V3.3 Z" fill="#555"/></svg><div class="abs" style="left:71px;top:89px;width:25px;height:21px;background:#e8eaee"></div><div class="blur" style="left:102px;top:96px;width:80px;height:11px;background:#d4d6da;filter:blur(5px);opacity:.8"></div><div class="abs" style="left:21px;top:109px;width:0;height:501px;border-left:1px dashed #666"></div><div class="abs" style="left:22px;top:132px;width:33px;height:0;border-top:1px dashed #666"></div><svg class="abs" style="left:55px;top:125px" width="14" height="14" viewBox="0 0 14 14"><rect width="14" height="14" rx="2" fill="#3f95f0"/><path d="M3.3 7.2 L6 9.8 L10.8 4.3" fill="none" stroke="#fff" stroke-width="1.4"/></svg><svg class="abs" style="left:76px;top:124px" width="16" height="14" viewBox="0 0 16 14"><path d="M8 1 L0.5 7.5 L1.5 8.5 L2.5 7.7 V13.5 H6.5 V9.5 H9.5 V13.5 H13.5 V7.7 L14.5 8.5 L15.5 7.5 L12.5 4.8 V1.5 H10.8 V3.3 Z" fill="#555"/></svg><div class="blur" style="left:98px;top:126px;width:152px;height:12px;background:#d9d9db;filter:blur(6px);opacity:.85"></div><div class="abs" style="left:22px;top:162px;width:33px;height:0;border-top:1px dashed #666"></div><svg class="abs" style="left:56px;top:156px" width="13" height="13" viewBox="0 0 13 13"><defs><linearGradient id="pg156" x1="0" y1="0" x2="0" y2="1"><stop offset="0" stop-color="#eaf3ff"/><stop offset="1" stop-color="#9cc4f0"/></linearGradient></defs><rect width="13" height="13" fill="url(#pg156)"/><path d="M6.5 1.5 V11.5 M1.5 6.5 H11.5" stroke="#333" stroke-width="1.6"/></svg><svg class="abs" style="left:75px;top:155px" width="14" height="14" viewBox="0 0 14 14"><rect width="14" height="14" rx="2" fill="#3f95f0"/><path d="M3.3 7.2 L6 9.8 L10.8 4.3" fill="none" stroke="#fff" stroke-width="1.4"/></svg><div class="blur" style="left:98px;top:156px;width:139px;height:12px;background:#d9d9db;filter:blur(6px);opacity:.85"></div><div class="abs" style="left:22px;top:192px;width:33px;height:0;border-top:1px dashed #666"></div><svg class="abs" style="left:56px;top:186px" width="13" height="13" viewBox="0 0 13 13"><defs><linearGradient id="pg186" x1="0" y1="0" x2="0" y2="1"><stop offset="0" stop-color="#eaf3ff"/><stop offset="1" stop-color="#9cc4f0"/></linearGradient></defs><rect width="13" height="13" fill="url(#pg186)"/><path d="M6.5 1.5 V11.5 M1.5 6.5 H11.5" stroke="#333" stroke-width="1.6"/></svg><svg class="abs" style="left:75px;top:185px" width="14" height="14" viewBox="0 0 14 14"><rect width="14" height="14" rx="2" fill="#3f95f0"/><path d="M3.3 7.2 L6 9.8 L10.8 4.3" fill="none" stroke="#fff" stroke-width="1.4"/></svg><div class="blur" style="left:98px;top:186px;width:77px;height:12px;background:#d9d9db;filter:blur(6px);opacity:.85"></div><div class="abs" style="left:22px;top:222px;width:33px;height:0;border-top:1px dashed #666"></div><svg class="abs" style="left:56px;top:216px" width="13" height="13" viewBox="0 0 13 13"><defs><linearGradient id="pg216" x1="0" y1="0" x2="0" y2="1"><stop offset="0" stop-color="#eaf3ff"/><stop offset="1" stop-color="#9cc4f0"/></linearGradient></defs><rect width="13" height="13" fill="url(#pg216)"/><path d="M6.5 1.5 V11.5 M1.5 6.5 H11.5" stroke="#333" stroke-width="1.6"/></svg><svg class="abs" style="left:75px;top:215px" width="14" height="14" viewBox="0 0 14 14"><rect width="14" height="14" rx="2" fill="#3f95f0"/><path d="M3.3 7.2 L6 9.8 L10.8 4.3" fill="none" stroke="#fff" stroke-width="1.4"/></svg><div class="blur" style="left:98px;top:216px;width:233px;height:12px;background:#d9d9db;filter:blur(6px);opacity:.85"></div><div class="abs" style="left:22px;top:252px;width:33px;height:0;border-top:1px dashed #666"></div><svg class="abs" style="left:56px;top:246px" width="13" height="13" viewBox="0 0 13 13"><defs><linearGradient id="pg246" x1="0" y1="0" x2="0" y2="1"><stop offset="0" stop-color="#eaf3ff"/><stop offset="1" stop-color="#9cc4f0"/></linearGradient></defs><rect width="13" height="13" fill="url(#pg246)"/><path d="M6.5 1.5 V11.5 M1.5 6.5 H11.5" stroke="#333" stroke-width="1.6"/></svg><svg class="abs" style="left:75px;top:245px" width="14" height="14" viewBox="0 0 14 14"><rect width="14" height="14" rx="2" fill="#3f95f0"/><path d="M3.3 7.2 L6 9.8 L10.8 4.3" fill="none" stroke="#fff" stroke-width="1.4"/></svg><div class="blur" style="left:98px;top:246px;width:168px;height:12px;background:#d9d9db;filter:blur(6px);opacity:.85"></div><div class="abs" style="left:22px;top:282px;width:33px;height:0;border-top:1px dashed #666"></div><svg class="abs" style="left:56px;top:276px" width="13" height="13" viewBox="0 0 13 13"><defs><linearGradient id="pg276" x1="0" y1="0" x2="0" y2="1"><stop offset="0" stop-color="#eaf3ff"/><stop offset="1" stop-color="#9cc4f0"/></linearGradient></defs><rect width="13" height="13" fill="url(#pg276)"/><path d="M6.5 1.5 V11.5 M1.5 6.5 H11.5" stroke="#333" stroke-width="1.6"/></svg><svg class="abs" style="left:75px;top:275px" width="14" height="14" viewBox="0 0 14 14"><rect width="14" height="14" rx="2" fill="#3f95f0"/><path d="M3.3 7.2 L6 9.8 L10.8 4.3" fill="none" stroke="#fff" stroke-width="1.4"/></svg><div class="blur" style="left:98px;top:276px;width:178px;height:12px;background:#d9d9db;filter:blur(6px);opacity:.85"></div><div class="abs" style="left:22px;top:312px;width:33px;height:0;border-top:1px dashed #666"></div><svg class="abs" style="left:55px;top:305px" width="14" height="14" viewBox="0 0 14 14"><rect width="14" height="14" rx="2" fill="#3f95f0"/><path d="M3.3 7.2 L6 9.8 L10.8 4.3" fill="none" stroke="#fff" stroke-width="1.4"/></svg><svg class="abs" style="left:76px;top:304px" width="16" height="14" viewBox="0 0 16 14"><path d="M8 1 L0.5 7.5 L1.5 8.5 L2.5 7.7 V13.5 H6.5 V9.5 H9.5 V13.5 H13.5 V7.7 L14.5 8.5 L15.5 7.5 L12.5 4.8 V1.5 H10.8 V3.3 Z" fill="#555"/></svg><div class="blur" style="left:98px;top:306px;width:127px;height:12px;background:#d9d9db;filter:blur(6px);opacity:.85"></div><div class="abs" style="left:22px;top:342px;width:33px;height:0;border-top:1px dashed #666"></div><svg class="abs" style="left:56px;top:336px" width="13" height="13" viewBox="0 0 13 13"><defs><linearGradient id="pg336" x1="0" y1="0" x2="0" y2="1"><stop offset="0" stop-color="#eaf3ff"/><stop offset="1" stop-color="#9cc4f0"/></linearGradient></defs><rect width="13" height="13" fill="url(#pg336)"/><path d="M6.5 1.5 V11.5 M1.5 6.5 H11.5" stroke="#333" stroke-width="1.6"/></svg><svg class="abs" style="left:75px;top:335px" width="14" height="14" viewBox="0 0 14 14"><rect width="14" height="14" rx="2" fill="#3f95f0"/><path d="M3.3 7.2 L6 9.8 L10.8 4.3" fill="none" stroke="#fff" stroke-width="1.4"/></svg><div class="blur" style="left:98px;top:336px;width:140px;height:12px;background:#d9d9db;filter:blur(6px);opacity:.85"></div><div class="abs" style="left:22px;top:372px;width:33px;height:0;border-top:1px dashed #666"></div><svg class="abs" style="left:56px;top:366px" width="13" height="13" viewBox="0 0 13 13"><defs><linearGradient id="pg366" x1="0" y1="0" x2="0" y2="1"><stop offset="0" stop-color="#eaf3ff"/><stop offset="1" stop-color="#9cc4f0"/></linearGradient></defs><rect width="13" height="13" fill="url(#pg366)"/><path d="M6.5 1.5 V11.5 M1.5 6.5 H11.5" stroke="#333" stroke-width="1.6"/></svg><svg class="abs" style="left:75px;top:365px" width="14" height="14" viewBox="0 0 14 14"><rect width="14" height="14" rx="2" fill="#3f95f0"/><path d="M3.3 7.2 L6 9.8 L10.8 4.3" fill="none" stroke="#fff" stroke-width="1.4"/></svg><div class="blur" style="left:98px;top:366px;width:93px;height:12px;background:#d9d9db;filter:blur(6px);opacity:.85"></div><div class="abs" style="left:22px;top:402px;width:33px;height:0;border-top:1px dashed #666"></div><svg class="abs" style="left:55px;top:395px" width="14" height="14" viewBox="0 0 14 14"><rect width="14" height="14" rx="2" fill="#3f95f0"/><path d="M3.3 7.2 L6 9.8 L10.8 4.3" fill="none" stroke="#fff" stroke-width="1.4"/></svg><svg class="abs" style="left:76px;top:394px" width="16" height="14" viewBox="0 0 16 14"><path d="M8 1 L0.5 7.5 L1.5 8.5 L2.5 7.7 V13.5 H6.5 V9.5 H9.5 V13.5 H13.5 V7.7 L14.5 8.5 L15.5 7.5 L12.5 4.8 V1.5 H10.8 V3.3 Z" fill="#555"/></svg><div class="blur" style="left:98px;top:396px;width:167px;height:12px;background:#d9d9db;filter:blur(6px);opacity:.85"></div><div class="abs" style="left:22px;top:432px;width:33px;height:0;border-top:1px dashed #666"></div><svg class="abs" style="left:56px;top:426px" width="13" height="13" viewBox="0 0 13 13"><defs><linearGradient id="pg426" x1="0" y1="0" x2="0" y2="1"><stop offset="0" stop-color="#eaf3ff"/><stop offset="1" stop-color="#9cc4f0"/></linearGradient></defs><rect width="13" height="13" fill="url(#pg426)"/><path d="M6.5 1.5 V11.5 M1.5 6.5 H11.5" stroke="#333" stroke-width="1.6"/></svg><svg class="abs" style="left:75px;top:425px" width="14" height="14" viewBox="0 0 14 14"><rect width="14" height="14" rx="2" fill="#3f95f0"/><path d="M3.3 7.2 L6 9.8 L10.8 4.3" fill="none" stroke="#fff" stroke-width="1.4"/></svg><div class="blur" style="left:98px;top:426px;width:228px;height:12px;background:#d9d9db;filter:blur(6px);opacity:.85"></div><div class="abs" style="left:22px;top:462px;width:33px;height:0;border-top:1px dashed #666"></div><svg class="abs" style="left:56px;top:456px" width="13" height="13" viewBox="0 0 13 13"><defs><linearGradient id="pg456" x1="0" y1="0" x2="0" y2="1"><stop offset="0" stop-color="#eaf3ff"/><stop offset="1" stop-color="#9cc4f0"/></linearGradient></defs><rect width="13" height="13" fill="url(#pg456)"/><path d="M6.5 1.5 V11.5 M1.5 6.5 H11.5" stroke="#333" stroke-width="1.6"/></svg><svg class="abs" style="left:75px;top:455px" width="14" height="14" viewBox="0 0 14 14"><rect width="14" height="14" rx="2" fill="#3f95f0"/><path d="M3.3 7.2 L6 9.8 L10.8 4.3" fill="none" stroke="#fff" stroke-width="1.4"/></svg><div class="blur" style="left:98px;top:456px;width:154px;height:12px;background:#d9d9db;filter:blur(6px);opacity:.85"></div><div class="abs" style="left:22px;top:492px;width:33px;height:0;border-top:1px dashed #666"></div><svg class="abs" style="left:56px;top:486px" width="13" height="13" viewBox="0 0 13 13"><defs><linearGradient id="pg486" x1="0" y1="0" x2="0" y2="1"><stop offset="0" stop-color="#eaf3ff"/><stop offset="1" stop-color="#9cc4f0"/></linearGradient></defs><rect width="13" height="13" fill="url(#pg486)"/><path d="M6.5 1.5 V11.5 M1.5 6.5 H11.5" stroke="#333" stroke-width="1.6"/></svg><svg class="abs" style="left:75px;top:485px" width="14" height="14" viewBox="0 0 14 14"><rect width="14" height="14" rx="2" fill="#3f95f0"/><path d="M3.3 7.2 L6 9.8 L10.8 4.3" fill="none" stroke="#fff" stroke-width="1.4"/></svg><div class="blur" style="left:98px;top:486px;width:261px;height:12px;background:#d9d9db;filter:blur(6px);opacity:.85"></div><div class="abs" style="left:22px;top:522px;width:33px;height:0;border-top:1px dashed #666"></div><svg class="abs" style="left:56px;top:516px" width="13" height="13" viewBox="0 0 13 13"><defs><linearGradient id="pg516" x1="0" y1="0" x2="0" y2="1"><stop offset="0" stop-color="#eaf3ff"/><stop offset="1" stop-color="#9cc4f0"/></linearGradient></defs><rect width="13" height="13" fill="url(#pg516)"/><path d="M6.5 1.5 V11.5 M1.5 6.5 H11.5" stroke="#333" stroke-width="1.6"/></svg><svg class="abs" style="left:75px;top:515px" width="14" height="14" viewBox="0 0 14 14"><rect width="14" height="14" rx="2" fill="#3f95f0"/><path d="M3.3 7.2 L6 9.8 L10.8 4.3" fill="none" stroke="#fff" stroke-width="1.4"/></svg><div class="blur" style="left:98px;top:516px;width:201px;height:12px;background:#d9d9db;filter:blur(6px);opacity:.85"></div><div class="abs" style="left:22px;top:552px;width:33px;height:0;border-top:1px dashed #666"></div><svg class="abs" style="left:56px;top:546px" width="13" height="13" viewBox="0 0 13 13"><defs><linearGradient id="pg546" x1="0" y1="0" x2="0" y2="1"><stop offset="0" stop-color="#eaf3ff"/><stop offset="1" stop-color="#9cc4f0"/></linearGradient></defs><rect width="13" height="13" fill="url(#pg546)"/><path d="M6.5 1.5 V11.5 M1.5 6.5 H11.5" stroke="#333" stroke-width="1.6"/></svg><svg class="abs" style="left:75px;top:545px" width="14" height="14" viewBox="0 0 14 14"><rect width="14" height="14" rx="2" fill="#3f95f0"/><path d="M3.3 7.2 L6 9.8 L10.8 4.3" fill="none" stroke="#fff" stroke-width="1.4"/></svg><div class="blur" style="left:98px;top:546px;width:308px;height:12px;background:#d9d9db;filter:blur(6px);opacity:.85"></div><div class="abs" style="left:22px;top:582px;width:33px;height:0;border-top:1px dashed #666"></div><svg class="abs" style="left:55px;top:575px" width="14" height="14" viewBox="0 0 14 14"><rect width="14" height="14" rx="2" fill="#3f95f0"/><path d="M3.3 7.2 L6 9.8 L10.8 4.3" fill="none" stroke="#fff" stroke-width="1.4"/></svg><svg class="abs" style="left:76px;top:574px" width="16" height="14" viewBox="0 0 16 14"><path d="M8 1 L0.5 7.5 L1.5 8.5 L2.5 7.7 V13.5 H6.5 V9.5 H9.5 V13.5 H13.5 V7.7 L14.5 8.5 L15.5 7.5 L12.5 4.8 V1.5 H10.8 V3.3 Z" fill="#555"/></svg><div class="blur" style="left:98px;top:576px;width:214px;height:12px;background:#d9d9db;filter:blur(6px);opacity:.85"></div><div class="abs" style="left:22px;top:612px;width:33px;height:0;border-top:1px dashed #666"></div><svg class="abs" style="left:55px;top:605px" width="14" height="14" viewBox="0 0 14 14"><rect width="14" height="14" rx="2" fill="#3f95f0"/><path d="M3.3 7.2 L6 9.8 L10.8 4.3" fill="none" stroke="#fff" stroke-width="1.4"/></svg><svg class="abs" style="left:76px;top:604px" width="16" height="14" viewBox="0 0 16 14"><path d="M8 1 L0.5 7.5 L1.5 8.5 L2.5 7.7 V13.5 H6.5 V9.5 H9.5 V13.5 H13.5 V7.7 L14.5 8.5 L15.5 7.5 L12.5 4.8 V1.5 H10.8 V3.3 Z" fill="#555"/></svg><div class="blur" style="left:98px;top:606px;width:196px;height:12px;background:#d9d9db;filter:blur(6px);opacity:.85"></div><div class="abs" style="left:96px;top:598px;width:323px;height:12px;background:linear-gradient(rgba(170,200,245,0),#a9c6f4)"></div><div class="abs" style="left:567px;top:77px;width:13px;height:533px;background:#e9eefb"></div><div class="abs" style="left:567px;top:77px;width:13px;height:50px;background:#8bb0f5"></div></div><div id="status"><div class="abs" style="left:0;top:0;width:80px;height:35px;background:#6d9ef4;border-bottom:3px solid #f5a623"></div><div class="sq" style="left:8px;background:#fff"></div><div class="cnt" style="left:15px">3018</div><div class="st" style="left:57px">All</div><div class="sq" style="left:88px;background:linear-gradient(#5cc75c,#1e9a1e)"></div><div class="cnt" style="left:95px">112</div><div class="st" style="left:130px">Motion</div><div class="sq" style="left:184px;background:linear-gradient(#d9f06a,#9fd22a)"></div><div class="cnt" style="left:192px">0</div><div class="st" style="left:214px">Idling</div><div class="sq" style="left:262px;background:linear-gradient(#f5b041,#e2801a)"></div><div class="cnt" style="left:268px">904</div><div class="st" style="left:305px">Stationary</div><div class="sq" style="left:380px;background:linear-gradient(#4fc3f7,#1a9be6)"></div><div class="cnt" style="left:389px">98</div><div class="st" style="left:415px">Not positioned</div><svg class="abs" style="left:512px;top:9px" width="17" height="19" viewBox="0 0 17 19"><path d="M4 8 V5 A4 4 0 0 1 12 5" fill="none" stroke="#2bd12b" stroke-width="2.2"/><rect x="3" y="9" width="12" height="9" rx="1.5" fill="#2bd12b"/><circle cx="9" cy="13" r="1.3" fill="#137a13"/></svg><div class="cnt" style="left:522px">1488</div><div class="st" style="left:564px">Unlock</div><svg class="abs" style="left:620px;top:9px" width="14" height="19" viewBox="0 0 14 19"><path d="M3 9 V5.5 A4 4 0 0 1 11 5.5 V6" fill="none" stroke="#fff" stroke-width="2"/><rect x="1" y="9" width="12" height="9" rx="1.5" fill="#fff"/><circle cx="7" cy="13" r="1.3" fill="#4486f2"/></svg><div class="cnt" style="left:628px">1202</div><div class="st" style="left:670px">Lock</div><div class="sq" style="left:714px;background:linear-gradient(#777,#333)"></div><div class="cnt" style="left:721px">1722</div><div class="st" style="left:763px">Offline</div><div class="sq" style="left:817px;background:linear-gradient(#bbb,#888)"></div><div class="cnt" style="left:824px">182</div><div class="st" style="left:860px">Inactivated</div><svg class="abs" style="left:938px;top:9px" width="17" height="17" viewBox="0 0 17 17"><circle cx="8.5" cy="8.5" r="7.3" fill="none" stroke="#fff" stroke-width="1.4"/><circle cx="9.3" cy="4.8" r="1.1" fill="#fff"/><path d="M7.2 7.3 H9.5 L8.3 12.5 H10" fill="none" stroke="#fff" stroke-width="1.5"/></svg><svg class="abs" style="left:968px;top:10px" width="15" height="15" viewBox="0 0 15 15"><circle cx="6" cy="6" r="4.3" fill="none" stroke="#fff" stroke-width="2.2"/><path d="M9 9 L13 13" stroke="#fff" stroke-width="2.6" stroke-linecap="round"/></svg><svg class="abs" style="left:1600px;top:8px" width="19" height="19" viewBox="0 0 19 19"><circle cx="15" cy="3.5" r="2.8" fill="#fff"/><circle cx="4" cy="9.5" r="3.2" fill="#fff"/><circle cx="15" cy="15.5" r="2.8" fill="#fff"/><path d="M4 9.5 L15 3.5 M4 9.5 L15 15.5" stroke="#fff" stroke-width="2"/></svg><svg class="abs" style="left:1642px;top:8px" width="16" height="19" viewBox="0 0 16 19"><path d="M2 1.5 H14 M2 17.5 H14" stroke="#fff" stroke-width="2.2"/><path d="M3.5 1.5 C3.5 6 8 7 8 9.5 C8 12 3.5 13 3.5 17.5 M12.5 1.5 C12.5 6 8 7 8 9.5 C8 12 12.5 13 12.5 17.5" fill="none" stroke="#fff" stroke-width="1.8"/></svg><svg class="abs" style="left:1681px;top:8px" width="18" height="19" viewBox="0 0 18 19"><path d="M8 3 H2 V17 H14 V11" fill="none" stroke="#fff" stroke-width="2"/><path d="M6 13 C6 8 9 6 14 6" fill="none" stroke="#fff" stroke-width="2"/><path d="M12 2 L16.5 6 L12 10 Z" fill="#fff"/></svg><svg class="abs" style="left:1720px;top:8px" width="19" height="19" viewBox="0 0 19 19"><path d="M17.63 7.85 L17.63 11.15 L15.98 10.76 L14.97 13.19 L16.42 14.09 L14.09 16.42 L13.19 14.97 L10.76 15.98 L11.15 17.63 L7.85 17.63 L8.24 15.98 L5.81 14.97 L4.91 16.42 L2.58 14.09 L4.03 13.19 L3.02 10.76 L1.37 11.15 L1.37 7.85 L3.02 8.24 L4.03 5.81 L2.58 4.91 L4.91 2.58 L5.81 4.03 L8.24 3.02 L7.85 1.37 L11.15 1.37 L10.76 3.02 L13.19 4.03 L14.09 2.58 L16.42 4.91 L14.97 5.81 L15.98 8.24Z" fill="none" stroke="#fff" stroke-width="1.8" stroke-linejoin="round"/><circle cx="9.5" cy="9.5" r="2.6" fill="none" stroke="#fff" stroke-width="1.8"/></svg><svg class="abs" style="left:1762px;top:8px" width="19" height="19" viewBox="0 0 19 19"><rect x="5.5" y="1.5" width="12" height="12" rx="3" fill="none" stroke="#fff" stroke-width="2"/><path d="M3.5 5 Q1.5 5.5 1.5 8 V14.5 Q1.5 17.5 4.5 17.5 H11 Q13.5 17.5 14 15.5" fill="none" stroke="#fff" stroke-width="2"/></svg><svg class="abs" style="left:1800px;top:9px" width="17" height="17" viewBox="0 0 17 17"><path d="M1.5 6 V1.5 H6 M11 1.5 H15.5 V6 M15.5 11 V15.5 H11 M6 15.5 H1.5 V11" fill="none" stroke="#fff" stroke-width="2.2"/></svg><div class="abs" style="left:1840px;top:16px;width:16px;height:3px;background:#fff"></div></div><div id="thead"><div class="th" style="left:0px;width:61px">Index</div><div class="th" style="left:61px;width:140px;padding-right:6px">Company<svg class="sort" viewBox="0 0 9 14"><path d="M0.5 5.5 L4.5 1 L8.5 5.5 Z" fill="#9a9a9a"/><path d="M0.5 8.5 L4.5 13 L8.5 8.5 Z" fill="#9a9a9a"/></svg></div><div class="th" style="left:201px;width:140px;padding-right:6px"><svg class="sort" style="width:18px;height:15px;margin:0 3px 0 0;top:-2px" viewBox="0 0 18 15"><path d="M3 6 L5 1.5 H13 L15 6 H17 V12 H15 V14 H12.5 V12 H5.5 V14 H3 V12 H1 V6 Z" fill="#1a62c4"/><path d="M4.5 6 L6 2.8 H12 L13.5 6 Z" fill="#bedcf8"/><circle cx="4.5" cy="9" r="1.3" fill="#bedcf8"/><circle cx="13.5" cy="9" r="1.3" fill="#bedcf8"/></svg>Asset Name<svg class="sort" viewBox="0 0 9 14"><path d="M0.5 5.5 L4.5 1 L8.5 5.5 Z" fill="#9a9a9a"/><path d="M0.5 8.5 L4.5 13 L8.5 8.5 Z" fill="#9a9a9a"/></svg></div><div class="th" style="left:341px;width:140px;padding-right:6px"><svg class="sort" style="width:14px;height:15px;margin:0 3px 0 0;top:-2px" viewBox="0 0 14 15"><path d="M1 1 V14 M4.5 1 V14 M8 1 V14 M12 1 V14" stroke="#1a62c4" stroke-width="2"/></svg>Device ID<svg class="sort" viewBox="0 0 9 14"><path d="M0.5 5.5 L4.5 1 L8.5 5.5 Z" fill="#9a9a9a"/><path d="M0.5 8.5 L4.5 13 L8.5 8.5 Z" fill="#9a9a9a"/></svg></div><div class="th" style="left:481px;width:120px;padding-right:6px"><svg class="sort" style="width:12px;height:16px;margin:0 4px 0 0;top:-2px" viewBox="0 0 12 16"><rect x="0.5" y="0.5" width="11" height="15" rx="1.5" fill="#1a62c4"/><rect x="2" y="2" width="8" height="10.5" fill="#3d8be8"/></svg>D-Type<svg class="sort" viewBox="0 0 9 14"><path d="M0.5 5.5 L4.5 1 L8.5 5.5 Z" fill="#9a9a9a"/><path d="M0.5 8.5 L4.5 13 L8.5 8.5 Z" fill="#9a9a9a"/></svg></div><div class="th" style="left:601px;width:120px;padding-right:6px"><svg class="sort" style="width:16px;height:16px;margin:0;top:-2px" viewBox="0 0 16 16"><path d="M9 2 H2 V14 H14 V7" fill="none" stroke="#1a62c4" stroke-width="2"/><path d="M6 10 L6.5 7.5 L13 1 L15 3 L8.5 9.5 Z" fill="#1a62c4"/></svg><svg class="sort" viewBox="0 0 9 14"><path d="M0.5 5.5 L4.5 1 L8.5 5.5 Z" fill="#9a9a9a"/><path d="M0.5 8.5 L4.5 13 L8.5 8.5 Z" fill="#9a9a9a"/></svg></div><div class="th" style="left:721px;width:70px;padding-right:6px"><svg class="sort" style="width:17px;height:17px;margin:0;top:-2px" viewBox="0 0 17 17"><circle cx="8.5" cy="8.5" r="7.3" fill="none" stroke="#1a62c4" stroke-width="1.6"/><circle cx="8.5" cy="8.5" r="4" fill="#1a62c4"/></svg><svg class="sort" viewBox="0 0 9 14"><path d="M0.5 5.5 L4.5 1 L8.5 5.5 Z" fill="#9a9a9a"/><path d="M0.5 8.5 L4.5 13 L8.5 8.5 Z" fill="#9a9a9a"/></svg></div><div class="th" style="left:791px;width:160px;padding-right:6px"><svg class="sort" style="width:18px;height:18px;margin:0;top:-2px" viewBox="0 0 18 18"><circle cx="9" cy="9" r="6" fill="none" stroke="#1a62c4" stroke-width="2"/><path d="M9 1 V17 M1 9 H17" stroke="#1a62c4" stroke-width="2"/><circle cx="9" cy="9" r="1.3" fill="#1a62c4"/></svg><svg class="sort" viewBox="0 0 9 14"><path d="M0.5 5.5 L4.5 1 L8.5 5.5 Z" fill="#9a9a9a"/><path d="M0.5 8.5 L4.5 13 L8.5 8.5 Z" fill="#3a7bd5"/></svg></div><div class="th" style="left:951px;width:160px;padding-right:6px"><svg class="sort" style="width:18px;height:18px;margin:0;top:-2px" viewBox="0 0 18 18"><path d="M4.5 12.5 A6 6 0 1 1 13.5 12.5 M6.5 10.5 A3.3 3.3 0 1 1 11.5 10.5" fill="none" stroke="#1a62c4" stroke-width="1.8"/><path d="M9 9 L5 17 H13 Z" fill="#1a62c4"/></svg><svg class="sort" viewBox="0 0 9 14"><path d="M0.5 5.5 L4.5 1 L8.5 5.5 Z" fill="#9a9a9a"/><path d="M0.5 8.5 L4.5 13 L8.5 8.5 Z" fill="#9a9a9a"/></svg></div><div class="th" style="left:1111px;width:100px;padding-right:6px"><svg class="sort" style="width:18px;height:18px;margin:0;top:-2px" viewBox="0 0 18 18"><path d="M9 2.5 A7 7 0 1 1 3.5 5" fill="none" stroke="#1a62c4" stroke-width="1.8"/><path d="M5 4.5 L10 9.5" stroke="#1a62c4" stroke-width="1.8"/></svg><svg class="sort" viewBox="0 0 9 14"><path d="M0.5 5.5 L4.5 1 L8.5 5.5 Z" fill="#9a9a9a"/><path d="M0.5 8.5 L4.5 13 L8.5 8.5 Z" fill="#9a9a9a"/></svg></div><div class="th" style="left:1211px;width:100px;padding-right:6px"><svg class="sort" style="width:18px;height:18px;margin:0;top:-2px" viewBox="0 0 18 18"><path d="M9 1 C6 1 4.5 3 4.5 5.5 C4.5 8.5 9 12 9 12 C9 12 13.5 8.5 13.5 5.5 C13.5 3 12 1 9 1 Z" fill="#1a62c4"/><circle cx="9" cy="5.3" r="1.8" fill="#bedcf8"/><path d="M1 14 H11 C15 14 15 17 11 17 H5" fill="none" stroke="#1a62c4" stroke-width="1.6"/></svg><svg class="sort" viewBox="0 0 9 14"><path d="M0.5 5.5 L4.5 1 L8.5 5.5 Z" fill="#9a9a9a"/><path d="M0.5 8.5 L4.5 13 L8.5 8.5 Z" fill="#9a9a9a"/></svg></div><div class="th" style="left:1311px;width:150px;padding-right:6px"><svg class="sort" style="width:18px;height:14px;margin:0;top:-2px" viewBox="0 0 18 14"><rect x="1" y="2" width="14" height="10" rx="1.5" fill="none" stroke="#1a62c4" stroke-width="1.8"/><rect x="3.5" y="4.5" width="7" height="5" fill="#1a62c4"/><rect x="15.5" y="5" width="2" height="4" fill="#1a62c4"/></svg><svg class="sort" viewBox="0 0 9 14"><path d="M0.5 5.5 L4.5 1 L8.5 5.5 Z" fill="#9a9a9a"/><path d="M0.5 8.5 L4.5 13 L8.5 8.5 Z" fill="#9a9a9a"/></svg></div><div class="th" style="left:1461px;width:180px"><svg class="sort" style="width:13px;height:18px;margin:0;top:-2px" viewBox="0 0 13 18"><path d="M6.5 0.5 C3 0.5 0.5 3 0.5 6.5 C0.5 10.5 6.5 17.5 6.5 17.5 C6.5 17.5 12.5 10.5 12.5 6.5 C12.5 3 10 0.5 6.5 0.5 Z" fill="#1a62c4"/><circle cx="6.5" cy="6.5" r="2.5" fill="#bedcf8"/></svg></div><div class="th" style="left:1641px;width:160px;padding-right:6px"><svg class="sort" style="width:20px;height:18px;margin:0;top:-2px" viewBox="0 0 20 18"><path d="M10 0 V18 M0 11 H20" stroke="#1a62c4" stroke-width="1.6"/><circle cx="10" cy="11" r="3.2" fill="#bedcf8" stroke="#1a62c4" stroke-width="1.6"/></svg><svg class="sort" viewBox="0 0 9 14"><path d="M0.5 5.5 L4.5 1 L8.5 5.5 Z" fill="#9a9a9a"/><path d="M0.5 8.5 L4.5 13 L8.5 8.5 Z" fill="#9a9a9a"/></svg></div><div class="th" style="left:1801px;width:60px;padding-right:6px"><svg class="sort" style="width:16px;height:18px;margin:0;top:-2px" viewBox="0 0 16 18"><path d="M3 9 V7 M6.5 9 V5 M10 9 V3 M13.5 9 V1" stroke="#1a62c4" stroke-width="2"/><text x="8" y="17.8" text-anchor="middle" font-size="8" font-weight="bold" font-family="Liberation Sans" fill="#1a62c4">GPS</text></svg><svg class="sort" viewBox="0 0 9 14"><path d="M0.5 5.5 L4.5 1 L8.5 5.5 Z" fill="#9a9a9a"/><path d="M0.5 8.5 L4.5 13 L8.5 8.5 Z" fill="#9a9a9a"/></svg></div></div><div class="row" style="top:773px;height:35px;background:#fff"><div class="td" style="left:0px;width:61px">1</div><div class="td" style="left:61px;width:140px"></div><div class="td" style="left:201px;width:140px"></div><div class="td" style="left:341px;width:140px"></div><div class="td" style="left:481px;width:120px">JT701</div><div class="td" style="left:601px;width:120px"></div><div class="td" style="left:721px;width:70px"><svg style="vertical-align:middle;position:relative;top:-2px" width="14" height="15" viewBox="0 0 14 15"><path d="M3.5 9.5 A5 5 0 1 1 10.5 9.5 M5.3 7.8 A2.5 2.5 0 1 1 8.7 7.8" fill="none" stroke="#1e88e5" stroke-width="1.5"/><circle cx="7" cy="6" r="1.2" fill="#1e88e5"/><path d="M7 6 V14.5" stroke="#1e88e5" stroke-width="1.6"/></svg></div><div class="td" style="left:791px;width:160px">2025-05-22 10:53:44</div><div class="td" style="left:951px;width:160px">2025-05-22 10:52:23</div><div class="td" style="left:1111px;width:100px">0</div><div class="td" style="left:1211px;width:100px">7042</div><div class="td" style="left:1311px;width:150px">15%</div><div class="td" style="left:1461px;width:180px;text-align:left;padding-left:11px">Cancha de Fútbol, Diagona...</div><div class="td" style="left:1641px;width:160px">10.38958,-75.506587</div><div class="td" style="left:1801px;width:59px">0</div></div><div class="row" style="top:808px;height:35px;background:#f9f9f9"><div class="td" style="left:0px;width:61px">2</div><div class="td" style="left:61px;width:140px"></div><div class="td" style="left:201px;width:140px"></div><div class="td" style="left:341px;width:140px"></div><div class="td" style="left:481px;width:120px">JT701D</div><div class="td" style="left:601px;width:120px"></div><div class="td" style="left:721px;width:70px"><svg style="vertical-align:middle;position:relative;top:-2px" width="14" height="15" viewBox="0 0 14 15"><path d="M3.5 9.5 A5 5 0 1 1 10.5 9.5 M5.3 7.8 A2.5 2.5 0 1 1 8.7 7.8" fill="none" stroke="#1e88e5" stroke-width="1.5"/><circle cx="7" cy="6" r="1.2" fill="#1e88e5"/><path d="M7 6 V14.5" stroke="#1e88e5" stroke-width="1.6"/></svg></div><div class="td" style="left:791px;width:160px">2025-05-22 10:53:05</div><div class="td" style="left:951px;width:160px">2025-05-22 10:52:15</div><div class="td" style="left:1111px;width:100px">0</div><div class="td" style="left:1211px;width:100px">30893</div><div class="td" style="left:1311px;width:150px">80%</div><div class="td" style="left:1461px;width:180px;text-align:left;padding-left:11px">Avenida Carrera 86, Vallad...</div><div class="td" style="left:1641px;width:160px">4.655838,-74.141235</div><div class="td" style="left:1801px;width:59px">0</div></div><div class="row" style="top:843px;height:35px;background:#fff"><div class="td" style="left:0px;width:61px">3</div><div class="td" style="left:61px;width:140px"></div><div class="td" style="left:201px;width:140px"></div><div class="td" style="left:341px;width:140px"></div><div class="td" style="left:481px;width:120px">JT701D</div><div class="td" style="left:601px;width:120px"></div><div class="td" style="left:721px;width:70px"><svg style="vertical-align:middle;position:relative;top:-2px" width="15" height="15" viewBox="0 0 15 15"><path d="M4 2 L13 11 M13 2 L4 11" stroke="#2ec22e" stroke-width="3.2"/><path d="M1 10 A4 4 0 0 0 5 14 M1 12.5 A2 2 0 0 0 2.5 14" fill="none" stroke="#2ec22e" stroke-width="1.2"/></svg></div><div class="td" style="left:791px;width:160px">2025-05-22 10:52:47</div><div class="td" style="left:951px;width:160px">2025-05-22 10:52:37</div><div class="td" style="left:1111px;width:100px">0</div><div class="td" style="left:1211px;width:100px">30048</div><div class="td" style="left:1311px;width:150px">50%</div><div class="td" style="left:1461px;width:180px;text-align:left;padding-left:11px">0109, Vientiane, Vientiane ...</div><div class="td" style="left:1641px;width:160px">17.91329,102.706863</div><div class="td" style="left:1801px;width:59px">4</div></div><div class="row" style="top:878px;height:35px;background:#f9f9f9"><div class="td" style="left:0px;width:61px">4</div><div class="td" style="left:61px;width:140px"></div><div class="td" style="left:201px;width:140px"></div><div class="td" style="left:341px;width:140px"></div><div class="td" style="left:481px;width:120px">JT701</div><div class="td" style="left:601px;width:120px"></div><div class="td" style="left:721px;width:70px"><svg style="vertical-align:middle;position:relative;top:-2px" width="15" height="15" viewBox="0 0 15 15"><path d="M4 2 L13 11 M13 2 L4 11" stroke="#2ec22e" stroke-width="3.2"/><path d="M1 10 A4 4 0 0 0 5 14 M1 12.5 A2 2 0 0 0 2.5 14" fill="none" stroke="#2ec22e" stroke-width="1.2"/></svg></div><div class="td" style="left:791px;width:160px">2025-05-22 10:52:47</div><div class="td" style="left:951px;width:160px">2025-05-22 10:52:38</div><div class="td" style="left:1111px;width:100px">0</div><div class="td" style="left:1211px;width:100px">23771</div><div class="td" style="left:1311px;width:150px">100%</div><div class="td" style="left:1461px;width:180px;text-align:left;padding-left:11px">0109, Vientiane, Vientiane ...</div><div class="td" style="left:1641px;width:160px">17.913287,102.706963</div><div class="td" style="left:1801px;width:59px">12</div></div><div class="row" style="top:913px;height:27px;background:#fff"><div class="td" style="left:0px;width:61px">5</div><div class="td" style="left:61px;width:140px"></div><div class="td" style="left:201px;width:140px"></div><div class="td" style="left:341px;width:140px"></div><div class="td" style="left:481px;width:120px">JT701</div><div class="td" style="left:601px;width:120px"></div><div class="td" style="left:721px;width:70px"><svg style="vertical-align:middle;position:relative;top:-2px" width="15" height="15" viewBox="0 0 15 15"><path d="M4 2 L13 11 M13 2 L4 11" stroke="#2ec22e" stroke-width="3.2"/><path d="M1 10 A4 4 0 0 0 5 14 M1 12.5 A2 2 0 0 0 2.5 14" fill="none" stroke="#2ec22e" stroke-width="1.2"/></svg></div><div class="td" style="left:791px;width:160px">2025-05-22 10:52:46</div><div class="td" style="left:951px;width:160px">2025-05-22 10:52:36</div><div class="td" style="left:1111px;width:100px">0</div><div class="td" style="left:1211px;width:100px">28131</div><div class="td" style="left:1311px;width:150px">68%</div><div class="td" style="left:1461px;width:180px;text-align:left;padding-left:11px">0109, Vientiane, Vientiane ...</div><div class="td" style="left:1641px;width:160px">17.91329,102.706518</div><div class="td" style="left:1801px;width:59px">5</div></div><div class="abs" style="left:113px;top:775px;width:135px;height:165px;background:linear-gradient(#eef2f8,#f8f8f9 18%,#f8f8f9 88%,#cfdaf4)"></div><div class="blur" style="left:125px;top:786px;width:110px;height:12px;background:#d8d9dc;filter:blur(7px)"></div><div class="blur" style="left:155px;top:821px;width:55px;height:12px;background:#d8d9dc;filter:blur(7px)"></div><div class="blur" style="left:120px;top:856px;width:100px;height:12px;background:#d8d9dc;filter:blur(7px)"></div><div class="blur" style="left:120px;top:891px;width:100px;height:12px;background:#d8d9dc;filter:blur(7px)"></div><div class="blur" style="left:120px;top:926px;width:110px;height:12px;background:#d8d9dc;filter:blur(7px)"></div><div class="abs" style="left:256px;top:776px;width:128px;height:162px;background:linear-gradient(#f4f5f8,#fbfbfc 20%,#fbfbfc 85%,#d9e3f8)"></div><div class="blur" style="left:290px;top:786px;width:65px;height:10px;background:#f0d6b8;filter:blur(7px)"></div><div class="blur" style="left:262px;top:817px;width:118px;height:18px;background:#eccba5;filter:blur(7px)"></div><div class="blur" style="left:285px;top:927px;width:80px;height:8px;background:#efd5b8;filter:blur(7px)"></div><div class="abs" style="left:402px;top:776px;width:128px;height:162px;background:linear-gradient(#f7f8fa,#fdfdfd 20%,#fdfdfd 85%,#d5e0f8)"></div><div class="blur" style="left:425px;top:786px;width:70px;height:12px;background:#f2d8bc;filter:blur(7px)"></div><div class="blur" style="left:425px;top:821px;width:70px;height:12px;background:#f2d8bc;filter:blur(7px)"></div><div class="blur" style="left:425px;top:856px;width:70px;height:12px;background:#f2d8bc;filter:blur(7px)"></div><div class="blur" style="left:425px;top:891px;width:70px;height:12px;background:#f2d8bc;filter:blur(7px)"></div><div class="blur" style="left:425px;top:926px;width:70px;height:12px;background:#f2d8bc;filter:blur(7px)"></div><div class="abs" style="left:1906px;top:773px;width:12px;height:167px;background:#e9eefb"></div><div class="abs" style="left:1906px;top:773px;width:12px;height:78px;background:#8bb0f5"></div><div class="abs" style="left:50px;top:940px;width:1870px;height:13px;background:#e9eefb"></div><div class="abs" style="left:50px;top:940px;width:1537px;height:12px;background:#8bb0f5"></div><div class="abs" style="left:853px;top:943px;width:350px;height:5px;background:#a6c2f6"></div></body></html>
